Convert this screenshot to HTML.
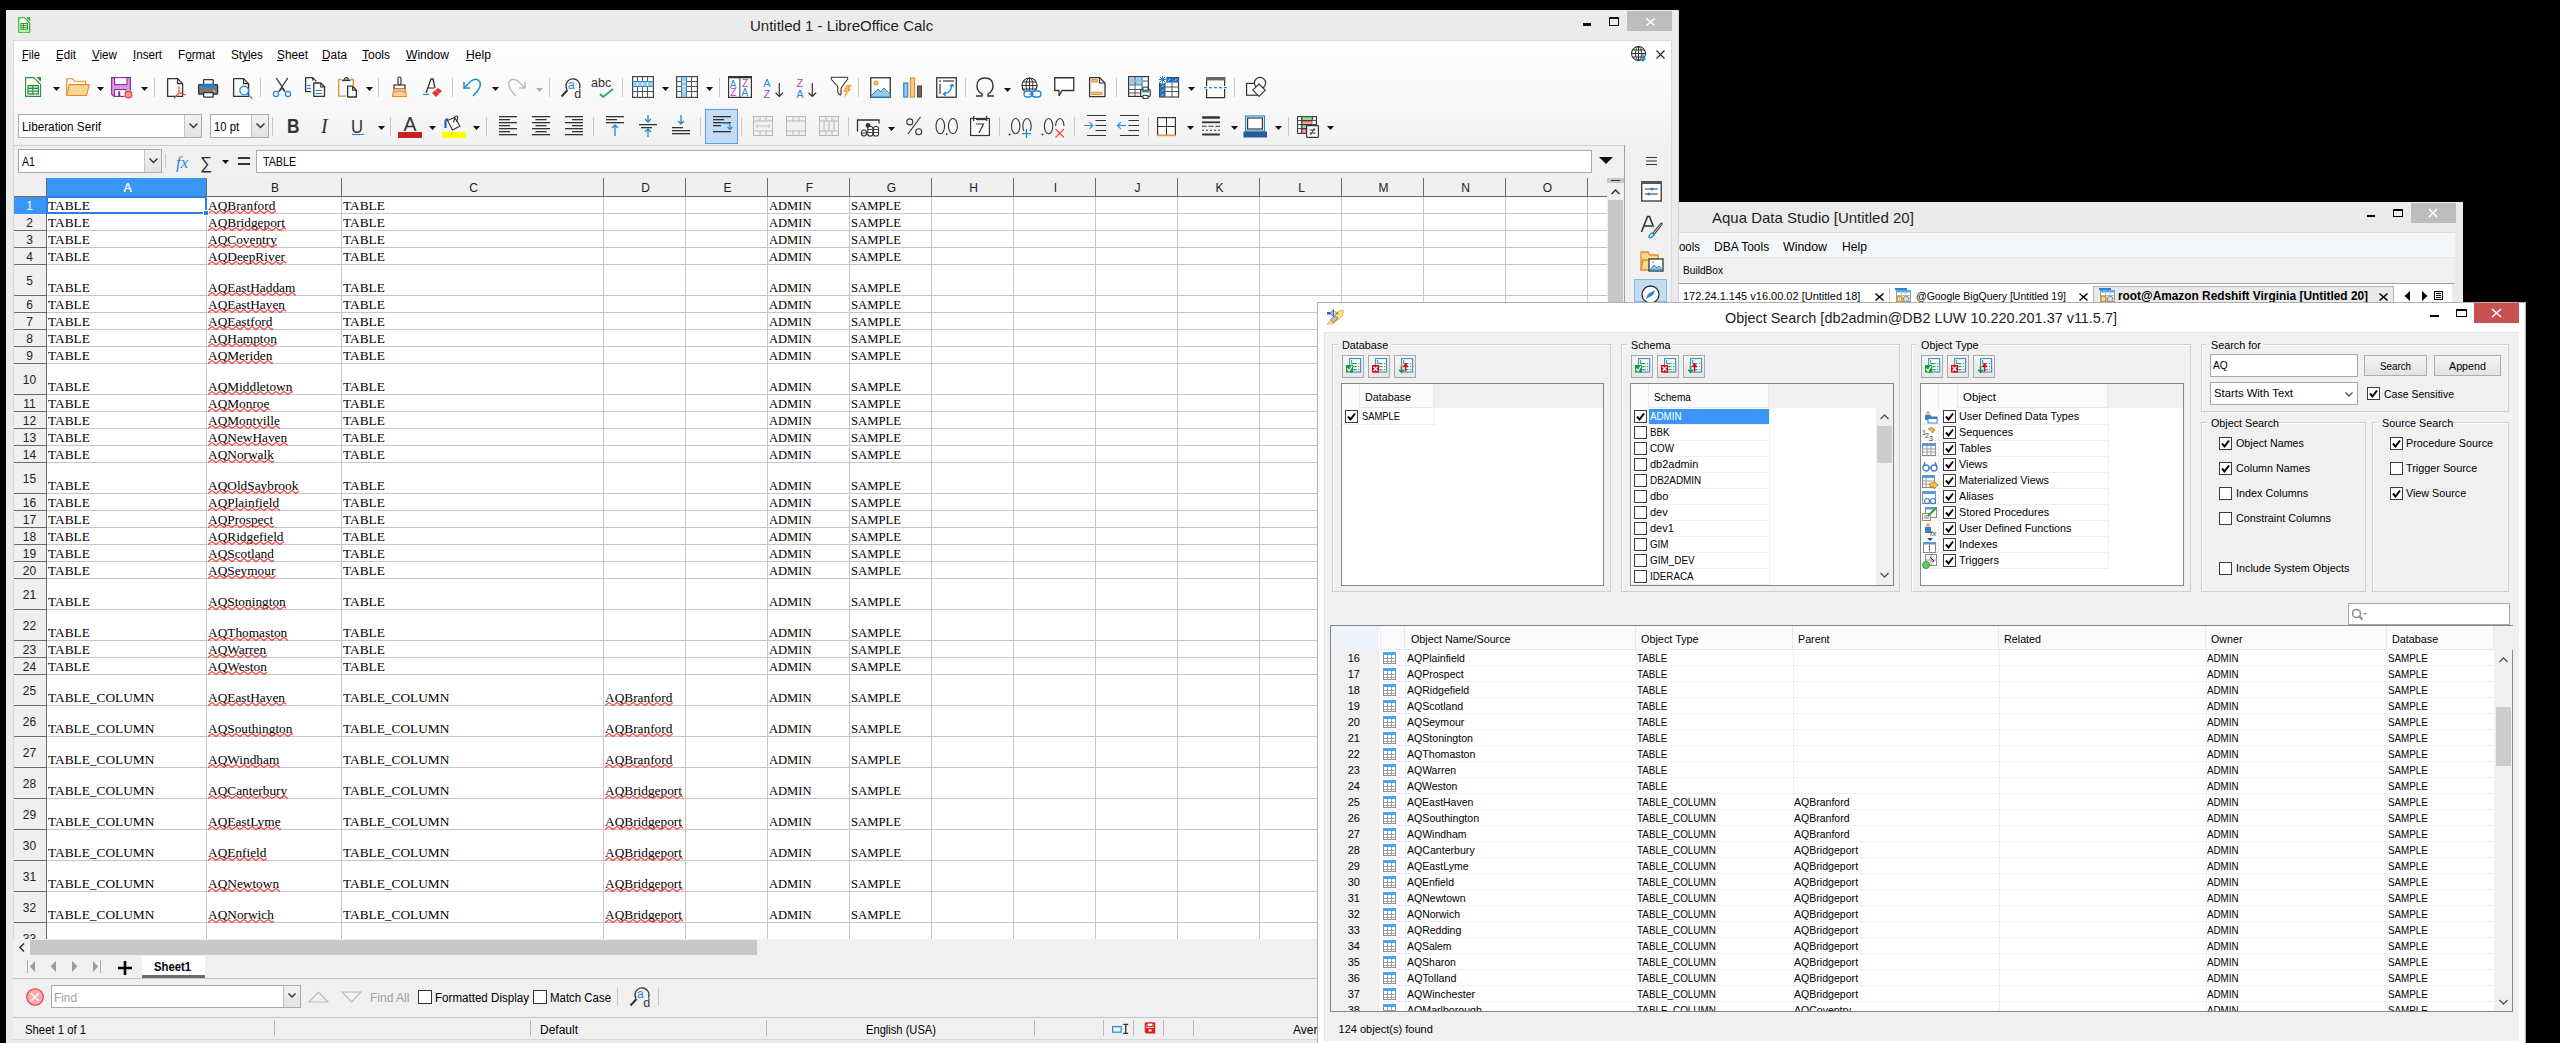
<!DOCTYPE html><html><head><meta charset="utf-8"><style>
html,body{margin:0;padding:0;}
body{width:2560px;height:1043px;background:#000;position:relative;overflow:hidden;font-family:"Liberation Sans",sans-serif;}
div{position:absolute;box-sizing:border-box;}
.t{white-space:pre;}
svg{overflow:visible}
</style></head><body>
<div style="left:1600px;top:202px;width:863px;height:841px;background:#ebebeb;"></div>
<div class="t" style="left:1712px;top:210.00px;font-size:15px;line-height:15px;color:#1e1e1e;font-family:'Liberation Sans',sans-serif;font-weight:normal;">Aqua Data Studio [Untitled 20]</div>
<div style="left:2367px;top:215px;width:8px;height:2px;background:#000;"></div>
<div style="left:2393px;top:209px;width:10px;height:8px;border:1px solid #000;border-top-width:2px;"></div>
<div style="left:2411px;top:203px;width:45px;height:20px;background:#bdbdbd;"></div>
<svg style="position:absolute;left:2428px;top:208px;" width="10" height="10" viewBox="0 0 10 10"><path d="M1 1L9 9M9 1L1 9" stroke="#fff" stroke-width="1.6"/></svg>
<div style="left:1600px;top:232px;width:855px;height:1px;background:#dcdcdc;"></div>
<div style="left:1600px;top:233px;width:855px;height:24px;background:#f5f6f7;"></div>
<div style="left:1600px;top:257px;width:855px;height:1px;background:#e6e6e6;"></div>
<div class="t" style="left:1679px;top:241.00px;font-size:12px;line-height:12px;color:#000;font-family:'Liberation Sans',sans-serif;font-weight:normal;transform:scaleX(0.9539);transform-origin:0 0;">ools</div>
<div class="t" style="left:1714px;top:241.00px;font-size:12px;line-height:12px;color:#000;font-family:'Liberation Sans',sans-serif;font-weight:normal;">DBA Tools</div>
<div class="t" style="left:1783px;top:241.00px;font-size:12px;line-height:12px;color:#000;font-family:'Liberation Sans',sans-serif;font-weight:normal;transform:scaleX(1.0307);transform-origin:0 0;">Window</div>
<div class="t" style="left:1842px;top:241.00px;font-size:12px;line-height:12px;color:#000;font-family:'Liberation Sans',sans-serif;font-weight:normal;transform:scaleX(1.0127);transform-origin:0 0;">Help</div>
<div style="left:1600px;top:258px;width:855px;height:25px;background:#f0f0f0;"></div>
<div class="t" style="left:1683px;top:265.00px;font-size:11px;line-height:11px;color:#000;font-family:'Liberation Sans',sans-serif;font-weight:normal;transform:scaleX(0.9209);transform-origin:0 0;">BuildBox</div>
<div style="left:1600px;top:283px;width:855px;height:1px;background:#a0a0a0;"></div>
<div style="left:1600px;top:284px;width:852px;height:30px;background:#fff;"></div>
<div class="t" style="left:1683px;top:291.00px;font-size:11px;line-height:11px;color:#000;font-family:'Liberation Sans',sans-serif;font-weight:normal;">172.24.1.145 v16.00.02 [Untitled 18]</div>
<svg style="position:absolute;left:1875px;top:293px;" width="9" height="8" viewBox="0 0 9 8"><path d="M0.5 0.5L8.5 7.5M8.5 0.5L0.5 7.5" stroke="#000" stroke-width="1.5"/></svg>
<div style="left:1889px;top:288px;width:1px;height:15px;background:#c8c8c8;"></div>
<svg style="position:absolute;left:1895px;top:288px;" width="17" height="15" viewBox="0 0 17 15"><rect x="0" y="0" width="12" height="2" fill="#3c7fc8"/><rect x="1.5" y="2.5" width="14" height="11" fill="#fff" stroke="#9a9a9a"/><rect x="2" y="2" width="14" height="2.5" fill="#5aaee8"/><path d="M2 7.5H15M2 10.5H15M6.5 4.5V13.5M11 4.5V13.5" stroke="#b8b8b8"/><circle cx="4.5" cy="11" r="2.6" fill="#fff" stroke="#d89a30" stroke-width="1.6"/><circle cx="4.5" cy="11" r="0.8" fill="#d89a30"/><circle cx="11" cy="11" r="2.8" fill="#cfe3f3" stroke="#8a8a8a"/></svg>
<div class="t" style="left:1916px;top:291.00px;font-size:11px;line-height:11px;color:#000;font-family:'Liberation Sans',sans-serif;font-weight:normal;transform:scaleX(0.9529);transform-origin:0 0;">@Google BigQuery [Untitled 19]</div>
<svg style="position:absolute;left:2079px;top:293px;" width="9" height="8" viewBox="0 0 9 8"><path d="M0.5 0.5L8.5 7.5M8.5 0.5L0.5 7.5" stroke="#000" stroke-width="1.5"/></svg>
<div style="left:2093px;top:286px;width:301px;height:20px;background:#e9e9e9;border:1px solid #b4b4b4;border-bottom:none;"></div>
<svg style="position:absolute;left:2099px;top:288px;" width="17" height="15" viewBox="0 0 17 15"><rect x="0" y="0" width="12" height="2" fill="#3c7fc8"/><rect x="1.5" y="2.5" width="14" height="11" fill="#fff" stroke="#9a9a9a"/><rect x="2" y="2" width="14" height="2.5" fill="#5aaee8"/><path d="M2 7.5H15M2 10.5H15M6.5 4.5V13.5M11 4.5V13.5" stroke="#b8b8b8"/><circle cx="4.5" cy="11" r="2.6" fill="#fff" stroke="#d89a30" stroke-width="1.6"/><circle cx="4.5" cy="11" r="0.8" fill="#d89a30"/><circle cx="11" cy="11" r="2.8" fill="#cfe3f3" stroke="#8a8a8a"/></svg>
<div class="t" style="left:2118px;top:290.00px;font-size:12px;line-height:12px;color:#000;font-family:'Liberation Sans',sans-serif;font-weight:bold;transform:scaleX(0.9890);transform-origin:0 0;">root@Amazon Redshift Virginia [Untitled 20]</div>
<svg style="position:absolute;left:2379px;top:293px;" width="9" height="8" viewBox="0 0 9 8"><path d="M0.5 0.5L8.5 7.5M8.5 0.5L0.5 7.5" stroke="#000" stroke-width="1.5"/></svg>
<svg style="position:absolute;left:2404px;top:291px;" width="7" height="10" viewBox="0 0 7 10"><path d="M6 0L0.5 5L6 10Z" fill="#000"/></svg>
<svg style="position:absolute;left:2421px;top:291px;" width="7" height="10" viewBox="0 0 7 10"><path d="M1 0L6.5 5L1 10Z" fill="#000"/></svg>
<svg style="position:absolute;left:2434px;top:291px;" width="9" height="9" viewBox="0 0 9 9"><rect x="0.5" y="0.5" width="8" height="8" fill="#fff" stroke="#000"/><path d="M2 2.5h5M2 4.5h5M2 6.5h5" stroke="#000"/></svg>
<div style="left:6px;top:10px;width:1673px;height:1033px;background:#ebebeb;"></div>
<svg style="position:absolute;left:17px;top:16px;" width="14" height="18" viewBox="0 0 14 18"><path d="M1.8 1.7H7.6L12.7 7.2V16.2H1.8Z" fill="#fff" stroke="#22aa22" stroke-width="1.1" stroke-linejoin="round"/><path d="M9.2 1.2H13.2V5.4Z" fill="#22aa22"/><rect x="3.9" y="7.5" width="6.6" height="6.2" fill="none" stroke="#22aa22" stroke-width="1.1"/><path d="M3.9 9.6H10.5M3.9 11.6H10.5M6.4 7.5V13.7" stroke="#22aa22" stroke-width="1"/></svg>
<div class="t" style="left:750px;top:18.00px;font-size:15px;line-height:15px;color:#1e1e1e;font-family:'Liberation Sans',sans-serif;font-weight:normal;">Untitled 1 - LibreOffice Calc</div>
<div style="left:1583px;top:23px;width:8px;height:3px;background:#111;"></div>
<div style="left:1609px;top:17px;width:10px;height:9px;border:1px solid #111;border-top-width:2px;"></div>
<div style="left:1627px;top:11px;width:45px;height:20px;background:#bdbdbd;"></div>
<svg style="position:absolute;left:1646px;top:18px;" width="9" height="8" viewBox="0 0 9 8"><path d="M0.5 0.5L8.5 7.5M8.5 0.5L0.5 7.5" stroke="#fff" stroke-width="1.5"/></svg>
<div style="left:13px;top:40px;width:1658px;height:1px;background:#d9d9d9;"></div>
<div style="left:13px;top:41px;width:1658px;height:104px;background:linear-gradient(#fefefe,#fbfbfb 40%,#f2f2f2);"></div>
<div class="t" style="left:22px;top:49.00px;font-size:12.5px;line-height:12.5px;color:#000;font-family:'Liberation Sans',sans-serif;font-weight:normal;transform:scaleX(0.8930);transform-origin:0 0;">File</div>
<div class="t" style="left:56px;top:49.00px;font-size:12.5px;line-height:12.5px;color:#000;font-family:'Liberation Sans',sans-serif;font-weight:normal;transform:scaleX(0.9282);transform-origin:0 0;">Edit</div>
<div class="t" style="left:92px;top:49.00px;font-size:12.5px;line-height:12.5px;color:#000;font-family:'Liberation Sans',sans-serif;font-weight:normal;transform:scaleX(0.9297);transform-origin:0 0;">View</div>
<div class="t" style="left:133px;top:49.00px;font-size:12.5px;line-height:12.5px;color:#000;font-family:'Liberation Sans',sans-serif;font-weight:normal;transform:scaleX(0.9280);transform-origin:0 0;">Insert</div>
<div class="t" style="left:178px;top:49.00px;font-size:12.5px;line-height:12.5px;color:#000;font-family:'Liberation Sans',sans-serif;font-weight:normal;transform:scaleX(0.9349);transform-origin:0 0;">Format</div>
<div class="t" style="left:231px;top:49.00px;font-size:12.5px;line-height:12.5px;color:#000;font-family:'Liberation Sans',sans-serif;font-weight:normal;transform:scaleX(0.9399);transform-origin:0 0;">Styles</div>
<div class="t" style="left:277px;top:49.00px;font-size:12.5px;line-height:12.5px;color:#000;font-family:'Liberation Sans',sans-serif;font-weight:normal;transform:scaleX(0.9488);transform-origin:0 0;">Sheet</div>
<div class="t" style="left:322px;top:49.00px;font-size:12.5px;line-height:12.5px;color:#000;font-family:'Liberation Sans',sans-serif;font-weight:normal;transform:scaleX(0.9467);transform-origin:0 0;">Data</div>
<div class="t" style="left:362px;top:49.00px;font-size:12.5px;line-height:12.5px;color:#000;font-family:'Liberation Sans',sans-serif;font-weight:normal;transform:scaleX(0.9593);transform-origin:0 0;">Tools</div>
<div class="t" style="left:406px;top:49.00px;font-size:12.5px;line-height:12.5px;color:#000;font-family:'Liberation Sans',sans-serif;font-weight:normal;transform:scaleX(0.9670);transform-origin:0 0;">Window</div>
<div class="t" style="left:466px;top:49.00px;font-size:12.5px;line-height:12.5px;color:#000;font-family:'Liberation Sans',sans-serif;font-weight:normal;transform:scaleX(0.9721);transform-origin:0 0;">Help</div>
<div style="left:22px;top:60px;width:6px;height:1px;background:#000;"></div>
<div style="left:56px;top:60px;width:6px;height:1px;background:#000;"></div>
<div style="left:92px;top:60px;width:7px;height:1px;background:#000;"></div>
<div style="left:133px;top:60px;width:2px;height:1px;background:#000;"></div>
<div style="left:187px;top:60px;width:6px;height:1px;background:#000;"></div>
<div style="left:245px;top:60px;width:5px;height:1px;background:#000;"></div>
<div style="left:277px;top:60px;width:6px;height:1px;background:#000;"></div>
<div style="left:322px;top:60px;width:7px;height:1px;background:#000;"></div>
<div style="left:362px;top:60px;width:6px;height:1px;background:#000;"></div>
<div style="left:406px;top:60px;width:10px;height:1px;background:#000;"></div>
<div style="left:466px;top:60px;width:7px;height:1px;background:#000;"></div>
<svg style="position:absolute;left:1631px;top:46px;" width="17" height="17" viewBox="0 0 17 17"><circle cx="7.5" cy="7.5" r="7" fill="none" stroke="#333" stroke-width="1.1"/><path d="M0.5 7.5H14.5M1.5 4H13.5M1.5 11H13.5M7.5 0.5V14.5" stroke="#333" stroke-width="1"/><ellipse cx="7.5" cy="7.5" rx="3" ry="7" fill="none" stroke="#333"/><path d="M12 8V15M9.5 12.5L12 15L14.5 12.5" stroke="#1e8bd8" stroke-width="1.3" fill="none"/></svg>
<svg style="position:absolute;left:1656px;top:50px;" width="9" height="9" viewBox="0 0 9 9"><path d="M0.5 0.5L8.5 8.5M8.5 0.5L0.5 8.5" stroke="#222" stroke-width="1.1"/></svg>
<svg style="position:absolute;left:25px;top:77px;" width="17" height="21" viewBox="0 0 17 21"><path d="M0.6 0.6H8.6L15.6 7.6V19.4H0.6Z" fill="#fff" stroke="#2a8f3a" stroke-width="1.1"/><path d="M11.3 0H16V4.7Z" fill="#2a8f3a"/><rect x="3" y="8.6" width="10.4" height="8.4" fill="#fff" stroke="#2a8f3a" stroke-width="1.3"/><rect x="3.6" y="9.2" width="9.2" height="1.6" fill="#a8dca8"/><path d="M3 11.4H13.4M3 14.2H13.4M7.8 8.6V17" stroke="#2a8f3a" stroke-width="1.2"/></svg>
<svg style="position:absolute;left:53px;top:87px;" width="7" height="4" viewBox="0 0 7 4"><path d="M0 0H7L3.5 4Z" fill="#111"/></svg>
<svg style="position:absolute;left:66px;top:78px;" width="24" height="19" viewBox="0 0 24 19"><path d="M0.8 17.5V0.8H6.5L8.8 3.3H19.5V6.5" fill="#fafafa" stroke="#e8892c" stroke-width="1.1"/><path d="M0.8 17.5L3.2 6.6H23.2L20.6 17.5Z" fill="#f6d98e" stroke="#e8892c" stroke-width="1.1"/></svg>
<svg style="position:absolute;left:97px;top:87px;" width="7" height="4" viewBox="0 0 7 4"><path d="M0 0H7L3.5 4Z" fill="#111"/></svg>
<svg style="position:absolute;left:111px;top:77px;" width="21" height="21" viewBox="0 0 21 21"><path d="M0.6 0.6H19.4V19.4H3L0.6 17Z" fill="#d898e0" stroke="#8a2aa0" stroke-width="1.1"/><rect x="3.6" y="0.6" width="12.4" height="7" fill="#fff" stroke="#8a2aa0" stroke-width="1.1"/><rect x="3.6" y="12.6" width="11.4" height="6.8" fill="#fff" stroke="#8a2aa0" stroke-width="1.1"/><rect x="7.2" y="14.3" width="2" height="5" fill="#8a2aa0"/><circle cx="17.5" cy="17.5" r="4.6" fill="#fff"/><circle cx="17.5" cy="17.5" r="3.4" fill="#ff9a9a" stroke="#e03030" stroke-width="1.1"/></svg>
<svg style="position:absolute;left:141px;top:87px;" width="7" height="4" viewBox="0 0 7 4"><path d="M0 0H7L3.5 4Z" fill="#111"/></svg>
<div style="left:154px;top:78px;width:1px;height:19px;background:#c8c8c8;"></div>
<svg style="position:absolute;left:166px;top:77px;" width="21" height="22" viewBox="0 0 21 22"><path d="M1.6 1.6H11.6L16.6 6.6V19.4H1.6Z" fill="#fafafa" stroke="#333" stroke-width="1.3" stroke-linejoin="round"/><path d="M11.6 1.6V6.6H16.6" fill="none" stroke="#333" stroke-width="1.3"/><path d="M13.2 9.5C13 12 12.6 14 13.4 15.8M13.4 15.8C11.6 17.5 10 19.6 8 21.5M13.4 15.8C15.6 16.2 18 16.8 19.6 18" fill="none" stroke="#e84848" stroke-width="1.2"/><path d="M12.5 14.5L14 16.5M12 16.5L14.5 15.5" stroke="#f08080" stroke-width="0.8"/></svg>
<svg style="position:absolute;left:197px;top:78px;" width="22" height="21" viewBox="0 0 22 21"><rect x="6.6" y="1.6" width="9.6" height="6" rx="0.6" fill="#fafafa" stroke="#333" stroke-width="1.3"/><rect x="1.6" y="6.6" width="19" height="9.6" rx="0.8" fill="#7a7876" stroke="#333" stroke-width="1.3"/><rect x="5" y="5.6" width="12.6" height="3.4" fill="#1a80cc"/><rect x="16.3" y="12.6" width="2" height="1" fill="#fff"/><rect x="6.6" y="14.6" width="9.6" height="4.6" rx="0.6" fill="#fafafa" stroke="#333" stroke-width="1.3"/></svg>
<svg style="position:absolute;left:232px;top:77px;" width="22" height="22" viewBox="0 0 22 22"><path d="M1.6 1.6H11.6L16.6 6.6V19.4H1.6Z" fill="#fafafa" stroke="#333" stroke-width="1.3" stroke-linejoin="round"/><path d="M11.6 1.6V6.6H16.6" fill="none" stroke="#333" stroke-width="1.3"/><circle cx="12.2" cy="13.6" r="4.3" fill="#fafafa" stroke="#1e8bd8" stroke-width="1.3"/><path d="M15.3 16.7L20.4 21.6" stroke="#1e8bd8" stroke-width="1.3"/></svg>
<div style="left:260px;top:78px;width:1px;height:19px;background:#c8c8c8;"></div>
<svg style="position:absolute;left:265px;top:72px;" width="30" height="26" viewBox="0 0 30 26"><path d="M11.3 6L17 14.8L22.8 6" fill="none" stroke="#333" stroke-width="1.3"/><path d="M17 15.5L14 19.6M17 15.5L19.9 19.6" stroke="#333" stroke-width="1.7"/><circle cx="11" cy="22" r="2.6" fill="none" stroke="#1e8bd8" stroke-width="1.3"/><circle cx="23" cy="22" r="2.6" fill="none" stroke="#1e8bd8" stroke-width="1.3"/></svg>
<svg style="position:absolute;left:304px;top:76px;" width="22" height="22" viewBox="0 0 22 22"><path d="M7.2 15.6H1.6V1.6H8.7L12.3 5.4" fill="#fafafa" stroke="#333" stroke-width="1.3" stroke-linejoin="round"/><path d="M8.7 1.6V4.4" stroke="#333" stroke-width="1.3"/><path d="M2.8 9.5H7M2.8 12.4H7" stroke="#1e8bd8" stroke-width="1.1"/><path d="M9.8 7H16.8L20.5 10.8V20.4H9.8Z" fill="#fafafa" stroke="#333" stroke-width="1.3" stroke-linejoin="round"/><path d="M16.8 7V10.8H20.5" fill="none" stroke="#333" stroke-width="1.2"/><path d="M11.6 14.5H18M11.6 17.5H18" stroke="#1e8bd8" stroke-width="1.1"/></svg>
<svg style="position:absolute;left:337px;top:75px;" width="22" height="24" viewBox="0 0 22 24"><path d="M4.2 4.5H1.7V21.2H8.6M13.8 4.5H16.3V10.5" fill="none" stroke="#e8892c" stroke-width="1.3"/><path d="M5 5.3H13.4" stroke="#333" stroke-width="1.6"/><path d="M7.5 4.6A1.9 1.9 0 0 1 11.3 4.6" fill="none" stroke="#333" stroke-width="1.2"/><path d="M10.6 11.2H15.6L19.4 15.2V22H10.6Z" fill="#fafafa" stroke="#333" stroke-width="1.3" stroke-linejoin="round"/><path d="M15.6 11.2V15.2H19.4" fill="none" stroke="#333" stroke-width="1.2"/></svg>
<svg style="position:absolute;left:366px;top:87px;" width="7" height="4" viewBox="0 0 7 4"><path d="M0 0H7L3.5 4Z" fill="#111"/></svg>
<div style="left:378px;top:78px;width:1px;height:19px;background:#c8c8c8;"></div>
<svg style="position:absolute;left:392px;top:76px;" width="16" height="22" viewBox="0 0 16 22"><rect x="6" y="1" width="3" height="8" rx="1.5" fill="#fff" stroke="#333" stroke-width="1.2"/><rect x="2" y="9" width="11" height="4" fill="#fff" stroke="#333" stroke-width="1.2"/><path d="M2 13L0.5 20.5H14.5L13 13Z" fill="#fad0a0" stroke="#e8892c" stroke-width="1.2"/><path d="M2 16Q8 14 13 16" stroke="#e8892c" fill="none"/></svg>
<svg style="position:absolute;left:423px;top:78px;" width="20" height="20" viewBox="0 0 20 20"><path d="M3 15L8 1H10L12 10" fill="none" stroke="#333" stroke-width="1.3"/><path d="M5 10H11" stroke="#333" stroke-width="1.1"/><path d="M0 16.5H6" stroke="#1e8bd8" stroke-width="1.2"/><path d="M9 15L15 10L19 13L13 19Z" fill="#e03030"/><path d="M12 12L16 15" stroke="#f08080"/></svg>
<div style="left:452px;top:78px;width:1px;height:19px;background:#c8c8c8;"></div>
<svg style="position:absolute;left:463px;top:77px;" width="19" height="20" viewBox="0 0 19 20"><path d="M1 11L8 4Q14 0 17 5Q19 10 10 19" fill="none" stroke="#1e8bd8" stroke-width="1.5"/><path d="M1 5V11H7" fill="none" stroke="#1e8bd8" stroke-width="1.5"/></svg>
<svg style="position:absolute;left:492px;top:87px;" width="7" height="4" viewBox="0 0 7 4"><path d="M0 0H7L3.5 4Z" fill="#111"/></svg>
<svg style="position:absolute;left:507px;top:77px;" width="19" height="20" viewBox="0 0 19 20"><path d="M18 11L11 4Q5 0 2 5Q0 10 9 19" fill="none" stroke="#bdbdbd" stroke-width="1.5"/><path d="M18 5V11H12" fill="none" stroke="#bdbdbd" stroke-width="1.5"/></svg>
<svg style="position:absolute;left:536px;top:88px;" width="7" height="4" viewBox="0 0 7 4"><path d="M0 0H7L3.5 4Z" fill="#aaa"/></svg>
<div style="left:549px;top:78px;width:1px;height:19px;background:#c8c8c8;"></div>
<svg style="position:absolute;left:560px;top:76px;" width="24" height="23" viewBox="0 0 24 23"><path d="M7 13.5A7 7 0 1 1 19.5 12.5" fill="none" stroke="#333" stroke-width="1.2"/><path d="M7.5 14L1.5 20.5" stroke="#333" stroke-width="2"/><text x="8" y="12.5" font-size="12" fill="#1e8bd8" font-family="Liberation Sans">a</text><text x="14.2" y="22" font-size="12.5" fill="#333" font-family="Liberation Sans">d</text></svg>
<svg style="position:absolute;left:591px;top:76px;" width="24" height="22" viewBox="0 0 24 22"><text x="0" y="11" font-size="12.5" fill="#333" font-family="Liberation Sans">abc</text><path d="M9 18L12 21L22 13" fill="none" stroke="#2ab050" stroke-width="1.8"/></svg>
<div style="left:622px;top:78px;width:1px;height:19px;background:#c8c8c8;"></div>
<svg style="position:absolute;left:632px;top:76px;" width="22" height="22" viewBox="0 0 22 22"><rect x="0.6" y="0.6" width="20.8" height="20.8" fill="#fff" stroke="#444" stroke-width="1.2"/><rect x="1" y="5.5" width="20" height="5" fill="#a6cbe8"/><path d="M0.6 5.5H21.4M0.6 10.5H21.4" stroke="#1e8bd8" stroke-width="1"/><path d="M0.6 15.5H21.4M5.5 0.6V5M10.5 0.6V5M15.5 0.6V5M5.5 11V21.4M10.5 11V21.4M15.5 11V21.4" stroke="#555" stroke-width="1"/><path d="M5.5 6V10M10.5 6V10M15.5 6V10" stroke="#fff" stroke-width="1"/></svg>
<svg style="position:absolute;left:662px;top:87px;" width="7" height="4" viewBox="0 0 7 4"><path d="M0 0H7L3.5 4Z" fill="#111"/></svg>
<svg style="position:absolute;left:676px;top:76px;" width="22" height="22" viewBox="0 0 22 22"><rect x="0.6" y="0.6" width="20.8" height="20.8" fill="#fff" stroke="#444" stroke-width="1.2"/><rect x="5.5" y="1" width="5" height="20" fill="#a6cbe8"/><path d="M5.5 0.6V21.4M10.5 0.6V21.4" stroke="#1e8bd8" stroke-width="1"/><path d="M15.5 0.6V21.4M0.6 5.5H5M0.6 10.5H5M0.6 15.5H5M11 5.5H21.4M11 10.5H21.4M11 15.5H21.4" stroke="#555" stroke-width="1"/><path d="M6 5.5H10M6 10.5H10M6 15.5H10" stroke="#fff" stroke-width="1"/></svg>
<svg style="position:absolute;left:706px;top:87px;" width="7" height="4" viewBox="0 0 7 4"><path d="M0 0H7L3.5 4Z" fill="#111"/></svg>
<div style="left:719px;top:78px;width:1px;height:19px;background:#c8c8c8;"></div>
<svg style="position:absolute;left:728px;top:76px;" width="24" height="22" viewBox="0 0 24 22"><rect x="0.6" y="0.6" width="22.8" height="20.8" fill="#fff" stroke="#333" stroke-width="1.2"/><rect x="0" y="0" width="24" height="2.3" fill="#333"/><path d="M11.9 2V21" stroke="#333" stroke-width="1"/><text x="1.8" y="11.6" font-size="10" fill="#1e8bd8" font-family="Liberation Sans">A</text><text x="2.2" y="20.2" font-size="10" fill="#b040c0" font-family="Liberation Sans">Z</text><text x="14" y="10.6" font-size="10" fill="#b040c0" font-family="Liberation Sans">Z</text><text x="13.6" y="20.2" font-size="10" fill="#1e8bd8" font-family="Liberation Sans">A</text></svg>
<svg style="position:absolute;left:763px;top:76px;" width="22" height="22" viewBox="0 0 22 22"><text x="0.2" y="10.5" font-size="11" fill="#1e8bd8" font-family="Liberation Sans">A</text><text x="0.6" y="21.5" font-size="11" fill="#b040c0" font-family="Liberation Sans">Z</text><path d="M16.3 7V20.5M12.5 16.8L16.3 20.5L20.1 16.8" fill="none" stroke="#333" stroke-width="1.2"/></svg>
<svg style="position:absolute;left:796px;top:76px;" width="22" height="22" viewBox="0 0 22 22"><text x="0.6" y="10.5" font-size="11" fill="#b040c0" font-family="Liberation Sans">Z</text><text x="0.2" y="21.5" font-size="11" fill="#1e8bd8" font-family="Liberation Sans">A</text><path d="M16.3 7V20.5M12.5 16.8L16.3 20.5L20.1 16.8" fill="none" stroke="#333" stroke-width="1.2"/></svg>
<svg style="position:absolute;left:830px;top:76px;" width="22" height="23" viewBox="0 0 22 23"><path d="M2.3 1.2H16.5Q18.5 1.5 17.3 3.5L11.8 11Q11 12 11 13.5V18Q11 19.5 9.5 18.5L8.8 18Q7.8 17 7.8 15.5V11Q7.8 10.5 7 9.5L1.5 3.5Q0.5 1.5 2.3 1.2Z" fill="#fff" stroke="#333" stroke-width="1.1"/><path d="M16.5 9H22L18.8 12.8H21.3L13.5 22.5L16.3 15.8H13.3Z" fill="#f39c32"/><path d="M18 10.5L16 14.3H18.3L16.5 18" stroke="#fde08a" stroke-width="0.9" fill="none"/></svg>
<div style="left:858px;top:78px;width:1px;height:19px;background:#c8c8c8;"></div>
<svg style="position:absolute;left:870px;top:77px;" width="21" height="21" viewBox="0 0 21 21"><rect x="0.75" y="0.75" width="19.5" height="19.5" fill="#fff" stroke="#333" stroke-width="1.3"/><circle cx="6" cy="6" r="2" fill="#f6c078" stroke="#e8892c"/><path d="M1 19L8 12L11 15L14 11L20 17V20H1Z" fill="#9cc6ea" stroke="#1e8bd8"/></svg>
<svg style="position:absolute;left:903px;top:77px;" width="20" height="21" viewBox="0 0 20 21"><rect x="0.75" y="6" width="4" height="14" fill="#9cc6ea" stroke="#1e8bd8" stroke-width="1.2"/><rect x="7.5" y="1" width="4" height="19" fill="#fad28a" stroke="#e8892c" stroke-width="1.2"/><rect x="14.5" y="9" width="4" height="11" fill="#666" stroke="#444" stroke-width="1"/></svg>
<svg style="position:absolute;left:936px;top:77px;" width="21" height="21" viewBox="0 0 21 21"><rect x="0.75" y="0.75" width="19.5" height="19.5" fill="#fff" stroke="#333" stroke-width="1.3"/><rect x="3" y="3" width="2" height="2" fill="#888"/><rect x="7" y="3" width="11" height="2" fill="#888"/><rect x="3" y="7" width="2" height="10" fill="#888"/><path d="M8 17Q15 16 16 8M14 9.5L16 7.5L18 9.5M9.5 15L7.5 17L9.5 19" fill="none" stroke="#1e8bd8" stroke-width="1.3"/></svg>
<div style="left:965px;top:78px;width:1px;height:19px;background:#c8c8c8;"></div>
<svg style="position:absolute;left:975px;top:77px;" width="21" height="20" viewBox="0 0 21 20"><path d="M1 19H7V17Q2 14 2 9Q2 1 10 1Q18 1 18 9Q18 14 13 17V19H19" fill="none" stroke="#333" stroke-width="1.4"/></svg>
<svg style="position:absolute;left:1004px;top:88px;" width="7" height="4" viewBox="0 0 7 4"><path d="M0 0H7L3.5 4Z" fill="#111"/></svg>
<svg style="position:absolute;left:1021px;top:77px;" width="22" height="21" viewBox="0 0 22 21"><circle cx="8.5" cy="8.5" r="7.5" fill="#fff" stroke="#333" stroke-width="1.2"/><path d="M1 8.5H16M2 5H15M2 12H15M8.5 1V16" stroke="#333"/><ellipse cx="8.5" cy="8.5" rx="3.5" ry="7.5" fill="none" stroke="#333"/><rect x="3" y="14" width="8" height="6" rx="3" fill="#fff" stroke="#1e8bd8" stroke-width="1.3"/><rect x="11" y="14" width="9" height="6" rx="3" fill="#fff" stroke="#1e8bd8" stroke-width="1.3"/><path d="M8 17H13" stroke="#1e8bd8" stroke-width="1.3"/></svg>
<svg style="position:absolute;left:1054px;top:77px;" width="21" height="20" viewBox="0 0 21 20"><path d="M0.75 0.75H19.75V13.5H8L5 19V13.5H0.75Z" fill="#fff" stroke="#333" stroke-width="1.3"/></svg>
<svg style="position:absolute;left:1088px;top:76px;" width="19" height="23" viewBox="0 0 19 23"><path d="M1.6 1.6H11.6L17 7V20.6H1.6Z" fill="#fafafa" stroke="#333" stroke-width="1.3" stroke-linejoin="round"/><path d="M11.6 1.6V7H17" fill="none" stroke="#333" stroke-width="1.1"/><rect x="3.8" y="3.6" width="5.6" height="2.4" fill="#f6c078" stroke="#e8892c" stroke-width="0.9"/><rect x="3.8" y="16.2" width="10" height="2.4" fill="#f6c078" stroke="#e8892c" stroke-width="0.9"/></svg>
<div style="left:1116px;top:78px;width:1px;height:19px;background:#c8c8c8;"></div>
<svg style="position:absolute;left:1127px;top:75px;" width="24" height="25" viewBox="0 0 24 25"><rect x="1.6" y="1.6" width="19.8" height="19.8" fill="#fff" stroke="#333" stroke-width="1.2"/><rect x="2" y="2" width="13" height="8" fill="#a6cbe8"/><path d="M1.6 6H21.4M1.6 14.5H21.4M1.6 18H21.4M8 1.6V21.4M15 10V21.4" stroke="#555" stroke-width="1"/><path d="M1.6 10H15V1.6" fill="none" stroke="#1e8bd8" stroke-width="1.1"/><path d="M2 6H15" stroke="#fff" stroke-width="0.8"/><rect x="13.6" y="14.6" width="9.6" height="7" rx="1" fill="#fff" stroke="#333" stroke-width="1.2"/><rect x="16" y="12.2" width="5" height="3" fill="#fff" stroke="#333" stroke-width="1"/><rect x="15" y="15.8" width="7" height="1.6" fill="#1e8bd8"/><rect x="16" y="20.4" width="5" height="3" fill="#fff" stroke="#333" stroke-width="1"/></svg>
<svg style="position:absolute;left:1158px;top:75px;" width="23" height="24" viewBox="0 0 23 24"><rect x="1.6" y="2.6" width="19" height="19.4" fill="#fff" stroke="#333" stroke-width="1.1"/><rect x="7" y="2.6" width="13.6" height="5" fill="#1e6fc0"/><rect x="1.6" y="8" width="5.4" height="14" fill="#1e6fc0"/><path d="M7 7.6V22M14 7.6V22M7 12H20.6M7 16.5H20.6" stroke="#555" stroke-width="1"/><path d="M10 6L12 4M16.5 6L18.5 4M3.5 12L5.5 10M3.5 16.5L5.5 14.5M3.5 21L5.5 19" stroke="#cfe3f7" stroke-width="0.9"/><circle cx="4.5" cy="4.5" r="4" fill="#fff"/><path d="M4.5 0.8V8.2M0.8 4.5H8.2M1.9 1.9L7.1 7.1M7.1 1.9L1.9 7.1" stroke="#1e8bd8" stroke-width="1"/></svg>
<svg style="position:absolute;left:1188px;top:87px;" width="7" height="4" viewBox="0 0 7 4"><path d="M0 0H7L3.5 4Z" fill="#111"/></svg>
<svg style="position:absolute;left:1204px;top:76px;" width="23" height="23" viewBox="0 0 23 23"><path d="M2.6 13V21.6H20.6V13M2.6 10V1.6H20.6V10" fill="none" stroke="#333" stroke-width="1.2"/><rect x="2" y="1" width="19.2" height="3.4" fill="#666"/><path d="M0 11.6H23" stroke="#1e8bd8" stroke-width="1.3" stroke-dasharray="3 2"/></svg>
<div style="left:1234px;top:78px;width:1px;height:19px;background:#c8c8c8;"></div>
<svg style="position:absolute;left:1245px;top:76px;" width="22" height="22" viewBox="0 0 22 22"><rect x="1.6" y="7.4" width="11" height="11.8" fill="#fff" stroke="#333" stroke-width="1.2"/><circle cx="15" cy="7" r="5.6" fill="#fff" stroke="#333" stroke-width="1.2"/><path d="M14 8L20.2 14.2L14 20.4L7.8 14.2Z" fill="#fff" stroke="#333" stroke-width="1.2" stroke-linejoin="round"/></svg>
<div style="left:272px;top:117px;width:1px;height:19px;background:#c8c8c8;"></div>
<div class="t" style="left:286.5px;top:116.00px;font-size:20px;line-height:20px;color:#333;font-family:'Liberation Sans',sans-serif;font-weight:bold;transform:scaleX(0.8658);transform-origin:0 0;">B</div>
<div class="t" style="left:321px;top:116.00px;font-size:20px;line-height:20px;color:#333;font-family:'Liberation Serif',serif;font-weight:normal;font-style:italic;">I</div>
<div class="t" style="left:351px;top:118.00px;font-size:18.5px;line-height:18.5px;color:#333;font-family:'Liberation Sans',sans-serif;font-weight:normal;transform:scaleX(0.8982);transform-origin:0 0;">U</div>
<div style="left:352px;top:134px;width:12px;height:1px;background:#1e8bd8;"></div>
<svg style="position:absolute;left:378px;top:126px;" width="7" height="4" viewBox="0 0 7 4"><path d="M0 0H7L3.5 4Z" fill="#111"/></svg>
<div style="left:390px;top:117px;width:1px;height:19px;background:#c8c8c8;"></div>
<div class="t" style="left:403.5px;top:115.00px;font-size:19.5px;line-height:19.5px;color:#333;font-family:'Liberation Sans',sans-serif;font-weight:normal;">A</div>
<div style="left:398px;top:132px;width:24px;height:6px;background:#c8201e;"></div>
<svg style="position:absolute;left:429px;top:126px;" width="7" height="4" viewBox="0 0 7 4"><path d="M0 0H7L3.5 4Z" fill="#111"/></svg>
<svg style="position:absolute;left:443px;top:115px;" width="20" height="18" viewBox="0 0 20 18"><path d="M2.5 13V6.5Q2.5 4 5 4.5" stroke="#1e5fc0" stroke-width="2.2" fill="none"/><path d="M4.5 5.5L11.5 2.5L17 11L9.5 15Z" fill="#fff" stroke="#333" stroke-width="1.1" stroke-linejoin="round"/><path d="M10.5 7.5L12 1.8Q13.8 0 14.8 2L13.5 7" fill="none" stroke="#333" stroke-width="1.1"/></svg>
<div style="left:442px;top:132px;width:24px;height:6px;background:#ffff00;"></div>
<svg style="position:absolute;left:473px;top:126px;" width="7" height="4" viewBox="0 0 7 4"><path d="M0 0H7L3.5 4Z" fill="#111"/></svg>
<div style="left:486px;top:117px;width:1px;height:19px;background:#c8c8c8;"></div>
<svg style="position:absolute;left:499px;top:115px;" width="19" height="22" viewBox="0 0 19 22"><rect x="0" y="1" width="18" height="1.3" fill="#333"/><rect x="0" y="4" width="11" height="1.3" fill="#333"/><rect x="0" y="7" width="18" height="1.3" fill="#333"/><rect x="0" y="10" width="11" height="1.3" fill="#333"/><rect x="0" y="13" width="18" height="1.3" fill="#333"/><rect x="0" y="16" width="11" height="1.3" fill="#333"/><rect x="0" y="19" width="18" height="1.3" fill="#333"/></svg>
<svg style="position:absolute;left:532px;top:115px;" width="19" height="22" viewBox="0 0 19 22"><rect x="0.0" y="1" width="18" height="1.3" fill="#333"/><rect x="3.5" y="4" width="11" height="1.3" fill="#333"/><rect x="0.0" y="7" width="18" height="1.3" fill="#333"/><rect x="3.5" y="10" width="11" height="1.3" fill="#333"/><rect x="0.0" y="13" width="18" height="1.3" fill="#333"/><rect x="3.5" y="16" width="11" height="1.3" fill="#333"/><rect x="0.0" y="19" width="18" height="1.3" fill="#333"/></svg>
<svg style="position:absolute;left:565px;top:115px;" width="19" height="22" viewBox="0 0 19 22"><rect x="0" y="1" width="18" height="1.3" fill="#333"/><rect x="7" y="4" width="11" height="1.3" fill="#333"/><rect x="0" y="7" width="18" height="1.3" fill="#333"/><rect x="7" y="10" width="11" height="1.3" fill="#333"/><rect x="0" y="13" width="18" height="1.3" fill="#333"/><rect x="7" y="16" width="11" height="1.3" fill="#333"/><rect x="0" y="19" width="18" height="1.3" fill="#333"/></svg>
<div style="left:593px;top:117px;width:1px;height:19px;background:#c8c8c8;"></div>
<svg style="position:absolute;left:606px;top:115px;" width="19" height="22" viewBox="0 0 19 22"><rect x="0" y="1" width="18" height="1.3" fill="#333"/><rect x="0" y="4" width="11" height="1.3" fill="#333"/><rect x="0" y="7" width="18" height="1.3" fill="#333"/><path d="M9 21V10M6 13L9 10L12 13" stroke="#1e8bd8" stroke-width="1.3" fill="none"/></svg>
<svg style="position:absolute;left:639px;top:115px;" width="19" height="22" viewBox="0 0 19 22"><path d="M9 0V7M6 4L9 7L12 4" stroke="#1e8bd8" stroke-width="1.3" fill="none"/><rect x="0" y="9" width="18" height="1.3" fill="#333"/><rect x="2" y="12" width="11" height="1.3" fill="#333"/><path d="M9 22V14M6 17L9 14L12 17" stroke="#1e8bd8" stroke-width="1.3" fill="none"/></svg>
<svg style="position:absolute;left:672px;top:115px;" width="19" height="22" viewBox="0 0 19 22"><path d="M9 0V9M6 6L9 9L12 6" stroke="#1e8bd8" stroke-width="1.3" fill="none"/><rect x="0" y="12" width="11" height="1.3" fill="#333"/><rect x="0" y="15" width="18" height="1.3" fill="#333"/><rect x="0" y="18" width="18" height="1.3" fill="#333"/></svg>
<div style="left:700px;top:117px;width:1px;height:19px;background:#c8c8c8;"></div>
<div style="left:705px;top:109px;width:33px;height:35px;background:#c5dcf5;border:1px solid #5a9de6;"></div>
<svg style="position:absolute;left:713px;top:115px;" width="19" height="22" viewBox="0 0 19 22"><rect x="0" y="1" width="18" height="1.3" fill="#333"/><rect x="0" y="4" width="11" height="1.3" fill="#333"/><rect x="0" y="7" width="18" height="1.3" fill="#333"/><rect x="0" y="10" width="8" height="1.3" fill="#333"/><rect x="0" y="16" width="18" height="1.3" fill="#333"/><path d="M8 8H14Q17 8 17 11V14M14.5 12L17 14.5L19.5 12" stroke="#1e8bd8" stroke-width="1.2" fill="none"/></svg>
<div style="left:741px;top:117px;width:1px;height:19px;background:#c8c8c8;"></div>
<svg style="position:absolute;left:753px;top:116px;" width="20" height="20" viewBox="0 0 20 20"><rect x="0.5" y="0.5" width="19" height="19" fill="#f0f0f0" stroke="#b8b8b8"/><path d="M0.5 5H19.5M0.5 15H19.5M7 0.5V5M13 0.5V5M7 15V19.5M13 15V19.5" stroke="#b8b8b8"/><path d="M3 10H17M3 10L5 8M3 10L5 12M17 10L15 8M17 10L15 12" stroke="#c8c8c8" fill="none"/></svg>
<svg style="position:absolute;left:786px;top:116px;" width="20" height="20" viewBox="0 0 20 20"><rect x="0.5" y="0.5" width="19" height="19" fill="#f0f0f0" stroke="#b8b8b8"/><path d="M0.5 5H19.5M0.5 15H19.5M7 0.5V5M13 0.5V5M7 15V19.5M13 15V19.5" stroke="#b8b8b8"/></svg>
<svg style="position:absolute;left:819px;top:116px;" width="20" height="20" viewBox="0 0 20 20"><rect x="0.5" y="0.5" width="19" height="19" fill="#f0f0f0" stroke="#b8b8b8"/><path d="M0.5 5H19.5M0.5 15H19.5M7 0.5V5M13 0.5V5M7 15V19.5M13 15V19.5" stroke="#b8b8b8"/><path d="M5 5V15M10 5V15M15 5V15" stroke="#b8b8b8"/></svg>
<div style="left:848px;top:117px;width:1px;height:19px;background:#c8c8c8;"></div>
<svg style="position:absolute;left:855px;top:115px;" width="27" height="24" viewBox="0 0 27 24"><path d="M2.5 16.5V5H24V8.5" fill="none" stroke="#333" stroke-width="1.3"/><circle cx="13" cy="10.5" r="2.4" fill="#333"/><ellipse cx="9" cy="18" rx="2.6" ry="3" fill="#fff" stroke="#333" stroke-width="1.1"/><path d="M6.5 18H11.5" stroke="#333"/><rect x="12.8" y="11.5" width="5" height="9.5" rx="2" fill="#fff" stroke="#333" stroke-width="1.1"/><path d="M13 14.5H17.5M13 17.5H17.5" stroke="#333" stroke-width="0.9"/><rect x="18.5" y="11.5" width="5" height="9.5" rx="2" fill="#fff" stroke="#333" stroke-width="1.1"/><path d="M18.7 14.5H23.3M18.7 17.5H23.3" stroke="#333" stroke-width="0.9"/></svg>
<svg style="position:absolute;left:888px;top:127px;" width="7" height="4" viewBox="0 0 7 4"><path d="M0 0H7L3.5 4Z" fill="#111"/></svg>
<svg style="position:absolute;left:903px;top:115px;" width="22" height="22" viewBox="0 0 22 22"><circle cx="6.8" cy="6.9" r="3" fill="none" stroke="#333" stroke-width="1.1"/><circle cx="15.7" cy="16.7" r="3" fill="none" stroke="#333" stroke-width="1.1"/><path d="M17.5 2L5 19" stroke="#333" stroke-width="1.2"/></svg>
<svg style="position:absolute;left:933px;top:115px;" width="26" height="22" viewBox="0 0 26 22"><ellipse cx="7.3" cy="11.1" rx="4.3" ry="7.6" fill="none" stroke="#333" stroke-width="1.1"/><ellipse cx="19.9" cy="11.1" rx="4.5" ry="7.6" fill="none" stroke="#333" stroke-width="1.1"/><circle cx="13.7" cy="19.3" r="1" fill="#333"/></svg>
<svg style="position:absolute;left:968px;top:114px;" width="24" height="24" viewBox="0 0 24 24"><rect x="2.6" y="4.5" width="18.8" height="17" fill="#fff" stroke="#333" stroke-width="1.2"/><rect x="8" y="4" width="10" height="2.2" fill="#333"/><rect x="5" y="2" width="1.3" height="5" fill="#333"/><rect x="18" y="2" width="1.3" height="5" fill="#333"/><path d="M8 10H15.5L11 19" fill="none" stroke="#333" stroke-width="1.2"/></svg>
<div style="left:999px;top:117px;width:1px;height:19px;background:#c8c8c8;"></div>
<svg style="position:absolute;left:1006px;top:115px;" width="26" height="26" viewBox="0 0 26 26"><circle cx="3.6" cy="19.4" r="1" fill="#333"/><ellipse cx="9.7" cy="11.1" rx="4.2" ry="7.6" fill="none" stroke="#333" stroke-width="1.1"/><ellipse cx="21" cy="11.1" rx="4.2" ry="7.6" fill="none" stroke="#333" stroke-width="1.1"/><rect x="16" y="16" width="9" height="8" fill="#f8f8f8"/><path d="M20.5 14V23M16 18.6H25" stroke="#1e8bd8" stroke-width="1.3"/></svg>
<svg style="position:absolute;left:1039px;top:115px;" width="26" height="26" viewBox="0 0 26 26"><circle cx="3.5" cy="19.4" r="1" fill="#333"/><ellipse cx="9.6" cy="11.1" rx="4.2" ry="7.6" fill="none" stroke="#333" stroke-width="1.1"/><ellipse cx="20.8" cy="11.1" rx="4.2" ry="7.6" fill="none" stroke="#333" stroke-width="1.1"/><rect x="15" y="11" width="11" height="14" fill="#f8f8f8"/><path d="M16.5 14L25 22.5M25 14L16.5 22.5" stroke="#f04040" stroke-width="1.1"/></svg>
<div style="left:1074px;top:117px;width:1px;height:19px;background:#c8c8c8;"></div>
<svg style="position:absolute;left:1084px;top:114px;" width="23" height="23" viewBox="0 0 23 23"><path d="M3 1.5H22M11.5 6.5H22M11.5 11.5H22M11.5 16.5H22M3 21.5H22" stroke="#333" stroke-width="1.1"/><path d="M0 11.5H8.5M5.5 8.2L8.8 11.5L5.5 14.8" stroke="#1e8bd8" stroke-width="1.1" fill="none"/></svg>
<svg style="position:absolute;left:1117px;top:114px;" width="23" height="23" viewBox="0 0 23 23"><path d="M3 1.5H22M11.5 6.5H22M11.5 11.5H22M11.5 16.5H22M3 21.5H22" stroke="#333" stroke-width="1.1"/><path d="M0.5 11.5H9M3.8 8.2L0.5 11.5L3.8 14.8" stroke="#1e8bd8" stroke-width="1.1" fill="none"/></svg>
<div style="left:1148px;top:117px;width:1px;height:19px;background:#c8c8c8;"></div>
<svg style="position:absolute;left:1156px;top:116px;" width="21" height="21" viewBox="0 0 21 21"><rect x="1.6" y="1.6" width="17.8" height="17.8" fill="#fff" stroke="#333" stroke-width="1.2"/><path d="M10.5 1.6V19.4M1.6 10.5H19.4" stroke="#333" stroke-width="1"/><rect x="1" y="18.8" width="19" height="1.4" fill="#f39c32"/></svg>
<svg style="position:absolute;left:1187px;top:126px;" width="7" height="4" viewBox="0 0 7 4"><path d="M0 0H7L3.5 4Z" fill="#111"/></svg>
<svg style="position:absolute;left:1202px;top:115px;" width="19" height="23" viewBox="0 0 19 23"><rect x="0" y="1.2" width="18" height="2.6" rx="1" fill="#333"/><rect x="0" y="6.4" width="18" height="1.8" fill="#333"/><path d="M0 11.2H4.5M6.5 11.2H11.5M13.5 11.2H18" stroke="#333" stroke-width="1.1"/><path d="M0 15.2H2M4 15.2H6M8 15.2H10M12 15.2H14M16 15.2H18" stroke="#333" stroke-width="1.1"/><rect x="0" y="18.6" width="18" height="2" rx="0.8" fill="#333"/></svg>
<svg style="position:absolute;left:1231px;top:126px;" width="7" height="4" viewBox="0 0 7 4"><path d="M0 0H7L3.5 4Z" fill="#111"/></svg>
<svg style="position:absolute;left:1243px;top:115px;" width="25" height="24" viewBox="0 0 25 24"><rect x="2.6" y="1" width="18.8" height="15" fill="#fff" stroke="#1e8bd8" stroke-width="1.2"/><rect x="4.6" y="3" width="14.8" height="11" fill="#fff" stroke="#333" stroke-width="1.2"/><rect x="0.5" y="16.5" width="23.5" height="6" fill="#2a5c9a"/></svg>
<svg style="position:absolute;left:1275px;top:126px;" width="7" height="4" viewBox="0 0 7 4"><path d="M0 0H7L3.5 4Z" fill="#111"/></svg>
<div style="left:1288px;top:117px;width:1px;height:19px;background:#c8c8c8;"></div>
<svg style="position:absolute;left:1297px;top:115px;" width="23" height="23" viewBox="0 0 23 23"><rect x="0.6" y="1.6" width="18.8" height="16.8" fill="#fff" stroke="#333" stroke-width="1.1"/><rect x="5" y="2" width="10" height="3.5" fill="#9fd89a" stroke="#2a9a3a" stroke-width="0.8"/><rect x="5" y="6" width="10" height="3.5" fill="#f6a0a8" stroke="#e02030" stroke-width="0.8"/><rect x="5" y="10" width="5" height="3.5" fill="#9fd89a" stroke="#2a9a3a" stroke-width="0.8"/><rect x="5" y="14" width="5" height="4" fill="#f6a0a8" stroke="#e02030" stroke-width="0.8"/><path d="M0.6 5.6H19.4M0.6 9.6H19.4M0.6 13.6H9M4.6 1.6V18.4M15.6 1.6V5" stroke="#333" stroke-width="0.9"/><rect x="9.6" y="10.6" width="11.8" height="11.8" rx="0.8" fill="#fff" stroke="#333" stroke-width="1.2"/><path d="M12.5 15H18.5M12.5 18H18.5M17.5 13L13.5 20" stroke="#333" stroke-width="1"/></svg>
<svg style="position:absolute;left:1327px;top:126px;" width="7" height="4" viewBox="0 0 7 4"><path d="M0 0H7L3.5 4Z" fill="#111"/></svg>
<div style="left:18px;top:114px;width:184px;height:24px;background:#fff;border:1px solid #a9a9a9;"></div>
<div style="left:184px;top:115px;width:17px;height:22px;background:linear-gradient(#f2f2f2,#e2e2e2);border-left:1px solid #c4c4c4;"></div>
<svg style="position:absolute;left:189px;top:123px;" width="9" height="6" viewBox="0 0 9 6"><path d="M0.5 0.5L4.5 4.5L8.5 0.5" stroke="#333" stroke-width="1.4" fill="none"/></svg>
<div class="t" style="left:22px;top:121.00px;font-size:12px;line-height:12px;color:#000;font-family:'Liberation Sans',sans-serif;font-weight:normal;transform:scaleX(0.9789);transform-origin:0 0;">Liberation Serif</div>
<div style="left:210px;top:114px;width:59px;height:24px;background:#fff;border:1px solid #a9a9a9;"></div>
<div style="left:251px;top:115px;width:17px;height:22px;background:linear-gradient(#f2f2f2,#e2e2e2);border-left:1px solid #c4c4c4;"></div>
<svg style="position:absolute;left:256px;top:123px;" width="9" height="6" viewBox="0 0 9 6"><path d="M0.5 0.5L4.5 4.5L8.5 0.5" stroke="#333" stroke-width="1.4" fill="none"/></svg>
<div class="t" style="left:214px;top:121.00px;font-size:12px;line-height:12px;color:#000;font-family:'Liberation Sans',sans-serif;font-weight:normal;transform:scaleX(0.9373);transform-origin:0 0;">10 pt</div>
<div style="left:13px;top:145px;width:1658px;height:1px;background:#cfcfcf;"></div>
<div style="left:13px;top:146px;width:1612px;height:32px;background:#f0f0f0;"></div>
<div style="left:18px;top:149px;width:144px;height:24px;background:#fff;border:1px solid #a9a9a9;"></div>
<div style="left:144px;top:150px;width:17px;height:22px;background:linear-gradient(#f2f2f2,#e2e2e2);border-left:1px solid #c4c4c4;"></div>
<svg style="position:absolute;left:149px;top:158px;" width="9" height="6" viewBox="0 0 9 6"><path d="M0.5 0.5L4.5 4.5L8.5 0.5" stroke="#333" stroke-width="1.4" fill="none"/></svg>
<div class="t" style="left:22px;top:156.00px;font-size:12px;line-height:12px;color:#000;font-family:'Liberation Sans',sans-serif;font-weight:normal;transform:scaleX(0.8860);transform-origin:0 0;">A1</div>
<div style="left:165px;top:154px;width:1px;height:14px;background:#c6c6c6;"></div>
<div class="t" style="left:176px;top:154.00px;font-size:17px;line-height:17px;color:#1e8bd8;font-family:'Liberation Serif',serif;font-weight:normal;font-style:italic;">fx</div>
<div class="t" style="left:200px;top:155.00px;font-size:17px;line-height:17px;color:#333;font-family:'Liberation Sans',sans-serif;font-weight:normal;">∑</div>
<svg style="position:absolute;left:222px;top:160px;" width="7" height="4" viewBox="0 0 7 4"><path d="M0 0H7L3.5 4Z" fill="#111"/></svg>
<div style="left:238px;top:157px;width:12px;height:2px;background:#333;"></div>
<div style="left:238px;top:163px;width:12px;height:2px;background:#333;"></div>
<div style="left:256px;top:150px;width:1336px;height:23px;background:#fff;border:1px solid #a9a9a9;"></div>
<div class="t" style="left:263px;top:156.00px;font-size:12px;line-height:12px;color:#000;font-family:'Liberation Sans',sans-serif;font-weight:normal;transform:scaleX(0.8893);transform-origin:0 0;">TABLE</div>
<svg style="position:absolute;left:1599px;top:157px;" width="14" height="7" viewBox="0 0 14 7"><path d="M0 0H14L7 7Z" fill="#111"/></svg>
<div style="left:13px;top:178px;width:1594px;height:761px;background:#fff;"></div>
<div style="left:13px;top:178px;width:1594px;height:18px;background:#efefef;"></div>
<div style="left:13px;top:196px;width:33px;height:743px;background:#efefef;"></div>
<div style="left:46px;top:178px;width:160px;height:18px;background:#3a96f6;"></div>
<div class="t" style="left:123.5px;top:182.00px;font-size:12px;line-height:12px;color:#fff;font-family:'Liberation Sans',sans-serif;font-weight:normal;text-shadow:0.3px 0 0 #fff;">A</div>
<div style="left:206px;top:178px;width:1px;height:18px;background:#6a6a6a;"></div>
<div class="t" style="left:271.0px;top:182.00px;font-size:12px;line-height:12px;color:#222;font-family:'Liberation Sans',sans-serif;font-weight:normal;">B</div>
<div style="left:341px;top:178px;width:1px;height:18px;background:#6a6a6a;"></div>
<div class="t" style="left:469.1640625px;top:182.00px;font-size:12px;line-height:12px;color:#222;font-family:'Liberation Sans',sans-serif;font-weight:normal;">C</div>
<div style="left:603px;top:178px;width:1px;height:18px;background:#6a6a6a;"></div>
<div class="t" style="left:641.1640625px;top:182.00px;font-size:12px;line-height:12px;color:#222;font-family:'Liberation Sans',sans-serif;font-weight:normal;">D</div>
<div style="left:685px;top:178px;width:1px;height:18px;background:#6a6a6a;"></div>
<div class="t" style="left:723.5px;top:182.00px;font-size:12px;line-height:12px;color:#222;font-family:'Liberation Sans',sans-serif;font-weight:normal;">E</div>
<div style="left:767px;top:178px;width:1px;height:18px;background:#6a6a6a;"></div>
<div class="t" style="left:805.8359375px;top:182.00px;font-size:12px;line-height:12px;color:#222;font-family:'Liberation Sans',sans-serif;font-weight:normal;">F</div>
<div style="left:849px;top:178px;width:1px;height:18px;background:#6a6a6a;"></div>
<div class="t" style="left:886.8359375px;top:182.00px;font-size:12px;line-height:12px;color:#222;font-family:'Liberation Sans',sans-serif;font-weight:normal;">G</div>
<div style="left:931px;top:178px;width:1px;height:18px;background:#6a6a6a;"></div>
<div class="t" style="left:969.1640625px;top:182.00px;font-size:12px;line-height:12px;color:#222;font-family:'Liberation Sans',sans-serif;font-weight:normal;">H</div>
<div style="left:1013px;top:178px;width:1px;height:18px;background:#6a6a6a;"></div>
<div class="t" style="left:1053.8359375px;top:182.00px;font-size:12px;line-height:12px;color:#222;font-family:'Liberation Sans',sans-serif;font-weight:normal;">I</div>
<div style="left:1095px;top:178px;width:1px;height:18px;background:#6a6a6a;"></div>
<div class="t" style="left:1134.5px;top:182.00px;font-size:12px;line-height:12px;color:#222;font-family:'Liberation Sans',sans-serif;font-weight:normal;">J</div>
<div style="left:1177px;top:178px;width:1px;height:18px;background:#6a6a6a;"></div>
<div class="t" style="left:1215.5px;top:182.00px;font-size:12px;line-height:12px;color:#222;font-family:'Liberation Sans',sans-serif;font-weight:normal;">K</div>
<div style="left:1259px;top:178px;width:1px;height:18px;background:#6a6a6a;"></div>
<div class="t" style="left:1298.1640625px;top:182.00px;font-size:12px;line-height:12px;color:#222;font-family:'Liberation Sans',sans-serif;font-weight:normal;">L</div>
<div style="left:1341px;top:178px;width:1px;height:18px;background:#6a6a6a;"></div>
<div class="t" style="left:1378.5px;top:182.00px;font-size:12px;line-height:12px;color:#222;font-family:'Liberation Sans',sans-serif;font-weight:normal;">M</div>
<div style="left:1423px;top:178px;width:1px;height:18px;background:#6a6a6a;"></div>
<div class="t" style="left:1461.1640625px;top:182.00px;font-size:12px;line-height:12px;color:#222;font-family:'Liberation Sans',sans-serif;font-weight:normal;">N</div>
<div style="left:1505px;top:178px;width:1px;height:18px;background:#6a6a6a;"></div>
<div class="t" style="left:1542.8359375px;top:182.00px;font-size:12px;line-height:12px;color:#222;font-family:'Liberation Sans',sans-serif;font-weight:normal;">O</div>
<div style="left:1587px;top:178px;width:1px;height:18px;background:#6a6a6a;"></div>
<div style="left:13px;top:196px;width:1594px;height:1px;background:#6a6a6a;"></div>
<div style="left:46px;top:178px;width:1px;height:761px;background:#6a6a6a;"></div>
<div style="left:206px;top:197px;width:1px;height:742px;background:#c6c6c6;"></div>
<div style="left:341px;top:197px;width:1px;height:742px;background:#c6c6c6;"></div>
<div style="left:603px;top:197px;width:1px;height:742px;background:#c6c6c6;"></div>
<div style="left:685px;top:197px;width:1px;height:742px;background:#c6c6c6;"></div>
<div style="left:767px;top:197px;width:1px;height:742px;background:#c6c6c6;"></div>
<div style="left:849px;top:197px;width:1px;height:742px;background:#c6c6c6;"></div>
<div style="left:931px;top:197px;width:1px;height:742px;background:#c6c6c6;"></div>
<div style="left:1013px;top:197px;width:1px;height:742px;background:#c6c6c6;"></div>
<div style="left:1095px;top:197px;width:1px;height:742px;background:#c6c6c6;"></div>
<div style="left:1177px;top:197px;width:1px;height:742px;background:#c6c6c6;"></div>
<div style="left:1259px;top:197px;width:1px;height:742px;background:#c6c6c6;"></div>
<div style="left:1341px;top:197px;width:1px;height:742px;background:#c6c6c6;"></div>
<div style="left:1423px;top:197px;width:1px;height:742px;background:#c6c6c6;"></div>
<div style="left:1505px;top:197px;width:1px;height:742px;background:#c6c6c6;"></div>
<div style="left:1587px;top:197px;width:1px;height:742px;background:#c6c6c6;"></div>
<div style="left:47px;top:213px;width:1560px;height:1px;background:#c6c6c6;"></div>
<div style="left:13px;top:197px;width:33px;height:17px;background:#3a96f6;"></div>
<div class="t" style="left:26.1640625px;top:200.00px;font-size:12px;line-height:12px;color:#fff;font-family:'Liberation Sans',sans-serif;font-weight:normal;">1</div>
<div class="t" style="left:48px;top:199.00px;font-size:13.33px;line-height:13.33px;color:#000;font-family:'Liberation Serif',serif;font-weight:normal;">TABLE</div>
<div class="t" style="left:208px;top:199.00px;font-size:13.33px;line-height:13.33px;color:#000;font-family:'Liberation Serif',serif;font-weight:normal;">AQBranford</div>
<svg style="position:absolute;left:208px;top:210px;overflow:hidden;" width="68" height="5" viewBox="0 0 68 5"><path d="M0 3.5 L4 0.5 L8 3.5 L12 0.5 L16 3.5 L20 0.5 L24 3.5 L28 0.5 L32 3.5 L36 0.5 L40 3.5 L44 0.5 L48 3.5 L52 0.5 L56 3.5 L60 0.5 L64 3.5 L68 0.5 L72 3.5" stroke="#f04040" stroke-width="1.1" fill="none"/></svg>
<div class="t" style="left:343px;top:199.00px;font-size:13.33px;line-height:13.33px;color:#000;font-family:'Liberation Serif',serif;font-weight:normal;">TABLE</div>
<div class="t" style="left:769px;top:199.00px;font-size:13.33px;line-height:13.33px;color:#000;font-family:'Liberation Serif',serif;font-weight:normal;transform:scaleX(0.9412);transform-origin:0 0;">ADMIN</div>
<div class="t" style="left:851px;top:199.00px;font-size:13.33px;line-height:13.33px;color:#000;font-family:'Liberation Serif',serif;font-weight:normal;transform:scaleX(0.9512);transform-origin:0 0;">SAMPLE</div>
<div style="left:47px;top:230px;width:1560px;height:1px;background:#c6c6c6;"></div>
<div style="left:13px;top:230px;width:33px;height:1px;background:#6a6a6a;"></div>
<div class="t" style="left:26.1640625px;top:217.00px;font-size:12px;line-height:12px;color:#222;font-family:'Liberation Sans',sans-serif;font-weight:normal;">2</div>
<div class="t" style="left:48px;top:216.00px;font-size:13.33px;line-height:13.33px;color:#000;font-family:'Liberation Serif',serif;font-weight:normal;">TABLE</div>
<div class="t" style="left:208px;top:216.00px;font-size:13.33px;line-height:13.33px;color:#000;font-family:'Liberation Serif',serif;font-weight:normal;">AQBridgeport</div>
<svg style="position:absolute;left:208px;top:227px;overflow:hidden;" width="78" height="5" viewBox="0 0 78 5"><path d="M0 3.5 L4 0.5 L8 3.5 L12 0.5 L16 3.5 L20 0.5 L24 3.5 L28 0.5 L32 3.5 L36 0.5 L40 3.5 L44 0.5 L48 3.5 L52 0.5 L56 3.5 L60 0.5 L64 3.5 L68 0.5 L72 3.5 L76 0.5 L80 3.5" stroke="#f04040" stroke-width="1.1" fill="none"/></svg>
<div class="t" style="left:343px;top:216.00px;font-size:13.33px;line-height:13.33px;color:#000;font-family:'Liberation Serif',serif;font-weight:normal;">TABLE</div>
<div class="t" style="left:769px;top:216.00px;font-size:13.33px;line-height:13.33px;color:#000;font-family:'Liberation Serif',serif;font-weight:normal;transform:scaleX(0.9412);transform-origin:0 0;">ADMIN</div>
<div class="t" style="left:851px;top:216.00px;font-size:13.33px;line-height:13.33px;color:#000;font-family:'Liberation Serif',serif;font-weight:normal;transform:scaleX(0.9512);transform-origin:0 0;">SAMPLE</div>
<div style="left:47px;top:247px;width:1560px;height:1px;background:#c6c6c6;"></div>
<div style="left:13px;top:247px;width:33px;height:1px;background:#6a6a6a;"></div>
<div class="t" style="left:26.1640625px;top:234.00px;font-size:12px;line-height:12px;color:#222;font-family:'Liberation Sans',sans-serif;font-weight:normal;">3</div>
<div class="t" style="left:48px;top:233.00px;font-size:13.33px;line-height:13.33px;color:#000;font-family:'Liberation Serif',serif;font-weight:normal;">TABLE</div>
<div class="t" style="left:208px;top:233.00px;font-size:13.33px;line-height:13.33px;color:#000;font-family:'Liberation Serif',serif;font-weight:normal;">AQCoventry</div>
<svg style="position:absolute;left:208px;top:244px;overflow:hidden;" width="69" height="5" viewBox="0 0 69 5"><path d="M0 3.5 L4 0.5 L8 3.5 L12 0.5 L16 3.5 L20 0.5 L24 3.5 L28 0.5 L32 3.5 L36 0.5 L40 3.5 L44 0.5 L48 3.5 L52 0.5 L56 3.5 L60 0.5 L64 3.5 L68 0.5 L72 3.5" stroke="#f04040" stroke-width="1.1" fill="none"/></svg>
<div class="t" style="left:343px;top:233.00px;font-size:13.33px;line-height:13.33px;color:#000;font-family:'Liberation Serif',serif;font-weight:normal;">TABLE</div>
<div class="t" style="left:769px;top:233.00px;font-size:13.33px;line-height:13.33px;color:#000;font-family:'Liberation Serif',serif;font-weight:normal;transform:scaleX(0.9412);transform-origin:0 0;">ADMIN</div>
<div class="t" style="left:851px;top:233.00px;font-size:13.33px;line-height:13.33px;color:#000;font-family:'Liberation Serif',serif;font-weight:normal;transform:scaleX(0.9512);transform-origin:0 0;">SAMPLE</div>
<div style="left:47px;top:264px;width:1560px;height:1px;background:#c6c6c6;"></div>
<div style="left:13px;top:264px;width:33px;height:1px;background:#6a6a6a;"></div>
<div class="t" style="left:26.1640625px;top:251.00px;font-size:12px;line-height:12px;color:#222;font-family:'Liberation Sans',sans-serif;font-weight:normal;">4</div>
<div class="t" style="left:48px;top:250.00px;font-size:13.33px;line-height:13.33px;color:#000;font-family:'Liberation Serif',serif;font-weight:normal;">TABLE</div>
<div class="t" style="left:208px;top:250.00px;font-size:13.33px;line-height:13.33px;color:#000;font-family:'Liberation Serif',serif;font-weight:normal;">AQDeepRiver</div>
<svg style="position:absolute;left:208px;top:261px;overflow:hidden;" width="78" height="5" viewBox="0 0 78 5"><path d="M0 3.5 L4 0.5 L8 3.5 L12 0.5 L16 3.5 L20 0.5 L24 3.5 L28 0.5 L32 3.5 L36 0.5 L40 3.5 L44 0.5 L48 3.5 L52 0.5 L56 3.5 L60 0.5 L64 3.5 L68 0.5 L72 3.5 L76 0.5 L80 3.5" stroke="#f04040" stroke-width="1.1" fill="none"/></svg>
<div class="t" style="left:343px;top:250.00px;font-size:13.33px;line-height:13.33px;color:#000;font-family:'Liberation Serif',serif;font-weight:normal;">TABLE</div>
<div class="t" style="left:769px;top:250.00px;font-size:13.33px;line-height:13.33px;color:#000;font-family:'Liberation Serif',serif;font-weight:normal;transform:scaleX(0.9412);transform-origin:0 0;">ADMIN</div>
<div class="t" style="left:851px;top:250.00px;font-size:13.33px;line-height:13.33px;color:#000;font-family:'Liberation Serif',serif;font-weight:normal;transform:scaleX(0.9512);transform-origin:0 0;">SAMPLE</div>
<div style="left:47px;top:295px;width:1560px;height:1px;background:#c6c6c6;"></div>
<div style="left:13px;top:295px;width:33px;height:1px;background:#6a6a6a;"></div>
<div class="t" style="left:26.1640625px;top:275.00px;font-size:12px;line-height:12px;color:#222;font-family:'Liberation Sans',sans-serif;font-weight:normal;">5</div>
<div class="t" style="left:48px;top:281.00px;font-size:13.33px;line-height:13.33px;color:#000;font-family:'Liberation Serif',serif;font-weight:normal;">TABLE</div>
<div class="t" style="left:208px;top:281.00px;font-size:13.33px;line-height:13.33px;color:#000;font-family:'Liberation Serif',serif;font-weight:normal;">AQEastHaddam</div>
<svg style="position:absolute;left:208px;top:292px;overflow:hidden;" width="88" height="5" viewBox="0 0 88 5"><path d="M0 3.5 L4 0.5 L8 3.5 L12 0.5 L16 3.5 L20 0.5 L24 3.5 L28 0.5 L32 3.5 L36 0.5 L40 3.5 L44 0.5 L48 3.5 L52 0.5 L56 3.5 L60 0.5 L64 3.5 L68 0.5 L72 3.5 L76 0.5 L80 3.5 L84 0.5 L88 3.5" stroke="#f04040" stroke-width="1.1" fill="none"/></svg>
<div class="t" style="left:343px;top:281.00px;font-size:13.33px;line-height:13.33px;color:#000;font-family:'Liberation Serif',serif;font-weight:normal;">TABLE</div>
<div class="t" style="left:769px;top:281.00px;font-size:13.33px;line-height:13.33px;color:#000;font-family:'Liberation Serif',serif;font-weight:normal;transform:scaleX(0.9412);transform-origin:0 0;">ADMIN</div>
<div class="t" style="left:851px;top:281.00px;font-size:13.33px;line-height:13.33px;color:#000;font-family:'Liberation Serif',serif;font-weight:normal;transform:scaleX(0.9512);transform-origin:0 0;">SAMPLE</div>
<div style="left:47px;top:312px;width:1560px;height:1px;background:#c6c6c6;"></div>
<div style="left:13px;top:312px;width:33px;height:1px;background:#6a6a6a;"></div>
<div class="t" style="left:26.1640625px;top:299.00px;font-size:12px;line-height:12px;color:#222;font-family:'Liberation Sans',sans-serif;font-weight:normal;">6</div>
<div class="t" style="left:48px;top:298.00px;font-size:13.33px;line-height:13.33px;color:#000;font-family:'Liberation Serif',serif;font-weight:normal;">TABLE</div>
<div class="t" style="left:208px;top:298.00px;font-size:13.33px;line-height:13.33px;color:#000;font-family:'Liberation Serif',serif;font-weight:normal;">AQEastHaven</div>
<svg style="position:absolute;left:208px;top:309px;overflow:hidden;" width="78" height="5" viewBox="0 0 78 5"><path d="M0 3.5 L4 0.5 L8 3.5 L12 0.5 L16 3.5 L20 0.5 L24 3.5 L28 0.5 L32 3.5 L36 0.5 L40 3.5 L44 0.5 L48 3.5 L52 0.5 L56 3.5 L60 0.5 L64 3.5 L68 0.5 L72 3.5 L76 0.5 L80 3.5" stroke="#f04040" stroke-width="1.1" fill="none"/></svg>
<div class="t" style="left:343px;top:298.00px;font-size:13.33px;line-height:13.33px;color:#000;font-family:'Liberation Serif',serif;font-weight:normal;">TABLE</div>
<div class="t" style="left:769px;top:298.00px;font-size:13.33px;line-height:13.33px;color:#000;font-family:'Liberation Serif',serif;font-weight:normal;transform:scaleX(0.9412);transform-origin:0 0;">ADMIN</div>
<div class="t" style="left:851px;top:298.00px;font-size:13.33px;line-height:13.33px;color:#000;font-family:'Liberation Serif',serif;font-weight:normal;transform:scaleX(0.9512);transform-origin:0 0;">SAMPLE</div>
<div style="left:47px;top:329px;width:1560px;height:1px;background:#c6c6c6;"></div>
<div style="left:13px;top:329px;width:33px;height:1px;background:#6a6a6a;"></div>
<div class="t" style="left:26.1640625px;top:316.00px;font-size:12px;line-height:12px;color:#222;font-family:'Liberation Sans',sans-serif;font-weight:normal;">7</div>
<div class="t" style="left:48px;top:315.00px;font-size:13.33px;line-height:13.33px;color:#000;font-family:'Liberation Serif',serif;font-weight:normal;">TABLE</div>
<div class="t" style="left:208px;top:315.00px;font-size:13.33px;line-height:13.33px;color:#000;font-family:'Liberation Serif',serif;font-weight:normal;">AQEastford</div>
<svg style="position:absolute;left:208px;top:326px;overflow:hidden;" width="65" height="5" viewBox="0 0 65 5"><path d="M0 3.5 L4 0.5 L8 3.5 L12 0.5 L16 3.5 L20 0.5 L24 3.5 L28 0.5 L32 3.5 L36 0.5 L40 3.5 L44 0.5 L48 3.5 L52 0.5 L56 3.5 L60 0.5 L64 3.5 L68 0.5 L72 3.5" stroke="#f04040" stroke-width="1.1" fill="none"/></svg>
<div class="t" style="left:343px;top:315.00px;font-size:13.33px;line-height:13.33px;color:#000;font-family:'Liberation Serif',serif;font-weight:normal;">TABLE</div>
<div class="t" style="left:769px;top:315.00px;font-size:13.33px;line-height:13.33px;color:#000;font-family:'Liberation Serif',serif;font-weight:normal;transform:scaleX(0.9412);transform-origin:0 0;">ADMIN</div>
<div class="t" style="left:851px;top:315.00px;font-size:13.33px;line-height:13.33px;color:#000;font-family:'Liberation Serif',serif;font-weight:normal;transform:scaleX(0.9512);transform-origin:0 0;">SAMPLE</div>
<div style="left:47px;top:346px;width:1560px;height:1px;background:#c6c6c6;"></div>
<div style="left:13px;top:346px;width:33px;height:1px;background:#6a6a6a;"></div>
<div class="t" style="left:26.1640625px;top:333.00px;font-size:12px;line-height:12px;color:#222;font-family:'Liberation Sans',sans-serif;font-weight:normal;">8</div>
<div class="t" style="left:48px;top:332.00px;font-size:13.33px;line-height:13.33px;color:#000;font-family:'Liberation Serif',serif;font-weight:normal;">TABLE</div>
<div class="t" style="left:208px;top:332.00px;font-size:13.33px;line-height:13.33px;color:#000;font-family:'Liberation Serif',serif;font-weight:normal;">AQHampton</div>
<svg style="position:absolute;left:208px;top:343px;overflow:hidden;" width="69" height="5" viewBox="0 0 69 5"><path d="M0 3.5 L4 0.5 L8 3.5 L12 0.5 L16 3.5 L20 0.5 L24 3.5 L28 0.5 L32 3.5 L36 0.5 L40 3.5 L44 0.5 L48 3.5 L52 0.5 L56 3.5 L60 0.5 L64 3.5 L68 0.5 L72 3.5" stroke="#f04040" stroke-width="1.1" fill="none"/></svg>
<div class="t" style="left:343px;top:332.00px;font-size:13.33px;line-height:13.33px;color:#000;font-family:'Liberation Serif',serif;font-weight:normal;">TABLE</div>
<div class="t" style="left:769px;top:332.00px;font-size:13.33px;line-height:13.33px;color:#000;font-family:'Liberation Serif',serif;font-weight:normal;transform:scaleX(0.9412);transform-origin:0 0;">ADMIN</div>
<div class="t" style="left:851px;top:332.00px;font-size:13.33px;line-height:13.33px;color:#000;font-family:'Liberation Serif',serif;font-weight:normal;transform:scaleX(0.9512);transform-origin:0 0;">SAMPLE</div>
<div style="left:47px;top:363px;width:1560px;height:1px;background:#c6c6c6;"></div>
<div style="left:13px;top:363px;width:33px;height:1px;background:#6a6a6a;"></div>
<div class="t" style="left:26.1640625px;top:350.00px;font-size:12px;line-height:12px;color:#222;font-family:'Liberation Sans',sans-serif;font-weight:normal;">9</div>
<div class="t" style="left:48px;top:349.00px;font-size:13.33px;line-height:13.33px;color:#000;font-family:'Liberation Serif',serif;font-weight:normal;">TABLE</div>
<div class="t" style="left:208px;top:349.00px;font-size:13.33px;line-height:13.33px;color:#000;font-family:'Liberation Serif',serif;font-weight:normal;">AQMeriden</div>
<svg style="position:absolute;left:208px;top:360px;overflow:hidden;" width="65" height="5" viewBox="0 0 65 5"><path d="M0 3.5 L4 0.5 L8 3.5 L12 0.5 L16 3.5 L20 0.5 L24 3.5 L28 0.5 L32 3.5 L36 0.5 L40 3.5 L44 0.5 L48 3.5 L52 0.5 L56 3.5 L60 0.5 L64 3.5 L68 0.5 L72 3.5" stroke="#f04040" stroke-width="1.1" fill="none"/></svg>
<div class="t" style="left:343px;top:349.00px;font-size:13.33px;line-height:13.33px;color:#000;font-family:'Liberation Serif',serif;font-weight:normal;">TABLE</div>
<div class="t" style="left:769px;top:349.00px;font-size:13.33px;line-height:13.33px;color:#000;font-family:'Liberation Serif',serif;font-weight:normal;transform:scaleX(0.9412);transform-origin:0 0;">ADMIN</div>
<div class="t" style="left:851px;top:349.00px;font-size:13.33px;line-height:13.33px;color:#000;font-family:'Liberation Serif',serif;font-weight:normal;transform:scaleX(0.9512);transform-origin:0 0;">SAMPLE</div>
<div style="left:47px;top:394px;width:1560px;height:1px;background:#c6c6c6;"></div>
<div style="left:13px;top:394px;width:33px;height:1px;background:#6a6a6a;"></div>
<div class="t" style="left:22.828125px;top:374.00px;font-size:12px;line-height:12px;color:#222;font-family:'Liberation Sans',sans-serif;font-weight:normal;">10</div>
<div class="t" style="left:48px;top:380.00px;font-size:13.33px;line-height:13.33px;color:#000;font-family:'Liberation Serif',serif;font-weight:normal;">TABLE</div>
<div class="t" style="left:208px;top:380.00px;font-size:13.33px;line-height:13.33px;color:#000;font-family:'Liberation Serif',serif;font-weight:normal;">AQMiddletown</div>
<svg style="position:absolute;left:208px;top:391px;overflow:hidden;" width="85" height="5" viewBox="0 0 85 5"><path d="M0 3.5 L4 0.5 L8 3.5 L12 0.5 L16 3.5 L20 0.5 L24 3.5 L28 0.5 L32 3.5 L36 0.5 L40 3.5 L44 0.5 L48 3.5 L52 0.5 L56 3.5 L60 0.5 L64 3.5 L68 0.5 L72 3.5 L76 0.5 L80 3.5 L84 0.5 L88 3.5" stroke="#f04040" stroke-width="1.1" fill="none"/></svg>
<div class="t" style="left:343px;top:380.00px;font-size:13.33px;line-height:13.33px;color:#000;font-family:'Liberation Serif',serif;font-weight:normal;">TABLE</div>
<div class="t" style="left:769px;top:380.00px;font-size:13.33px;line-height:13.33px;color:#000;font-family:'Liberation Serif',serif;font-weight:normal;transform:scaleX(0.9412);transform-origin:0 0;">ADMIN</div>
<div class="t" style="left:851px;top:380.00px;font-size:13.33px;line-height:13.33px;color:#000;font-family:'Liberation Serif',serif;font-weight:normal;transform:scaleX(0.9512);transform-origin:0 0;">SAMPLE</div>
<div style="left:47px;top:411px;width:1560px;height:1px;background:#c6c6c6;"></div>
<div style="left:13px;top:411px;width:33px;height:1px;background:#6a6a6a;"></div>
<div class="t" style="left:23.2734375px;top:398.00px;font-size:12px;line-height:12px;color:#222;font-family:'Liberation Sans',sans-serif;font-weight:normal;">11</div>
<div class="t" style="left:48px;top:397.00px;font-size:13.33px;line-height:13.33px;color:#000;font-family:'Liberation Serif',serif;font-weight:normal;">TABLE</div>
<div class="t" style="left:208px;top:397.00px;font-size:13.33px;line-height:13.33px;color:#000;font-family:'Liberation Serif',serif;font-weight:normal;">AQMonroe</div>
<svg style="position:absolute;left:208px;top:408px;overflow:hidden;" width="62" height="5" viewBox="0 0 62 5"><path d="M0 3.5 L4 0.5 L8 3.5 L12 0.5 L16 3.5 L20 0.5 L24 3.5 L28 0.5 L32 3.5 L36 0.5 L40 3.5 L44 0.5 L48 3.5 L52 0.5 L56 3.5 L60 0.5 L64 3.5" stroke="#f04040" stroke-width="1.1" fill="none"/></svg>
<div class="t" style="left:343px;top:397.00px;font-size:13.33px;line-height:13.33px;color:#000;font-family:'Liberation Serif',serif;font-weight:normal;">TABLE</div>
<div class="t" style="left:769px;top:397.00px;font-size:13.33px;line-height:13.33px;color:#000;font-family:'Liberation Serif',serif;font-weight:normal;transform:scaleX(0.9412);transform-origin:0 0;">ADMIN</div>
<div class="t" style="left:851px;top:397.00px;font-size:13.33px;line-height:13.33px;color:#000;font-family:'Liberation Serif',serif;font-weight:normal;transform:scaleX(0.9512);transform-origin:0 0;">SAMPLE</div>
<div style="left:47px;top:428px;width:1560px;height:1px;background:#c6c6c6;"></div>
<div style="left:13px;top:428px;width:33px;height:1px;background:#6a6a6a;"></div>
<div class="t" style="left:22.828125px;top:415.00px;font-size:12px;line-height:12px;color:#222;font-family:'Liberation Sans',sans-serif;font-weight:normal;">12</div>
<div class="t" style="left:48px;top:414.00px;font-size:13.33px;line-height:13.33px;color:#000;font-family:'Liberation Serif',serif;font-weight:normal;">TABLE</div>
<div class="t" style="left:208px;top:414.00px;font-size:13.33px;line-height:13.33px;color:#000;font-family:'Liberation Serif',serif;font-weight:normal;">AQMontville</div>
<svg style="position:absolute;left:208px;top:425px;overflow:hidden;" width="72" height="5" viewBox="0 0 72 5"><path d="M0 3.5 L4 0.5 L8 3.5 L12 0.5 L16 3.5 L20 0.5 L24 3.5 L28 0.5 L32 3.5 L36 0.5 L40 3.5 L44 0.5 L48 3.5 L52 0.5 L56 3.5 L60 0.5 L64 3.5 L68 0.5 L72 3.5" stroke="#f04040" stroke-width="1.1" fill="none"/></svg>
<div class="t" style="left:343px;top:414.00px;font-size:13.33px;line-height:13.33px;color:#000;font-family:'Liberation Serif',serif;font-weight:normal;">TABLE</div>
<div class="t" style="left:769px;top:414.00px;font-size:13.33px;line-height:13.33px;color:#000;font-family:'Liberation Serif',serif;font-weight:normal;transform:scaleX(0.9412);transform-origin:0 0;">ADMIN</div>
<div class="t" style="left:851px;top:414.00px;font-size:13.33px;line-height:13.33px;color:#000;font-family:'Liberation Serif',serif;font-weight:normal;transform:scaleX(0.9512);transform-origin:0 0;">SAMPLE</div>
<div style="left:47px;top:445px;width:1560px;height:1px;background:#c6c6c6;"></div>
<div style="left:13px;top:445px;width:33px;height:1px;background:#6a6a6a;"></div>
<div class="t" style="left:22.828125px;top:432.00px;font-size:12px;line-height:12px;color:#222;font-family:'Liberation Sans',sans-serif;font-weight:normal;">13</div>
<div class="t" style="left:48px;top:431.00px;font-size:13.33px;line-height:13.33px;color:#000;font-family:'Liberation Serif',serif;font-weight:normal;">TABLE</div>
<div class="t" style="left:208px;top:431.00px;font-size:13.33px;line-height:13.33px;color:#000;font-family:'Liberation Serif',serif;font-weight:normal;">AQNewHaven</div>
<svg style="position:absolute;left:208px;top:442px;overflow:hidden;" width="80" height="5" viewBox="0 0 80 5"><path d="M0 3.5 L4 0.5 L8 3.5 L12 0.5 L16 3.5 L20 0.5 L24 3.5 L28 0.5 L32 3.5 L36 0.5 L40 3.5 L44 0.5 L48 3.5 L52 0.5 L56 3.5 L60 0.5 L64 3.5 L68 0.5 L72 3.5 L76 0.5 L80 3.5" stroke="#f04040" stroke-width="1.1" fill="none"/></svg>
<div class="t" style="left:343px;top:431.00px;font-size:13.33px;line-height:13.33px;color:#000;font-family:'Liberation Serif',serif;font-weight:normal;">TABLE</div>
<div class="t" style="left:769px;top:431.00px;font-size:13.33px;line-height:13.33px;color:#000;font-family:'Liberation Serif',serif;font-weight:normal;transform:scaleX(0.9412);transform-origin:0 0;">ADMIN</div>
<div class="t" style="left:851px;top:431.00px;font-size:13.33px;line-height:13.33px;color:#000;font-family:'Liberation Serif',serif;font-weight:normal;transform:scaleX(0.9512);transform-origin:0 0;">SAMPLE</div>
<div style="left:47px;top:462px;width:1560px;height:1px;background:#c6c6c6;"></div>
<div style="left:13px;top:462px;width:33px;height:1px;background:#6a6a6a;"></div>
<div class="t" style="left:22.828125px;top:449.00px;font-size:12px;line-height:12px;color:#222;font-family:'Liberation Sans',sans-serif;font-weight:normal;">14</div>
<div class="t" style="left:48px;top:448.00px;font-size:13.33px;line-height:13.33px;color:#000;font-family:'Liberation Serif',serif;font-weight:normal;">TABLE</div>
<div class="t" style="left:208px;top:448.00px;font-size:13.33px;line-height:13.33px;color:#000;font-family:'Liberation Serif',serif;font-weight:normal;">AQNorwalk</div>
<svg style="position:absolute;left:208px;top:459px;overflow:hidden;" width="66" height="5" viewBox="0 0 66 5"><path d="M0 3.5 L4 0.5 L8 3.5 L12 0.5 L16 3.5 L20 0.5 L24 3.5 L28 0.5 L32 3.5 L36 0.5 L40 3.5 L44 0.5 L48 3.5 L52 0.5 L56 3.5 L60 0.5 L64 3.5 L68 0.5 L72 3.5" stroke="#f04040" stroke-width="1.1" fill="none"/></svg>
<div class="t" style="left:343px;top:448.00px;font-size:13.33px;line-height:13.33px;color:#000;font-family:'Liberation Serif',serif;font-weight:normal;">TABLE</div>
<div class="t" style="left:769px;top:448.00px;font-size:13.33px;line-height:13.33px;color:#000;font-family:'Liberation Serif',serif;font-weight:normal;transform:scaleX(0.9412);transform-origin:0 0;">ADMIN</div>
<div class="t" style="left:851px;top:448.00px;font-size:13.33px;line-height:13.33px;color:#000;font-family:'Liberation Serif',serif;font-weight:normal;transform:scaleX(0.9512);transform-origin:0 0;">SAMPLE</div>
<div style="left:47px;top:493px;width:1560px;height:1px;background:#c6c6c6;"></div>
<div style="left:13px;top:493px;width:33px;height:1px;background:#6a6a6a;"></div>
<div class="t" style="left:22.828125px;top:473.00px;font-size:12px;line-height:12px;color:#222;font-family:'Liberation Sans',sans-serif;font-weight:normal;">15</div>
<div class="t" style="left:48px;top:479.00px;font-size:13.33px;line-height:13.33px;color:#000;font-family:'Liberation Serif',serif;font-weight:normal;">TABLE</div>
<div class="t" style="left:208px;top:479.00px;font-size:13.33px;line-height:13.33px;color:#000;font-family:'Liberation Serif',serif;font-weight:normal;">AQOldSaybrook</div>
<svg style="position:absolute;left:208px;top:490px;overflow:hidden;" width="91" height="5" viewBox="0 0 91 5"><path d="M0 3.5 L4 0.5 L8 3.5 L12 0.5 L16 3.5 L20 0.5 L24 3.5 L28 0.5 L32 3.5 L36 0.5 L40 3.5 L44 0.5 L48 3.5 L52 0.5 L56 3.5 L60 0.5 L64 3.5 L68 0.5 L72 3.5 L76 0.5 L80 3.5 L84 0.5 L88 3.5 L92 0.5 L96 3.5" stroke="#f04040" stroke-width="1.1" fill="none"/></svg>
<div class="t" style="left:343px;top:479.00px;font-size:13.33px;line-height:13.33px;color:#000;font-family:'Liberation Serif',serif;font-weight:normal;">TABLE</div>
<div class="t" style="left:769px;top:479.00px;font-size:13.33px;line-height:13.33px;color:#000;font-family:'Liberation Serif',serif;font-weight:normal;transform:scaleX(0.9412);transform-origin:0 0;">ADMIN</div>
<div class="t" style="left:851px;top:479.00px;font-size:13.33px;line-height:13.33px;color:#000;font-family:'Liberation Serif',serif;font-weight:normal;transform:scaleX(0.9512);transform-origin:0 0;">SAMPLE</div>
<div style="left:47px;top:510px;width:1560px;height:1px;background:#c6c6c6;"></div>
<div style="left:13px;top:510px;width:33px;height:1px;background:#6a6a6a;"></div>
<div class="t" style="left:22.828125px;top:497.00px;font-size:12px;line-height:12px;color:#222;font-family:'Liberation Sans',sans-serif;font-weight:normal;">16</div>
<div class="t" style="left:48px;top:496.00px;font-size:13.33px;line-height:13.33px;color:#000;font-family:'Liberation Serif',serif;font-weight:normal;">TABLE</div>
<div class="t" style="left:208px;top:496.00px;font-size:13.33px;line-height:13.33px;color:#000;font-family:'Liberation Serif',serif;font-weight:normal;">AQPlainfield</div>
<svg style="position:absolute;left:208px;top:507px;overflow:hidden;" width="72" height="5" viewBox="0 0 72 5"><path d="M0 3.5 L4 0.5 L8 3.5 L12 0.5 L16 3.5 L20 0.5 L24 3.5 L28 0.5 L32 3.5 L36 0.5 L40 3.5 L44 0.5 L48 3.5 L52 0.5 L56 3.5 L60 0.5 L64 3.5 L68 0.5 L72 3.5" stroke="#f04040" stroke-width="1.1" fill="none"/></svg>
<div class="t" style="left:343px;top:496.00px;font-size:13.33px;line-height:13.33px;color:#000;font-family:'Liberation Serif',serif;font-weight:normal;">TABLE</div>
<div class="t" style="left:769px;top:496.00px;font-size:13.33px;line-height:13.33px;color:#000;font-family:'Liberation Serif',serif;font-weight:normal;transform:scaleX(0.9412);transform-origin:0 0;">ADMIN</div>
<div class="t" style="left:851px;top:496.00px;font-size:13.33px;line-height:13.33px;color:#000;font-family:'Liberation Serif',serif;font-weight:normal;transform:scaleX(0.9512);transform-origin:0 0;">SAMPLE</div>
<div style="left:47px;top:527px;width:1560px;height:1px;background:#c6c6c6;"></div>
<div style="left:13px;top:527px;width:33px;height:1px;background:#6a6a6a;"></div>
<div class="t" style="left:22.828125px;top:514.00px;font-size:12px;line-height:12px;color:#222;font-family:'Liberation Sans',sans-serif;font-weight:normal;">17</div>
<div class="t" style="left:48px;top:513.00px;font-size:13.33px;line-height:13.33px;color:#000;font-family:'Liberation Serif',serif;font-weight:normal;">TABLE</div>
<div class="t" style="left:208px;top:513.00px;font-size:13.33px;line-height:13.33px;color:#000;font-family:'Liberation Serif',serif;font-weight:normal;">AQProspect</div>
<svg style="position:absolute;left:208px;top:524px;overflow:hidden;" width="66" height="5" viewBox="0 0 66 5"><path d="M0 3.5 L4 0.5 L8 3.5 L12 0.5 L16 3.5 L20 0.5 L24 3.5 L28 0.5 L32 3.5 L36 0.5 L40 3.5 L44 0.5 L48 3.5 L52 0.5 L56 3.5 L60 0.5 L64 3.5 L68 0.5 L72 3.5" stroke="#f04040" stroke-width="1.1" fill="none"/></svg>
<div class="t" style="left:343px;top:513.00px;font-size:13.33px;line-height:13.33px;color:#000;font-family:'Liberation Serif',serif;font-weight:normal;">TABLE</div>
<div class="t" style="left:769px;top:513.00px;font-size:13.33px;line-height:13.33px;color:#000;font-family:'Liberation Serif',serif;font-weight:normal;transform:scaleX(0.9412);transform-origin:0 0;">ADMIN</div>
<div class="t" style="left:851px;top:513.00px;font-size:13.33px;line-height:13.33px;color:#000;font-family:'Liberation Serif',serif;font-weight:normal;transform:scaleX(0.9512);transform-origin:0 0;">SAMPLE</div>
<div style="left:47px;top:544px;width:1560px;height:1px;background:#c6c6c6;"></div>
<div style="left:13px;top:544px;width:33px;height:1px;background:#6a6a6a;"></div>
<div class="t" style="left:22.828125px;top:531.00px;font-size:12px;line-height:12px;color:#222;font-family:'Liberation Sans',sans-serif;font-weight:normal;">18</div>
<div class="t" style="left:48px;top:530.00px;font-size:13.33px;line-height:13.33px;color:#000;font-family:'Liberation Serif',serif;font-weight:normal;">TABLE</div>
<div class="t" style="left:208px;top:530.00px;font-size:13.33px;line-height:13.33px;color:#000;font-family:'Liberation Serif',serif;font-weight:normal;">AQRidgefield</div>
<svg style="position:absolute;left:208px;top:541px;overflow:hidden;" width="76" height="5" viewBox="0 0 76 5"><path d="M0 3.5 L4 0.5 L8 3.5 L12 0.5 L16 3.5 L20 0.5 L24 3.5 L28 0.5 L32 3.5 L36 0.5 L40 3.5 L44 0.5 L48 3.5 L52 0.5 L56 3.5 L60 0.5 L64 3.5 L68 0.5 L72 3.5 L76 0.5 L80 3.5" stroke="#f04040" stroke-width="1.1" fill="none"/></svg>
<div class="t" style="left:343px;top:530.00px;font-size:13.33px;line-height:13.33px;color:#000;font-family:'Liberation Serif',serif;font-weight:normal;">TABLE</div>
<div class="t" style="left:769px;top:530.00px;font-size:13.33px;line-height:13.33px;color:#000;font-family:'Liberation Serif',serif;font-weight:normal;transform:scaleX(0.9412);transform-origin:0 0;">ADMIN</div>
<div class="t" style="left:851px;top:530.00px;font-size:13.33px;line-height:13.33px;color:#000;font-family:'Liberation Serif',serif;font-weight:normal;transform:scaleX(0.9512);transform-origin:0 0;">SAMPLE</div>
<div style="left:47px;top:561px;width:1560px;height:1px;background:#c6c6c6;"></div>
<div style="left:13px;top:561px;width:33px;height:1px;background:#6a6a6a;"></div>
<div class="t" style="left:22.828125px;top:548.00px;font-size:12px;line-height:12px;color:#222;font-family:'Liberation Sans',sans-serif;font-weight:normal;">19</div>
<div class="t" style="left:48px;top:547.00px;font-size:13.33px;line-height:13.33px;color:#000;font-family:'Liberation Serif',serif;font-weight:normal;">TABLE</div>
<div class="t" style="left:208px;top:547.00px;font-size:13.33px;line-height:13.33px;color:#000;font-family:'Liberation Serif',serif;font-weight:normal;">AQScotland</div>
<svg style="position:absolute;left:208px;top:558px;overflow:hidden;" width="66" height="5" viewBox="0 0 66 5"><path d="M0 3.5 L4 0.5 L8 3.5 L12 0.5 L16 3.5 L20 0.5 L24 3.5 L28 0.5 L32 3.5 L36 0.5 L40 3.5 L44 0.5 L48 3.5 L52 0.5 L56 3.5 L60 0.5 L64 3.5 L68 0.5 L72 3.5" stroke="#f04040" stroke-width="1.1" fill="none"/></svg>
<div class="t" style="left:343px;top:547.00px;font-size:13.33px;line-height:13.33px;color:#000;font-family:'Liberation Serif',serif;font-weight:normal;">TABLE</div>
<div class="t" style="left:769px;top:547.00px;font-size:13.33px;line-height:13.33px;color:#000;font-family:'Liberation Serif',serif;font-weight:normal;transform:scaleX(0.9412);transform-origin:0 0;">ADMIN</div>
<div class="t" style="left:851px;top:547.00px;font-size:13.33px;line-height:13.33px;color:#000;font-family:'Liberation Serif',serif;font-weight:normal;transform:scaleX(0.9512);transform-origin:0 0;">SAMPLE</div>
<div style="left:47px;top:578px;width:1560px;height:1px;background:#c6c6c6;"></div>
<div style="left:13px;top:578px;width:33px;height:1px;background:#6a6a6a;"></div>
<div class="t" style="left:22.828125px;top:565.00px;font-size:12px;line-height:12px;color:#222;font-family:'Liberation Sans',sans-serif;font-weight:normal;">20</div>
<div class="t" style="left:48px;top:564.00px;font-size:13.33px;line-height:13.33px;color:#000;font-family:'Liberation Serif',serif;font-weight:normal;">TABLE</div>
<div class="t" style="left:208px;top:564.00px;font-size:13.33px;line-height:13.33px;color:#000;font-family:'Liberation Serif',serif;font-weight:normal;">AQSeymour</div>
<svg style="position:absolute;left:208px;top:575px;overflow:hidden;" width="68" height="5" viewBox="0 0 68 5"><path d="M0 3.5 L4 0.5 L8 3.5 L12 0.5 L16 3.5 L20 0.5 L24 3.5 L28 0.5 L32 3.5 L36 0.5 L40 3.5 L44 0.5 L48 3.5 L52 0.5 L56 3.5 L60 0.5 L64 3.5 L68 0.5 L72 3.5" stroke="#f04040" stroke-width="1.1" fill="none"/></svg>
<div class="t" style="left:343px;top:564.00px;font-size:13.33px;line-height:13.33px;color:#000;font-family:'Liberation Serif',serif;font-weight:normal;">TABLE</div>
<div class="t" style="left:769px;top:564.00px;font-size:13.33px;line-height:13.33px;color:#000;font-family:'Liberation Serif',serif;font-weight:normal;transform:scaleX(0.9412);transform-origin:0 0;">ADMIN</div>
<div class="t" style="left:851px;top:564.00px;font-size:13.33px;line-height:13.33px;color:#000;font-family:'Liberation Serif',serif;font-weight:normal;transform:scaleX(0.9512);transform-origin:0 0;">SAMPLE</div>
<div style="left:47px;top:609px;width:1560px;height:1px;background:#c6c6c6;"></div>
<div style="left:13px;top:609px;width:33px;height:1px;background:#6a6a6a;"></div>
<div class="t" style="left:22.828125px;top:589.00px;font-size:12px;line-height:12px;color:#222;font-family:'Liberation Sans',sans-serif;font-weight:normal;">21</div>
<div class="t" style="left:48px;top:595.00px;font-size:13.33px;line-height:13.33px;color:#000;font-family:'Liberation Serif',serif;font-weight:normal;">TABLE</div>
<div class="t" style="left:208px;top:595.00px;font-size:13.33px;line-height:13.33px;color:#000;font-family:'Liberation Serif',serif;font-weight:normal;">AQStonington</div>
<svg style="position:absolute;left:208px;top:606px;overflow:hidden;" width="78" height="5" viewBox="0 0 78 5"><path d="M0 3.5 L4 0.5 L8 3.5 L12 0.5 L16 3.5 L20 0.5 L24 3.5 L28 0.5 L32 3.5 L36 0.5 L40 3.5 L44 0.5 L48 3.5 L52 0.5 L56 3.5 L60 0.5 L64 3.5 L68 0.5 L72 3.5 L76 0.5 L80 3.5" stroke="#f04040" stroke-width="1.1" fill="none"/></svg>
<div class="t" style="left:343px;top:595.00px;font-size:13.33px;line-height:13.33px;color:#000;font-family:'Liberation Serif',serif;font-weight:normal;">TABLE</div>
<div class="t" style="left:769px;top:595.00px;font-size:13.33px;line-height:13.33px;color:#000;font-family:'Liberation Serif',serif;font-weight:normal;transform:scaleX(0.9412);transform-origin:0 0;">ADMIN</div>
<div class="t" style="left:851px;top:595.00px;font-size:13.33px;line-height:13.33px;color:#000;font-family:'Liberation Serif',serif;font-weight:normal;transform:scaleX(0.9512);transform-origin:0 0;">SAMPLE</div>
<div style="left:47px;top:640px;width:1560px;height:1px;background:#c6c6c6;"></div>
<div style="left:13px;top:640px;width:33px;height:1px;background:#6a6a6a;"></div>
<div class="t" style="left:22.828125px;top:620.00px;font-size:12px;line-height:12px;color:#222;font-family:'Liberation Sans',sans-serif;font-weight:normal;">22</div>
<div class="t" style="left:48px;top:626.00px;font-size:13.33px;line-height:13.33px;color:#000;font-family:'Liberation Serif',serif;font-weight:normal;">TABLE</div>
<div class="t" style="left:208px;top:626.00px;font-size:13.33px;line-height:13.33px;color:#000;font-family:'Liberation Serif',serif;font-weight:normal;">AQThomaston</div>
<svg style="position:absolute;left:208px;top:637px;overflow:hidden;" width="80" height="5" viewBox="0 0 80 5"><path d="M0 3.5 L4 0.5 L8 3.5 L12 0.5 L16 3.5 L20 0.5 L24 3.5 L28 0.5 L32 3.5 L36 0.5 L40 3.5 L44 0.5 L48 3.5 L52 0.5 L56 3.5 L60 0.5 L64 3.5 L68 0.5 L72 3.5 L76 0.5 L80 3.5" stroke="#f04040" stroke-width="1.1" fill="none"/></svg>
<div class="t" style="left:343px;top:626.00px;font-size:13.33px;line-height:13.33px;color:#000;font-family:'Liberation Serif',serif;font-weight:normal;">TABLE</div>
<div class="t" style="left:769px;top:626.00px;font-size:13.33px;line-height:13.33px;color:#000;font-family:'Liberation Serif',serif;font-weight:normal;transform:scaleX(0.9412);transform-origin:0 0;">ADMIN</div>
<div class="t" style="left:851px;top:626.00px;font-size:13.33px;line-height:13.33px;color:#000;font-family:'Liberation Serif',serif;font-weight:normal;transform:scaleX(0.9512);transform-origin:0 0;">SAMPLE</div>
<div style="left:47px;top:657px;width:1560px;height:1px;background:#c6c6c6;"></div>
<div style="left:13px;top:657px;width:33px;height:1px;background:#6a6a6a;"></div>
<div class="t" style="left:22.828125px;top:644.00px;font-size:12px;line-height:12px;color:#222;font-family:'Liberation Sans',sans-serif;font-weight:normal;">23</div>
<div class="t" style="left:48px;top:643.00px;font-size:13.33px;line-height:13.33px;color:#000;font-family:'Liberation Serif',serif;font-weight:normal;">TABLE</div>
<div class="t" style="left:208px;top:643.00px;font-size:13.33px;line-height:13.33px;color:#000;font-family:'Liberation Serif',serif;font-weight:normal;">AQWarren</div>
<svg style="position:absolute;left:208px;top:654px;overflow:hidden;" width="59" height="5" viewBox="0 0 59 5"><path d="M0 3.5 L4 0.5 L8 3.5 L12 0.5 L16 3.5 L20 0.5 L24 3.5 L28 0.5 L32 3.5 L36 0.5 L40 3.5 L44 0.5 L48 3.5 L52 0.5 L56 3.5 L60 0.5 L64 3.5" stroke="#f04040" stroke-width="1.1" fill="none"/></svg>
<div class="t" style="left:343px;top:643.00px;font-size:13.33px;line-height:13.33px;color:#000;font-family:'Liberation Serif',serif;font-weight:normal;">TABLE</div>
<div class="t" style="left:769px;top:643.00px;font-size:13.33px;line-height:13.33px;color:#000;font-family:'Liberation Serif',serif;font-weight:normal;transform:scaleX(0.9412);transform-origin:0 0;">ADMIN</div>
<div class="t" style="left:851px;top:643.00px;font-size:13.33px;line-height:13.33px;color:#000;font-family:'Liberation Serif',serif;font-weight:normal;transform:scaleX(0.9512);transform-origin:0 0;">SAMPLE</div>
<div style="left:47px;top:674px;width:1560px;height:1px;background:#c6c6c6;"></div>
<div style="left:13px;top:674px;width:33px;height:1px;background:#6a6a6a;"></div>
<div class="t" style="left:22.828125px;top:661.00px;font-size:12px;line-height:12px;color:#222;font-family:'Liberation Sans',sans-serif;font-weight:normal;">24</div>
<div class="t" style="left:48px;top:660.00px;font-size:13.33px;line-height:13.33px;color:#000;font-family:'Liberation Serif',serif;font-weight:normal;">TABLE</div>
<div class="t" style="left:208px;top:660.00px;font-size:13.33px;line-height:13.33px;color:#000;font-family:'Liberation Serif',serif;font-weight:normal;">AQWeston</div>
<svg style="position:absolute;left:208px;top:671px;overflow:hidden;" width="59" height="5" viewBox="0 0 59 5"><path d="M0 3.5 L4 0.5 L8 3.5 L12 0.5 L16 3.5 L20 0.5 L24 3.5 L28 0.5 L32 3.5 L36 0.5 L40 3.5 L44 0.5 L48 3.5 L52 0.5 L56 3.5 L60 0.5 L64 3.5" stroke="#f04040" stroke-width="1.1" fill="none"/></svg>
<div class="t" style="left:343px;top:660.00px;font-size:13.33px;line-height:13.33px;color:#000;font-family:'Liberation Serif',serif;font-weight:normal;">TABLE</div>
<div class="t" style="left:769px;top:660.00px;font-size:13.33px;line-height:13.33px;color:#000;font-family:'Liberation Serif',serif;font-weight:normal;transform:scaleX(0.9412);transform-origin:0 0;">ADMIN</div>
<div class="t" style="left:851px;top:660.00px;font-size:13.33px;line-height:13.33px;color:#000;font-family:'Liberation Serif',serif;font-weight:normal;transform:scaleX(0.9512);transform-origin:0 0;">SAMPLE</div>
<div style="left:47px;top:705px;width:1560px;height:1px;background:#c6c6c6;"></div>
<div style="left:13px;top:705px;width:33px;height:1px;background:#6a6a6a;"></div>
<div class="t" style="left:22.828125px;top:685.00px;font-size:12px;line-height:12px;color:#222;font-family:'Liberation Sans',sans-serif;font-weight:normal;">25</div>
<div class="t" style="left:48px;top:691.00px;font-size:13.33px;line-height:13.33px;color:#000;font-family:'Liberation Serif',serif;font-weight:normal;">TABLE_COLUMN</div>
<div class="t" style="left:208px;top:691.00px;font-size:13.33px;line-height:13.33px;color:#000;font-family:'Liberation Serif',serif;font-weight:normal;">AQEastHaven</div>
<svg style="position:absolute;left:208px;top:702px;overflow:hidden;" width="78" height="5" viewBox="0 0 78 5"><path d="M0 3.5 L4 0.5 L8 3.5 L12 0.5 L16 3.5 L20 0.5 L24 3.5 L28 0.5 L32 3.5 L36 0.5 L40 3.5 L44 0.5 L48 3.5 L52 0.5 L56 3.5 L60 0.5 L64 3.5 L68 0.5 L72 3.5 L76 0.5 L80 3.5" stroke="#f04040" stroke-width="1.1" fill="none"/></svg>
<div class="t" style="left:343px;top:691.00px;font-size:13.33px;line-height:13.33px;color:#000;font-family:'Liberation Serif',serif;font-weight:normal;">TABLE_COLUMN</div>
<div class="t" style="left:605px;top:691.00px;font-size:13.33px;line-height:13.33px;color:#000;font-family:'Liberation Serif',serif;font-weight:normal;">AQBranford</div>
<svg style="position:absolute;left:605px;top:702px;overflow:hidden;" width="68" height="5" viewBox="0 0 68 5"><path d="M0 3.5 L4 0.5 L8 3.5 L12 0.5 L16 3.5 L20 0.5 L24 3.5 L28 0.5 L32 3.5 L36 0.5 L40 3.5 L44 0.5 L48 3.5 L52 0.5 L56 3.5 L60 0.5 L64 3.5 L68 0.5 L72 3.5" stroke="#f04040" stroke-width="1.1" fill="none"/></svg>
<div class="t" style="left:769px;top:691.00px;font-size:13.33px;line-height:13.33px;color:#000;font-family:'Liberation Serif',serif;font-weight:normal;transform:scaleX(0.9412);transform-origin:0 0;">ADMIN</div>
<div class="t" style="left:851px;top:691.00px;font-size:13.33px;line-height:13.33px;color:#000;font-family:'Liberation Serif',serif;font-weight:normal;transform:scaleX(0.9512);transform-origin:0 0;">SAMPLE</div>
<div style="left:47px;top:736px;width:1560px;height:1px;background:#c6c6c6;"></div>
<div style="left:13px;top:736px;width:33px;height:1px;background:#6a6a6a;"></div>
<div class="t" style="left:22.828125px;top:716.00px;font-size:12px;line-height:12px;color:#222;font-family:'Liberation Sans',sans-serif;font-weight:normal;">26</div>
<div class="t" style="left:48px;top:722.00px;font-size:13.33px;line-height:13.33px;color:#000;font-family:'Liberation Serif',serif;font-weight:normal;">TABLE_COLUMN</div>
<div class="t" style="left:208px;top:722.00px;font-size:13.33px;line-height:13.33px;color:#000;font-family:'Liberation Serif',serif;font-weight:normal;">AQSouthington</div>
<svg style="position:absolute;left:208px;top:733px;overflow:hidden;" width="85" height="5" viewBox="0 0 85 5"><path d="M0 3.5 L4 0.5 L8 3.5 L12 0.5 L16 3.5 L20 0.5 L24 3.5 L28 0.5 L32 3.5 L36 0.5 L40 3.5 L44 0.5 L48 3.5 L52 0.5 L56 3.5 L60 0.5 L64 3.5 L68 0.5 L72 3.5 L76 0.5 L80 3.5 L84 0.5 L88 3.5" stroke="#f04040" stroke-width="1.1" fill="none"/></svg>
<div class="t" style="left:343px;top:722.00px;font-size:13.33px;line-height:13.33px;color:#000;font-family:'Liberation Serif',serif;font-weight:normal;">TABLE_COLUMN</div>
<div class="t" style="left:605px;top:722.00px;font-size:13.33px;line-height:13.33px;color:#000;font-family:'Liberation Serif',serif;font-weight:normal;">AQBranford</div>
<svg style="position:absolute;left:605px;top:733px;overflow:hidden;" width="68" height="5" viewBox="0 0 68 5"><path d="M0 3.5 L4 0.5 L8 3.5 L12 0.5 L16 3.5 L20 0.5 L24 3.5 L28 0.5 L32 3.5 L36 0.5 L40 3.5 L44 0.5 L48 3.5 L52 0.5 L56 3.5 L60 0.5 L64 3.5 L68 0.5 L72 3.5" stroke="#f04040" stroke-width="1.1" fill="none"/></svg>
<div class="t" style="left:769px;top:722.00px;font-size:13.33px;line-height:13.33px;color:#000;font-family:'Liberation Serif',serif;font-weight:normal;transform:scaleX(0.9412);transform-origin:0 0;">ADMIN</div>
<div class="t" style="left:851px;top:722.00px;font-size:13.33px;line-height:13.33px;color:#000;font-family:'Liberation Serif',serif;font-weight:normal;transform:scaleX(0.9512);transform-origin:0 0;">SAMPLE</div>
<div style="left:47px;top:767px;width:1560px;height:1px;background:#c6c6c6;"></div>
<div style="left:13px;top:767px;width:33px;height:1px;background:#6a6a6a;"></div>
<div class="t" style="left:22.828125px;top:747.00px;font-size:12px;line-height:12px;color:#222;font-family:'Liberation Sans',sans-serif;font-weight:normal;">27</div>
<div class="t" style="left:48px;top:753.00px;font-size:13.33px;line-height:13.33px;color:#000;font-family:'Liberation Serif',serif;font-weight:normal;">TABLE_COLUMN</div>
<div class="t" style="left:208px;top:753.00px;font-size:13.33px;line-height:13.33px;color:#000;font-family:'Liberation Serif',serif;font-weight:normal;">AQWindham</div>
<svg style="position:absolute;left:208px;top:764px;overflow:hidden;" width="72" height="5" viewBox="0 0 72 5"><path d="M0 3.5 L4 0.5 L8 3.5 L12 0.5 L16 3.5 L20 0.5 L24 3.5 L28 0.5 L32 3.5 L36 0.5 L40 3.5 L44 0.5 L48 3.5 L52 0.5 L56 3.5 L60 0.5 L64 3.5 L68 0.5 L72 3.5" stroke="#f04040" stroke-width="1.1" fill="none"/></svg>
<div class="t" style="left:343px;top:753.00px;font-size:13.33px;line-height:13.33px;color:#000;font-family:'Liberation Serif',serif;font-weight:normal;">TABLE_COLUMN</div>
<div class="t" style="left:605px;top:753.00px;font-size:13.33px;line-height:13.33px;color:#000;font-family:'Liberation Serif',serif;font-weight:normal;">AQBranford</div>
<svg style="position:absolute;left:605px;top:764px;overflow:hidden;" width="68" height="5" viewBox="0 0 68 5"><path d="M0 3.5 L4 0.5 L8 3.5 L12 0.5 L16 3.5 L20 0.5 L24 3.5 L28 0.5 L32 3.5 L36 0.5 L40 3.5 L44 0.5 L48 3.5 L52 0.5 L56 3.5 L60 0.5 L64 3.5 L68 0.5 L72 3.5" stroke="#f04040" stroke-width="1.1" fill="none"/></svg>
<div class="t" style="left:769px;top:753.00px;font-size:13.33px;line-height:13.33px;color:#000;font-family:'Liberation Serif',serif;font-weight:normal;transform:scaleX(0.9412);transform-origin:0 0;">ADMIN</div>
<div class="t" style="left:851px;top:753.00px;font-size:13.33px;line-height:13.33px;color:#000;font-family:'Liberation Serif',serif;font-weight:normal;transform:scaleX(0.9512);transform-origin:0 0;">SAMPLE</div>
<div style="left:47px;top:798px;width:1560px;height:1px;background:#c6c6c6;"></div>
<div style="left:13px;top:798px;width:33px;height:1px;background:#6a6a6a;"></div>
<div class="t" style="left:22.828125px;top:778.00px;font-size:12px;line-height:12px;color:#222;font-family:'Liberation Sans',sans-serif;font-weight:normal;">28</div>
<div class="t" style="left:48px;top:784.00px;font-size:13.33px;line-height:13.33px;color:#000;font-family:'Liberation Serif',serif;font-weight:normal;">TABLE_COLUMN</div>
<div class="t" style="left:208px;top:784.00px;font-size:13.33px;line-height:13.33px;color:#000;font-family:'Liberation Serif',serif;font-weight:normal;">AQCanterbury</div>
<svg style="position:absolute;left:208px;top:795px;overflow:hidden;" width="80" height="5" viewBox="0 0 80 5"><path d="M0 3.5 L4 0.5 L8 3.5 L12 0.5 L16 3.5 L20 0.5 L24 3.5 L28 0.5 L32 3.5 L36 0.5 L40 3.5 L44 0.5 L48 3.5 L52 0.5 L56 3.5 L60 0.5 L64 3.5 L68 0.5 L72 3.5 L76 0.5 L80 3.5" stroke="#f04040" stroke-width="1.1" fill="none"/></svg>
<div class="t" style="left:343px;top:784.00px;font-size:13.33px;line-height:13.33px;color:#000;font-family:'Liberation Serif',serif;font-weight:normal;">TABLE_COLUMN</div>
<div class="t" style="left:605px;top:784.00px;font-size:13.33px;line-height:13.33px;color:#000;font-family:'Liberation Serif',serif;font-weight:normal;">AQBridgeport</div>
<svg style="position:absolute;left:605px;top:795px;overflow:hidden;" width="78" height="5" viewBox="0 0 78 5"><path d="M0 3.5 L4 0.5 L8 3.5 L12 0.5 L16 3.5 L20 0.5 L24 3.5 L28 0.5 L32 3.5 L36 0.5 L40 3.5 L44 0.5 L48 3.5 L52 0.5 L56 3.5 L60 0.5 L64 3.5 L68 0.5 L72 3.5 L76 0.5 L80 3.5" stroke="#f04040" stroke-width="1.1" fill="none"/></svg>
<div class="t" style="left:769px;top:784.00px;font-size:13.33px;line-height:13.33px;color:#000;font-family:'Liberation Serif',serif;font-weight:normal;transform:scaleX(0.9412);transform-origin:0 0;">ADMIN</div>
<div class="t" style="left:851px;top:784.00px;font-size:13.33px;line-height:13.33px;color:#000;font-family:'Liberation Serif',serif;font-weight:normal;transform:scaleX(0.9512);transform-origin:0 0;">SAMPLE</div>
<div style="left:47px;top:829px;width:1560px;height:1px;background:#c6c6c6;"></div>
<div style="left:13px;top:829px;width:33px;height:1px;background:#6a6a6a;"></div>
<div class="t" style="left:22.828125px;top:809.00px;font-size:12px;line-height:12px;color:#222;font-family:'Liberation Sans',sans-serif;font-weight:normal;">29</div>
<div class="t" style="left:48px;top:815.00px;font-size:13.33px;line-height:13.33px;color:#000;font-family:'Liberation Serif',serif;font-weight:normal;">TABLE_COLUMN</div>
<div class="t" style="left:208px;top:815.00px;font-size:13.33px;line-height:13.33px;color:#000;font-family:'Liberation Serif',serif;font-weight:normal;">AQEastLyme</div>
<svg style="position:absolute;left:208px;top:826px;overflow:hidden;" width="73" height="5" viewBox="0 0 73 5"><path d="M0 3.5 L4 0.5 L8 3.5 L12 0.5 L16 3.5 L20 0.5 L24 3.5 L28 0.5 L32 3.5 L36 0.5 L40 3.5 L44 0.5 L48 3.5 L52 0.5 L56 3.5 L60 0.5 L64 3.5 L68 0.5 L72 3.5 L76 0.5 L80 3.5" stroke="#f04040" stroke-width="1.1" fill="none"/></svg>
<div class="t" style="left:343px;top:815.00px;font-size:13.33px;line-height:13.33px;color:#000;font-family:'Liberation Serif',serif;font-weight:normal;">TABLE_COLUMN</div>
<div class="t" style="left:605px;top:815.00px;font-size:13.33px;line-height:13.33px;color:#000;font-family:'Liberation Serif',serif;font-weight:normal;">AQBridgeport</div>
<svg style="position:absolute;left:605px;top:826px;overflow:hidden;" width="78" height="5" viewBox="0 0 78 5"><path d="M0 3.5 L4 0.5 L8 3.5 L12 0.5 L16 3.5 L20 0.5 L24 3.5 L28 0.5 L32 3.5 L36 0.5 L40 3.5 L44 0.5 L48 3.5 L52 0.5 L56 3.5 L60 0.5 L64 3.5 L68 0.5 L72 3.5 L76 0.5 L80 3.5" stroke="#f04040" stroke-width="1.1" fill="none"/></svg>
<div class="t" style="left:769px;top:815.00px;font-size:13.33px;line-height:13.33px;color:#000;font-family:'Liberation Serif',serif;font-weight:normal;transform:scaleX(0.9412);transform-origin:0 0;">ADMIN</div>
<div class="t" style="left:851px;top:815.00px;font-size:13.33px;line-height:13.33px;color:#000;font-family:'Liberation Serif',serif;font-weight:normal;transform:scaleX(0.9512);transform-origin:0 0;">SAMPLE</div>
<div style="left:47px;top:860px;width:1560px;height:1px;background:#c6c6c6;"></div>
<div style="left:13px;top:860px;width:33px;height:1px;background:#6a6a6a;"></div>
<div class="t" style="left:22.828125px;top:840.00px;font-size:12px;line-height:12px;color:#222;font-family:'Liberation Sans',sans-serif;font-weight:normal;">30</div>
<div class="t" style="left:48px;top:846.00px;font-size:13.33px;line-height:13.33px;color:#000;font-family:'Liberation Serif',serif;font-weight:normal;">TABLE_COLUMN</div>
<div class="t" style="left:208px;top:846.00px;font-size:13.33px;line-height:13.33px;color:#000;font-family:'Liberation Serif',serif;font-weight:normal;">AQEnfield</div>
<svg style="position:absolute;left:208px;top:857px;overflow:hidden;" width="59" height="5" viewBox="0 0 59 5"><path d="M0 3.5 L4 0.5 L8 3.5 L12 0.5 L16 3.5 L20 0.5 L24 3.5 L28 0.5 L32 3.5 L36 0.5 L40 3.5 L44 0.5 L48 3.5 L52 0.5 L56 3.5 L60 0.5 L64 3.5" stroke="#f04040" stroke-width="1.1" fill="none"/></svg>
<div class="t" style="left:343px;top:846.00px;font-size:13.33px;line-height:13.33px;color:#000;font-family:'Liberation Serif',serif;font-weight:normal;">TABLE_COLUMN</div>
<div class="t" style="left:605px;top:846.00px;font-size:13.33px;line-height:13.33px;color:#000;font-family:'Liberation Serif',serif;font-weight:normal;">AQBridgeport</div>
<svg style="position:absolute;left:605px;top:857px;overflow:hidden;" width="78" height="5" viewBox="0 0 78 5"><path d="M0 3.5 L4 0.5 L8 3.5 L12 0.5 L16 3.5 L20 0.5 L24 3.5 L28 0.5 L32 3.5 L36 0.5 L40 3.5 L44 0.5 L48 3.5 L52 0.5 L56 3.5 L60 0.5 L64 3.5 L68 0.5 L72 3.5 L76 0.5 L80 3.5" stroke="#f04040" stroke-width="1.1" fill="none"/></svg>
<div class="t" style="left:769px;top:846.00px;font-size:13.33px;line-height:13.33px;color:#000;font-family:'Liberation Serif',serif;font-weight:normal;transform:scaleX(0.9412);transform-origin:0 0;">ADMIN</div>
<div class="t" style="left:851px;top:846.00px;font-size:13.33px;line-height:13.33px;color:#000;font-family:'Liberation Serif',serif;font-weight:normal;transform:scaleX(0.9512);transform-origin:0 0;">SAMPLE</div>
<div style="left:47px;top:891px;width:1560px;height:1px;background:#c6c6c6;"></div>
<div style="left:13px;top:891px;width:33px;height:1px;background:#6a6a6a;"></div>
<div class="t" style="left:22.828125px;top:871.00px;font-size:12px;line-height:12px;color:#222;font-family:'Liberation Sans',sans-serif;font-weight:normal;">31</div>
<div class="t" style="left:48px;top:877.00px;font-size:13.33px;line-height:13.33px;color:#000;font-family:'Liberation Serif',serif;font-weight:normal;">TABLE_COLUMN</div>
<div class="t" style="left:208px;top:877.00px;font-size:13.33px;line-height:13.33px;color:#000;font-family:'Liberation Serif',serif;font-weight:normal;">AQNewtown</div>
<svg style="position:absolute;left:208px;top:888px;overflow:hidden;" width="72" height="5" viewBox="0 0 72 5"><path d="M0 3.5 L4 0.5 L8 3.5 L12 0.5 L16 3.5 L20 0.5 L24 3.5 L28 0.5 L32 3.5 L36 0.5 L40 3.5 L44 0.5 L48 3.5 L52 0.5 L56 3.5 L60 0.5 L64 3.5 L68 0.5 L72 3.5" stroke="#f04040" stroke-width="1.1" fill="none"/></svg>
<div class="t" style="left:343px;top:877.00px;font-size:13.33px;line-height:13.33px;color:#000;font-family:'Liberation Serif',serif;font-weight:normal;">TABLE_COLUMN</div>
<div class="t" style="left:605px;top:877.00px;font-size:13.33px;line-height:13.33px;color:#000;font-family:'Liberation Serif',serif;font-weight:normal;">AQBridgeport</div>
<svg style="position:absolute;left:605px;top:888px;overflow:hidden;" width="78" height="5" viewBox="0 0 78 5"><path d="M0 3.5 L4 0.5 L8 3.5 L12 0.5 L16 3.5 L20 0.5 L24 3.5 L28 0.5 L32 3.5 L36 0.5 L40 3.5 L44 0.5 L48 3.5 L52 0.5 L56 3.5 L60 0.5 L64 3.5 L68 0.5 L72 3.5 L76 0.5 L80 3.5" stroke="#f04040" stroke-width="1.1" fill="none"/></svg>
<div class="t" style="left:769px;top:877.00px;font-size:13.33px;line-height:13.33px;color:#000;font-family:'Liberation Serif',serif;font-weight:normal;transform:scaleX(0.9412);transform-origin:0 0;">ADMIN</div>
<div class="t" style="left:851px;top:877.00px;font-size:13.33px;line-height:13.33px;color:#000;font-family:'Liberation Serif',serif;font-weight:normal;transform:scaleX(0.9512);transform-origin:0 0;">SAMPLE</div>
<div style="left:47px;top:922px;width:1560px;height:1px;background:#c6c6c6;"></div>
<div style="left:13px;top:922px;width:33px;height:1px;background:#6a6a6a;"></div>
<div class="t" style="left:22.828125px;top:902.00px;font-size:12px;line-height:12px;color:#222;font-family:'Liberation Sans',sans-serif;font-weight:normal;">32</div>
<div class="t" style="left:48px;top:908.00px;font-size:13.33px;line-height:13.33px;color:#000;font-family:'Liberation Serif',serif;font-weight:normal;">TABLE_COLUMN</div>
<div class="t" style="left:208px;top:908.00px;font-size:13.33px;line-height:13.33px;color:#000;font-family:'Liberation Serif',serif;font-weight:normal;">AQNorwich</div>
<svg style="position:absolute;left:208px;top:919px;overflow:hidden;" width="66" height="5" viewBox="0 0 66 5"><path d="M0 3.5 L4 0.5 L8 3.5 L12 0.5 L16 3.5 L20 0.5 L24 3.5 L28 0.5 L32 3.5 L36 0.5 L40 3.5 L44 0.5 L48 3.5 L52 0.5 L56 3.5 L60 0.5 L64 3.5 L68 0.5 L72 3.5" stroke="#f04040" stroke-width="1.1" fill="none"/></svg>
<div class="t" style="left:343px;top:908.00px;font-size:13.33px;line-height:13.33px;color:#000;font-family:'Liberation Serif',serif;font-weight:normal;">TABLE_COLUMN</div>
<div class="t" style="left:605px;top:908.00px;font-size:13.33px;line-height:13.33px;color:#000;font-family:'Liberation Serif',serif;font-weight:normal;">AQBridgeport</div>
<svg style="position:absolute;left:605px;top:919px;overflow:hidden;" width="78" height="5" viewBox="0 0 78 5"><path d="M0 3.5 L4 0.5 L8 3.5 L12 0.5 L16 3.5 L20 0.5 L24 3.5 L28 0.5 L32 3.5 L36 0.5 L40 3.5 L44 0.5 L48 3.5 L52 0.5 L56 3.5 L60 0.5 L64 3.5 L68 0.5 L72 3.5 L76 0.5 L80 3.5" stroke="#f04040" stroke-width="1.1" fill="none"/></svg>
<div class="t" style="left:769px;top:908.00px;font-size:13.33px;line-height:13.33px;color:#000;font-family:'Liberation Serif',serif;font-weight:normal;transform:scaleX(0.9412);transform-origin:0 0;">ADMIN</div>
<div class="t" style="left:851px;top:908.00px;font-size:13.33px;line-height:13.33px;color:#000;font-family:'Liberation Serif',serif;font-weight:normal;transform:scaleX(0.9512);transform-origin:0 0;">SAMPLE</div>
<div style="left:13px;top:953px;width:33px;height:1px;background:#6a6a6a;"></div>
<div class="t" style="left:22.828125px;top:933.00px;font-size:12px;line-height:12px;color:#222;font-family:'Liberation Sans',sans-serif;font-weight:normal;">33</div>
<div style="left:46px;top:196px;width:161px;height:18px;border:2px solid #2a7fe0;"></div>
<div style="left:203px;top:210px;width:6px;height:6px;background:#2a7fe0;border:1px solid #fff;"></div>
<div style="left:1607px;top:178px;width:17px;height:761px;background:#f0f0f0;"></div>
<div style="left:1607px;top:178px;width:17px;height:5px;background:#c8c8c8;"></div>
<div style="left:1611px;top:180px;width:9px;height:1px;background:#333;"></div>
<svg style="position:absolute;left:1611px;top:189px;" width="9" height="6" viewBox="0 0 9 6"><path d="M0.5 5L4.5 1L8.5 5" stroke="#333" stroke-width="1.5" fill="none"/></svg>
<div style="left:1608px;top:200px;width:15px;height:739px;background:#c8c8c8;"></div>
<div style="left:1624px;top:145px;width:1px;height:794px;background:#a0a0a0;"></div>
<div style="left:1625px;top:145px;width:46px;height:894px;background:#f0f0f0;"></div>
<svg style="position:absolute;left:1646px;top:155px;" width="11" height="11" viewBox="0 0 11 11"><path d="M0 2.5H11M0 6H11M0 9.5H11" stroke="#333" stroke-width="1.1"/></svg>
<svg style="position:absolute;left:1641px;top:181px;" width="21" height="21" viewBox="0 0 21 21"><rect x="0.75" y="1" width="19.5" height="19" fill="#fff" stroke="#333" stroke-width="1.3"/><rect x="0" y="0" width="21" height="3" fill="#555"/><path d="M4 8H17M4 13H17" stroke="#333" stroke-width="1"/><circle cx="11" cy="8" r="1.5" fill="#1e8bd8"/><circle cx="8" cy="13" r="1.5" fill="#1e8bd8"/></svg>
<svg style="position:absolute;left:1640px;top:215px;" width="24" height="24" viewBox="0 0 24 24"><path d="M1.5 17L7.5 1.5H9.5L13.5 12M4 11H12" fill="none" stroke="#333" stroke-width="1.6"/><path d="M12.5 18.5L20.8 8.5Q22.5 7.5 22 9.5L14 19.5Z" fill="#fff" stroke="#333" stroke-width="1.1"/><path d="M9 22.5Q12.5 23 14.2 19.8L12.3 18.2Q9.5 18.5 9 22.5Z" fill="#e8f2fb" stroke="#1e8bd8" stroke-width="1.3"/></svg>
<svg style="position:absolute;left:1640px;top:251px;" width="24" height="21" viewBox="0 0 24 21"><path d="M1 19V1H8L10 4H18V8" fill="#f6d98e" stroke="#e8892c" stroke-width="1.3"/><path d="M1 19L3 9H22L20 19Z" fill="#f6d98e" stroke="#e8892c" stroke-width="1.3"/><rect x="9" y="8" width="14" height="12" fill="#fff" stroke="#333" stroke-width="1.3"/><path d="M10 19L14 14L17 17L19 15L22 19Z" fill="#9cc6ea" stroke="#1e8bd8"/><circle cx="13" cy="11" r="1" fill="#e8892c"/></svg>
<div style="left:1634px;top:279px;width:33px;height:23px;background:#c5dcf5;border:1px solid #8ab8ec;"></div>
<svg style="position:absolute;left:1641px;top:285px;" width="19" height="17" viewBox="0 0 19 17"><circle cx="9.5" cy="9.5" r="8.5" fill="#fff" stroke="#333" stroke-width="1.3"/><path d="M14 5L7 9L5 14L12 10Z" fill="#1e8bd8"/></svg>
<div style="left:1671px;top:40px;width:1px;height:1000px;background:#d9d9d9;"></div>
<div style="left:13px;top:40px;width:1px;height:1000px;background:#d9d9d9;"></div>
<div style="left:1678px;top:10px;width:1px;height:1033px;background:#d2d2d2;"></div>
<div style="left:13px;top:939px;width:1612px;height:16px;background:#f0f0f0;"></div>
<svg style="position:absolute;left:19px;top:943px;" width="6" height="9" viewBox="0 0 6 9"><path d="M5 0.5L1 4.5L5 8.5" stroke="#333" stroke-width="1.6" fill="none"/></svg>
<div style="left:30px;top:940px;width:727px;height:15px;background:#c8c8c8;"></div>
<div style="left:13px;top:955px;width:1658px;height:23px;background:#f0f0f0;"></div>
<svg style="position:absolute;left:27px;top:960px;" width="9" height="13" viewBox="0 0 9 13"><path d="M0.5 0V13" stroke="#aaa"/><path d="M8 1L3 6.5L8 12Z" fill="#999"/></svg>
<svg style="position:absolute;left:50px;top:961px;" width="7" height="11" viewBox="0 0 7 11"><path d="M6 0L0.5 5.5L6 11Z" fill="#999"/></svg>
<svg style="position:absolute;left:71px;top:961px;" width="7" height="11" viewBox="0 0 7 11"><path d="M1 0L6.5 5.5L1 11Z" fill="#999"/></svg>
<svg style="position:absolute;left:92px;top:960px;" width="9" height="13" viewBox="0 0 9 13"><path d="M8.5 0V13" stroke="#aaa"/><path d="M1 1L6 6.5L1 12Z" fill="#999"/></svg>
<svg style="position:absolute;left:118px;top:961px;" width="14" height="14" viewBox="0 0 14 14"><path d="M7 0V14M0 7H14" stroke="#000" stroke-width="2.6"/></svg>
<div style="left:142px;top:956px;width:63px;height:22px;background:#fff;"></div>
<div style="left:142px;top:975px;width:63px;height:3px;background:#6b6b6b;"></div>
<div class="t" style="left:154px;top:961.00px;font-size:12px;line-height:12px;color:#000;font-family:'Liberation Sans',sans-serif;font-weight:bold;transform:scaleX(0.9404);transform-origin:0 0;">Sheet1</div>
<div style="left:13px;top:978px;width:1658px;height:1px;background:#c4c4c4;"></div>
<div style="left:13px;top:979px;width:1658px;height:38px;background:#f0f0f0;"></div>
<svg style="position:absolute;left:26px;top:988px;" width="19" height="19" viewBox="0 0 19 19"><circle cx="9" cy="9" r="8.3" fill="#f7a8a8" stroke="#e03030" stroke-width="1.1"/><path d="M5 5L13 13M13 5L5 13" stroke="#fff" stroke-width="1.6"/></svg>
<div style="left:51px;top:985px;width:250px;height:23px;background:#fff;border:1px solid #a9a9a9;"></div>
<div style="left:283px;top:986px;width:17px;height:21px;background:linear-gradient(#f2f2f2,#e2e2e2);border-left:1px solid #c4c4c4;"></div>
<svg style="position:absolute;left:288px;top:993px;" width="8" height="6" viewBox="0 0 8 6"><path d="M0.5 0.5L4 4L7.5 0.5" stroke="#333" stroke-width="1.4" fill="none"/></svg>
<div class="t" style="left:54px;top:992.00px;font-size:12px;line-height:12px;color:#a0a0a0;font-family:'Liberation Sans',sans-serif;font-weight:normal;transform:scaleX(0.9853);transform-origin:0 0;">Find</div>
<svg style="position:absolute;left:308px;top:991px;" width="21" height="12" viewBox="0 0 21 12"><path d="M1 11L10.5 1L20 11Z" fill="none" stroke="#bbb" stroke-width="1.1"/></svg>
<svg style="position:absolute;left:341px;top:991px;" width="21" height="12" viewBox="0 0 21 12"><path d="M1 1L10.5 11L20 1Z" fill="none" stroke="#bbb" stroke-width="1.1"/></svg>
<div class="t" style="left:370px;top:992.00px;font-size:12px;line-height:12px;color:#a0a0a0;font-family:'Liberation Sans',sans-serif;font-weight:normal;">Find All</div>
<div style="left:418px;top:990px;width:14px;height:14px;background:#fff;border:1px solid #333;"></div>
<div class="t" style="left:435px;top:992.00px;font-size:12px;line-height:12px;color:#000;font-family:'Liberation Sans',sans-serif;font-weight:normal;transform:scaleX(0.9655);transform-origin:0 0;">Formatted Display</div>
<div style="left:533px;top:990px;width:14px;height:14px;background:#fff;border:1px solid #333;"></div>
<div class="t" style="left:550px;top:992.00px;font-size:12px;line-height:12px;color:#000;font-family:'Liberation Sans',sans-serif;font-weight:normal;transform:scaleX(0.9529);transform-origin:0 0;">Match Case</div>
<div style="left:617px;top:988px;width:1px;height:18px;background:#c8c8c8;"></div>
<svg style="position:absolute;left:629px;top:985px;" width="24" height="23" viewBox="0 0 24 23"><path d="M7 13.5A7 7 0 1 1 19.5 12.5" fill="none" stroke="#333" stroke-width="1.2"/><path d="M7.5 14L1.5 20.5" stroke="#333" stroke-width="2"/><text x="8" y="12.5" font-size="12" fill="#1e8bd8" font-family="Liberation Sans">a</text><text x="14.2" y="22" font-size="12.5" fill="#333" font-family="Liberation Sans">d</text></svg>
<div style="left:658px;top:988px;width:1px;height:18px;background:#c8c8c8;"></div>
<div style="left:13px;top:1017px;width:1658px;height:1px;background:#c4c4c4;"></div>
<div style="left:13px;top:1018px;width:1658px;height:21px;background:#f0f0f0;"></div>
<div style="left:13px;top:1039px;width:1658px;height:1px;background:#d8d8d8;"></div>
<div class="t" style="left:25px;top:1024.00px;font-size:12px;line-height:12px;color:#000;font-family:'Liberation Sans',sans-serif;font-weight:normal;transform:scaleX(0.9432);transform-origin:0 0;">Sheet 1 of 1</div>
<div style="left:274px;top:1020px;width:1px;height:16px;background:#bdbdbd;"></div>
<div style="left:530px;top:1020px;width:1px;height:16px;background:#bdbdbd;"></div>
<div style="left:766px;top:1020px;width:1px;height:16px;background:#bdbdbd;"></div>
<div style="left:1034px;top:1020px;width:1px;height:16px;background:#bdbdbd;"></div>
<div style="left:1103px;top:1020px;width:1px;height:16px;background:#bdbdbd;"></div>
<div style="left:1133px;top:1020px;width:1px;height:16px;background:#bdbdbd;"></div>
<div style="left:1163px;top:1020px;width:1px;height:16px;background:#bdbdbd;"></div>
<div style="left:1193px;top:1020px;width:1px;height:16px;background:#bdbdbd;"></div>
<div class="t" style="left:540px;top:1024.00px;font-size:12px;line-height:12px;color:#000;font-family:'Liberation Sans',sans-serif;font-weight:normal;">Default</div>
<div class="t" style="left:866px;top:1024.00px;font-size:12px;line-height:12px;color:#000;font-family:'Liberation Sans',sans-serif;font-weight:normal;transform:scaleX(0.9289);transform-origin:0 0;">English (USA)</div>
<svg style="position:absolute;left:1111px;top:1022px;" width="20" height="14" viewBox="0 0 20 14"><rect x="1.6" y="4.6" width="8.6" height="5.6" fill="none" stroke="#1e8bd8" stroke-width="1.2"/><path d="M12.3 2.4H17.2M12.3 11.4H17.2M14.75 2.4V11.4" stroke="#333" stroke-width="1.3"/></svg>
<svg style="position:absolute;left:1144px;top:1022px;" width="12" height="12" viewBox="0 0 12 12"><path d="M1.5 1.3H10.5V10.7H2.5L1.5 9.7Z" fill="#fff" stroke="#e02020" stroke-width="1.5"/><rect x="3" y="1" width="6" height="3.6" fill="#fff" stroke="#e02020" stroke-width="1.2"/><rect x="2" y="6" width="8.2" height="4.2" fill="#e02020"/><rect x="4.6" y="7.4" width="3" height="2" fill="#fff"/></svg>
<div class="t" style="left:1293px;top:1024.00px;font-size:12px;line-height:12px;color:#000;font-family:'Liberation Sans',sans-serif;font-weight:normal;">Average:</div>
<div style="left:1317px;top:302px;width:1209px;height:741px;background:#fff;border:1px solid #b0b0b0;border-bottom:none;"></div>
<svg style="position:absolute;left:1326px;top:308px;" width="18" height="17" viewBox="0 0 18 17"><path d="M1 16L9 8L12 3.5L17 2L17 7L13 11L6 16Z" fill="#fbe79a" stroke="#f0a030" stroke-width="0.9"/><path d="M4.5 11.5L8.5 8L12 10L7.5 15Z" fill="#bdbdc8" stroke="#8a6a40" stroke-width="0.8"/><rect x="1" y="4" width="3.5" height="2.5" fill="#2a5cc0"/><path d="M4.5 5.2L7.5 1.5V9Z" fill="#a8c4e8" stroke="#2a60c0" stroke-width="0.9"/><path d="M8 3.5L10.5 4M8 7L10.5 6.5" stroke="#c09a20" stroke-width="0.9"/><rect x="9.5" y="4.3" width="3" height="2" fill="#b08a10"/></svg>
<div class="t" style="left:1725px;top:310.00px;font-size:15px;line-height:15px;color:#1e1e1e;font-family:'Liberation Sans',sans-serif;font-weight:normal;transform:scaleX(0.9613);transform-origin:0 0;">Object Search [db2admin@DB2 LUW 10.220.201.37 v11.5.7]</div>
<div style="left:2430px;top:315px;width:9px;height:2px;background:#000;"></div>
<div style="left:2456px;top:309px;width:11px;height:8px;border:1px solid #000;border-top-width:2px;"></div>
<div style="left:2474px;top:303px;width:45px;height:20px;background:#c75050;"></div>
<svg style="position:absolute;left:2491px;top:308px;" width="11" height="10" viewBox="0 0 11 10"><path d="M1 1L10 9M10 1L1 9" stroke="#fff" stroke-width="1.6"/></svg>
<div style="left:1324px;top:332px;width:1195px;height:709px;background:#f0f0f0;border-top:1px solid #e3e3e3;border-left:1px solid #e3e3e3;"></div>
<div style="left:1332px;top:344px;width:279px;height:248px;border:1px solid #d0d0d0;box-shadow:inset 1px 1px 0 #fff;"></div>
<div style="left:1338px;top:338px;width:54px;height:12px;background:#f0f0f0;"></div>
<div class="t" style="left:1341.5px;top:340.00px;font-size:11px;line-height:11px;color:#000;font-family:'Liberation Sans',sans-serif;font-weight:normal;transform:scaleX(0.9815);transform-origin:0 0;">Database</div>
<div style="left:1342px;top:355px;width:22px;height:23px;background:linear-gradient(#f6f6f6,#e6e6e6);border:1px solid #a8a8a8;"></div>
<svg style="position:absolute;left:1342px;top:355px;" width="22" height="23" viewBox="0 0 22 23"><rect x="7.6" y="3.6" width="11" height="13.4" fill="#fff" stroke="#3a88c8" stroke-width="1.1"/><path d="M9.7 5V8.6H14.6M11 11.6H14.6M11 14.6H14.6" fill="none" stroke="#3aa060" stroke-width="1.1"/><rect x="16" y="8" width="1.2" height="1.2" fill="#3aa060"/><rect x="16" y="11" width="1.2" height="1.2" fill="#3aa060"/><rect x="16" y="14" width="1.2" height="1.2" fill="#3aa060"/><rect x="4" y="10" width="7" height="7.6" fill="#10a040"/><path d="M5.2 13.6L7 16L10 11" stroke="#fff" stroke-width="1.3" fill="none"/></svg>
<div style="left:1368px;top:355px;width:22px;height:23px;background:linear-gradient(#f6f6f6,#e6e6e6);border:1px solid #a8a8a8;"></div>
<svg style="position:absolute;left:1368px;top:355px;" width="22" height="23" viewBox="0 0 22 23"><rect x="7.6" y="3.6" width="11" height="13.4" fill="#fff" stroke="#3a88c8" stroke-width="1.1"/><path d="M9.7 5V8.6H14.6M11 11.6H14.6M11 14.6H14.6" fill="none" stroke="#3aa060" stroke-width="1.1"/><rect x="16" y="8" width="1.2" height="1.2" fill="#3aa060"/><rect x="16" y="11" width="1.2" height="1.2" fill="#3aa060"/><rect x="16" y="14" width="1.2" height="1.2" fill="#3aa060"/><rect x="4" y="10" width="7" height="7.6" fill="#e00020"/><path d="M5.5 11.6L9.5 16M9.5 11.6L5.5 16" stroke="#fff" stroke-width="1.3"/></svg>
<div style="left:1394px;top:355px;width:22px;height:23px;background:linear-gradient(#f6f6f6,#e6e6e6);border:1px solid #a8a8a8;"></div>
<svg style="position:absolute;left:1394px;top:355px;" width="22" height="23" viewBox="0 0 22 23"><rect x="7.6" y="3.6" width="11" height="13.4" fill="#fff" stroke="#3a88c8" stroke-width="1.1"/><path d="M9.7 5V8.6H14.6M11 11.6H14.6M11 14.6H14.6" fill="none" stroke="#3aa060" stroke-width="1.1"/><rect x="16" y="8" width="1.2" height="1.2" fill="#3aa060"/><rect x="16" y="11" width="1.2" height="1.2" fill="#3aa060"/><rect x="16" y="14" width="1.2" height="1.2" fill="#3aa060"/><path d="M7.5 11V17.2M5.2 14.8L7.5 17.4L9.8 14.8" stroke="#10a040" stroke-width="1.6" fill="none"/><path d="M11.5 16.5V9.6M9.3 12L11.5 9.3L13.7 12" stroke="#e00020" stroke-width="1.6" fill="none"/></svg>
<div style="left:1341px;top:383px;width:263px;height:203px;background:#fff;border:1px solid #828790;"></div>
<div style="left:1342px;top:384px;width:261px;height:24px;background:#f0f0f0;"></div>
<div style="left:1342px;top:384px;width:18px;height:24px;background:#fbfbfb;border-right:1px solid #e5eaf0;"></div>
<div style="left:1360px;top:384px;width:74px;height:24px;background:#fbfbfb;border-right:1px solid #e5eaf0;border-bottom:1px solid #e5eaf0;"></div>
<div class="t" style="left:1365px;top:392.00px;font-size:11px;line-height:11px;color:#000;font-family:'Liberation Sans',sans-serif;font-weight:normal;transform:scaleX(0.9761);transform-origin:0 0;">Database</div>
<div style="left:1342px;top:409px;width:92px;height:16px;background:#fff;border-bottom:1px solid #f0f0f0;"></div>
<div style="left:1359px;top:409px;width:1px;height:16px;background:#f0f0f0;"></div>
<div style="left:1434px;top:409px;width:1px;height:16px;background:#f0f0f0;"></div>
<div style="left:1345px;top:410px;width:13px;height:13px;background:#fff;border:1px solid #3c3c3c;"></div>
<svg style="position:absolute;left:1347px;top:412px;" width="9" height="9" viewBox="0 0 9 9"><path d="M1 4.5L3.5 7.5L8 1.5" stroke="#000" stroke-width="2" fill="none"/></svg>
<div class="t" style="left:1362px;top:411.00px;font-size:11px;line-height:11px;color:#000;font-family:'Liberation Sans',sans-serif;font-weight:normal;transform:scaleX(0.8509);transform-origin:0 0;">SAMPLE</div>
<div style="left:1621px;top:344px;width:279px;height:248px;border:1px solid #d0d0d0;box-shadow:inset 1px 1px 0 #fff;"></div>
<div style="left:1627px;top:338px;width:46px;height:12px;background:#f0f0f0;"></div>
<div class="t" style="left:1630.5px;top:340.00px;font-size:11px;line-height:11px;color:#000;font-family:'Liberation Sans',sans-serif;font-weight:normal;transform:scaleX(0.9800);transform-origin:0 0;">Schema</div>
<div style="left:1631px;top:355px;width:22px;height:23px;background:linear-gradient(#f6f6f6,#e6e6e6);border:1px solid #a8a8a8;"></div>
<svg style="position:absolute;left:1631px;top:355px;" width="22" height="23" viewBox="0 0 22 23"><rect x="7.6" y="3.6" width="11" height="13.4" fill="#fff" stroke="#3a88c8" stroke-width="1.1"/><path d="M9.7 5V8.6H14.6M11 11.6H14.6M11 14.6H14.6" fill="none" stroke="#3aa060" stroke-width="1.1"/><rect x="16" y="8" width="1.2" height="1.2" fill="#3aa060"/><rect x="16" y="11" width="1.2" height="1.2" fill="#3aa060"/><rect x="16" y="14" width="1.2" height="1.2" fill="#3aa060"/><rect x="4" y="10" width="7" height="7.6" fill="#10a040"/><path d="M5.2 13.6L7 16L10 11" stroke="#fff" stroke-width="1.3" fill="none"/></svg>
<div style="left:1657px;top:355px;width:22px;height:23px;background:linear-gradient(#f6f6f6,#e6e6e6);border:1px solid #a8a8a8;"></div>
<svg style="position:absolute;left:1657px;top:355px;" width="22" height="23" viewBox="0 0 22 23"><rect x="7.6" y="3.6" width="11" height="13.4" fill="#fff" stroke="#3a88c8" stroke-width="1.1"/><path d="M9.7 5V8.6H14.6M11 11.6H14.6M11 14.6H14.6" fill="none" stroke="#3aa060" stroke-width="1.1"/><rect x="16" y="8" width="1.2" height="1.2" fill="#3aa060"/><rect x="16" y="11" width="1.2" height="1.2" fill="#3aa060"/><rect x="16" y="14" width="1.2" height="1.2" fill="#3aa060"/><rect x="4" y="10" width="7" height="7.6" fill="#e00020"/><path d="M5.5 11.6L9.5 16M9.5 11.6L5.5 16" stroke="#fff" stroke-width="1.3"/></svg>
<div style="left:1683px;top:355px;width:22px;height:23px;background:linear-gradient(#f6f6f6,#e6e6e6);border:1px solid #a8a8a8;"></div>
<svg style="position:absolute;left:1683px;top:355px;" width="22" height="23" viewBox="0 0 22 23"><rect x="7.6" y="3.6" width="11" height="13.4" fill="#fff" stroke="#3a88c8" stroke-width="1.1"/><path d="M9.7 5V8.6H14.6M11 11.6H14.6M11 14.6H14.6" fill="none" stroke="#3aa060" stroke-width="1.1"/><rect x="16" y="8" width="1.2" height="1.2" fill="#3aa060"/><rect x="16" y="11" width="1.2" height="1.2" fill="#3aa060"/><rect x="16" y="14" width="1.2" height="1.2" fill="#3aa060"/><path d="M7.5 11V17.2M5.2 14.8L7.5 17.4L9.8 14.8" stroke="#10a040" stroke-width="1.6" fill="none"/><path d="M11.5 16.5V9.6M9.3 12L11.5 9.3L13.7 12" stroke="#e00020" stroke-width="1.6" fill="none"/></svg>
<div style="left:1630px;top:383px;width:264px;height:203px;background:#fff;border:1px solid #828790;"></div>
<div style="left:1631px;top:384px;width:262px;height:24px;background:#f0f0f0;"></div>
<div style="left:1631px;top:384px;width:18px;height:24px;background:#fbfbfb;border-right:1px solid #e5eaf0;"></div>
<div style="left:1649px;top:384px;width:120px;height:24px;background:#fbfbfb;border-right:1px solid #e5eaf0;border-bottom:1px solid #e5eaf0;"></div>
<div class="t" style="left:1654px;top:392.00px;font-size:11px;line-height:11px;color:#000;font-family:'Liberation Sans',sans-serif;font-weight:normal;transform:scaleX(0.9164);transform-origin:0 0;">Schema</div>
<div style="left:1631px;top:409px;width:138px;height:16px;border-bottom:1px solid #f0f0f0;"></div>
<div style="left:1649px;top:409px;width:1px;height:16px;background:#f0f0f0;"></div>
<div style="left:1769px;top:409px;width:1px;height:16px;background:#f0f0f0;"></div>
<div style="left:1649px;top:409px;width:120px;height:15px;background:#3c96f5;"></div>
<div style="left:1634px;top:410px;width:13px;height:13px;background:#fff;border:1px solid #3c3c3c;"></div>
<svg style="position:absolute;left:1636px;top:412px;" width="9" height="9" viewBox="0 0 9 9"><path d="M1 4.5L3.5 7.5L8 1.5" stroke="#000" stroke-width="2" fill="none"/></svg>
<div class="t" style="left:1650px;top:411.00px;font-size:11px;line-height:11px;color:#fff;font-family:'Liberation Sans',sans-serif;font-weight:normal;transform:scaleX(0.8900);transform-origin:0 0;">ADMIN</div>
<div style="left:1631px;top:425px;width:138px;height:16px;border-bottom:1px solid #f0f0f0;"></div>
<div style="left:1649px;top:425px;width:1px;height:16px;background:#f0f0f0;"></div>
<div style="left:1769px;top:425px;width:1px;height:16px;background:#f0f0f0;"></div>
<div style="left:1634px;top:426px;width:13px;height:13px;background:#fff;border:1px solid #3c3c3c;"></div>
<div class="t" style="left:1650px;top:427.00px;font-size:11px;line-height:11px;color:#000;font-family:'Liberation Sans',sans-serif;font-weight:normal;transform:scaleX(0.8900);transform-origin:0 0;">BBK</div>
<div style="left:1631px;top:441px;width:138px;height:16px;border-bottom:1px solid #f0f0f0;"></div>
<div style="left:1649px;top:441px;width:1px;height:16px;background:#f0f0f0;"></div>
<div style="left:1769px;top:441px;width:1px;height:16px;background:#f0f0f0;"></div>
<div style="left:1634px;top:442px;width:13px;height:13px;background:#fff;border:1px solid #3c3c3c;"></div>
<div class="t" style="left:1650px;top:443.00px;font-size:11px;line-height:11px;color:#000;font-family:'Liberation Sans',sans-serif;font-weight:normal;transform:scaleX(0.8900);transform-origin:0 0;">COW</div>
<div style="left:1631px;top:457px;width:138px;height:16px;border-bottom:1px solid #f0f0f0;"></div>
<div style="left:1649px;top:457px;width:1px;height:16px;background:#f0f0f0;"></div>
<div style="left:1769px;top:457px;width:1px;height:16px;background:#f0f0f0;"></div>
<div style="left:1634px;top:458px;width:13px;height:13px;background:#fff;border:1px solid #3c3c3c;"></div>
<div class="t" style="left:1650px;top:459.00px;font-size:11px;line-height:11px;color:#000;font-family:'Liberation Sans',sans-serif;font-weight:normal;">db2admin</div>
<div style="left:1631px;top:473px;width:138px;height:16px;border-bottom:1px solid #f0f0f0;"></div>
<div style="left:1649px;top:473px;width:1px;height:16px;background:#f0f0f0;"></div>
<div style="left:1769px;top:473px;width:1px;height:16px;background:#f0f0f0;"></div>
<div style="left:1634px;top:474px;width:13px;height:13px;background:#fff;border:1px solid #3c3c3c;"></div>
<div class="t" style="left:1650px;top:475.00px;font-size:11px;line-height:11px;color:#000;font-family:'Liberation Sans',sans-serif;font-weight:normal;transform:scaleX(0.9019);transform-origin:0 0;">DB2ADMIN</div>
<div style="left:1631px;top:489px;width:138px;height:16px;border-bottom:1px solid #f0f0f0;"></div>
<div style="left:1649px;top:489px;width:1px;height:16px;background:#f0f0f0;"></div>
<div style="left:1769px;top:489px;width:1px;height:16px;background:#f0f0f0;"></div>
<div style="left:1634px;top:490px;width:13px;height:13px;background:#fff;border:1px solid #3c3c3c;"></div>
<div class="t" style="left:1650px;top:491.00px;font-size:11px;line-height:11px;color:#000;font-family:'Liberation Sans',sans-serif;font-weight:normal;">dbo</div>
<div style="left:1631px;top:505px;width:138px;height:16px;border-bottom:1px solid #f0f0f0;"></div>
<div style="left:1649px;top:505px;width:1px;height:16px;background:#f0f0f0;"></div>
<div style="left:1769px;top:505px;width:1px;height:16px;background:#f0f0f0;"></div>
<div style="left:1634px;top:506px;width:13px;height:13px;background:#fff;border:1px solid #3c3c3c;"></div>
<div class="t" style="left:1650px;top:507.00px;font-size:11px;line-height:11px;color:#000;font-family:'Liberation Sans',sans-serif;font-weight:normal;">dev</div>
<div style="left:1631px;top:521px;width:138px;height:16px;border-bottom:1px solid #f0f0f0;"></div>
<div style="left:1649px;top:521px;width:1px;height:16px;background:#f0f0f0;"></div>
<div style="left:1769px;top:521px;width:1px;height:16px;background:#f0f0f0;"></div>
<div style="left:1634px;top:522px;width:13px;height:13px;background:#fff;border:1px solid #3c3c3c;"></div>
<div class="t" style="left:1650px;top:523.00px;font-size:11px;line-height:11px;color:#000;font-family:'Liberation Sans',sans-serif;font-weight:normal;">dev1</div>
<div style="left:1631px;top:537px;width:138px;height:16px;border-bottom:1px solid #f0f0f0;"></div>
<div style="left:1649px;top:537px;width:1px;height:16px;background:#f0f0f0;"></div>
<div style="left:1769px;top:537px;width:1px;height:16px;background:#f0f0f0;"></div>
<div style="left:1634px;top:538px;width:13px;height:13px;background:#fff;border:1px solid #3c3c3c;"></div>
<div class="t" style="left:1650px;top:539.00px;font-size:11px;line-height:11px;color:#000;font-family:'Liberation Sans',sans-serif;font-weight:normal;transform:scaleX(0.8900);transform-origin:0 0;">GIM</div>
<div style="left:1631px;top:553px;width:138px;height:16px;border-bottom:1px solid #f0f0f0;"></div>
<div style="left:1649px;top:553px;width:1px;height:16px;background:#f0f0f0;"></div>
<div style="left:1769px;top:553px;width:1px;height:16px;background:#f0f0f0;"></div>
<div style="left:1634px;top:554px;width:13px;height:13px;background:#fff;border:1px solid #3c3c3c;"></div>
<div class="t" style="left:1650px;top:555.00px;font-size:11px;line-height:11px;color:#000;font-family:'Liberation Sans',sans-serif;font-weight:normal;transform:scaleX(0.9036);transform-origin:0 0;">GIM_DEV</div>
<div style="left:1631px;top:569px;width:138px;height:16px;border-bottom:1px solid #f0f0f0;"></div>
<div style="left:1649px;top:569px;width:1px;height:16px;background:#f0f0f0;"></div>
<div style="left:1769px;top:569px;width:1px;height:16px;background:#f0f0f0;"></div>
<div style="left:1634px;top:570px;width:13px;height:13px;background:#fff;border:1px solid #3c3c3c;"></div>
<div class="t" style="left:1650px;top:571.00px;font-size:11px;line-height:11px;color:#000;font-family:'Liberation Sans',sans-serif;font-weight:normal;transform:scaleX(0.8900);transform-origin:0 0;">IDERACA</div>
<div style="left:1876px;top:408px;width:17px;height:177px;background:#f0f0f0;"></div>
<svg style="position:absolute;left:1880px;top:414px;" width="9" height="6" viewBox="0 0 9 6"><path d="M0.5 5L4.5 1L8.5 5" stroke="#555" stroke-width="1.4" fill="none"/></svg>
<div style="left:1877px;top:426px;width:15px;height:37px;background:#cdcdcd;"></div>
<svg style="position:absolute;left:1880px;top:572px;" width="9" height="6" viewBox="0 0 9 6"><path d="M0.5 1L4.5 5L8.5 1" stroke="#555" stroke-width="1.4" fill="none"/></svg>
<div style="left:1911px;top:344px;width:280px;height:248px;border:1px solid #d0d0d0;box-shadow:inset 1px 1px 0 #fff;"></div>
<div style="left:1917px;top:338px;width:65px;height:12px;background:#f0f0f0;"></div>
<div class="t" style="left:1920.5px;top:340.00px;font-size:11px;line-height:11px;color:#000;font-family:'Liberation Sans',sans-serif;font-weight:normal;transform:scaleX(0.9852);transform-origin:0 0;">Object Type</div>
<div style="left:1921px;top:355px;width:22px;height:23px;background:linear-gradient(#f6f6f6,#e6e6e6);border:1px solid #a8a8a8;"></div>
<svg style="position:absolute;left:1921px;top:355px;" width="22" height="23" viewBox="0 0 22 23"><rect x="7.6" y="3.6" width="11" height="13.4" fill="#fff" stroke="#3a88c8" stroke-width="1.1"/><path d="M9.7 5V8.6H14.6M11 11.6H14.6M11 14.6H14.6" fill="none" stroke="#3aa060" stroke-width="1.1"/><rect x="16" y="8" width="1.2" height="1.2" fill="#3aa060"/><rect x="16" y="11" width="1.2" height="1.2" fill="#3aa060"/><rect x="16" y="14" width="1.2" height="1.2" fill="#3aa060"/><rect x="4" y="10" width="7" height="7.6" fill="#10a040"/><path d="M5.2 13.6L7 16L10 11" stroke="#fff" stroke-width="1.3" fill="none"/></svg>
<div style="left:1947px;top:355px;width:22px;height:23px;background:linear-gradient(#f6f6f6,#e6e6e6);border:1px solid #a8a8a8;"></div>
<svg style="position:absolute;left:1947px;top:355px;" width="22" height="23" viewBox="0 0 22 23"><rect x="7.6" y="3.6" width="11" height="13.4" fill="#fff" stroke="#3a88c8" stroke-width="1.1"/><path d="M9.7 5V8.6H14.6M11 11.6H14.6M11 14.6H14.6" fill="none" stroke="#3aa060" stroke-width="1.1"/><rect x="16" y="8" width="1.2" height="1.2" fill="#3aa060"/><rect x="16" y="11" width="1.2" height="1.2" fill="#3aa060"/><rect x="16" y="14" width="1.2" height="1.2" fill="#3aa060"/><rect x="4" y="10" width="7" height="7.6" fill="#e00020"/><path d="M5.5 11.6L9.5 16M9.5 11.6L5.5 16" stroke="#fff" stroke-width="1.3"/></svg>
<div style="left:1973px;top:355px;width:22px;height:23px;background:linear-gradient(#f6f6f6,#e6e6e6);border:1px solid #a8a8a8;"></div>
<svg style="position:absolute;left:1973px;top:355px;" width="22" height="23" viewBox="0 0 22 23"><rect x="7.6" y="3.6" width="11" height="13.4" fill="#fff" stroke="#3a88c8" stroke-width="1.1"/><path d="M9.7 5V8.6H14.6M11 11.6H14.6M11 14.6H14.6" fill="none" stroke="#3aa060" stroke-width="1.1"/><rect x="16" y="8" width="1.2" height="1.2" fill="#3aa060"/><rect x="16" y="11" width="1.2" height="1.2" fill="#3aa060"/><rect x="16" y="14" width="1.2" height="1.2" fill="#3aa060"/><path d="M7.5 11V17.2M5.2 14.8L7.5 17.4L9.8 14.8" stroke="#10a040" stroke-width="1.6" fill="none"/><path d="M11.5 16.5V9.6M9.3 12L11.5 9.3L13.7 12" stroke="#e00020" stroke-width="1.6" fill="none"/></svg>
<div style="left:1920px;top:383px;width:264px;height:203px;background:#fff;border:1px solid #828790;"></div>
<div style="left:1921px;top:384px;width:262px;height:24px;background:#f0f0f0;"></div>
<div style="left:1921px;top:384px;width:18px;height:24px;background:#fbfbfb;border-right:1px solid #e5eaf0;"></div>
<div style="left:1939px;top:384px;width:19px;height:24px;background:#fbfbfb;border-right:1px solid #e5eaf0;"></div>
<div style="left:1958px;top:384px;width:150px;height:24px;background:#fbfbfb;border-right:1px solid #e5eaf0;border-bottom:1px solid #e5eaf0;"></div>
<div class="t" style="left:1963px;top:392.00px;font-size:11px;line-height:11px;color:#000;font-family:'Liberation Sans',sans-serif;font-weight:normal;transform:scaleX(1.0373);transform-origin:0 0;">Object</div>
<div style="left:1921px;top:409px;width:187px;height:16px;border-bottom:1px solid #f0f0f0;"></div>
<div style="left:1938px;top:409px;width:1px;height:16px;background:#f0f0f0;"></div>
<div style="left:1958px;top:409px;width:1px;height:16px;background:#f0f0f0;"></div>
<div style="left:2108px;top:409px;width:1px;height:16px;background:#f0f0f0;"></div>
<svg style="position:absolute;left:1922px;top:410px;" width="16" height="15" viewBox="0 0 16 15"><circle cx="6" cy="3" r="2" fill="#e8b080"/><rect x="3" y="5" width="6" height="5" fill="#3a80c8"/><rect x="6" y="7" width="9" height="6" fill="#fff" stroke="#3a80c8"/><rect x="6" y="7" width="9" height="2" fill="#3a80c8"/></svg>
<div style="left:1943px;top:410px;width:13px;height:13px;background:#fff;border:1px solid #3c3c3c;"></div>
<svg style="position:absolute;left:1945px;top:412px;" width="9" height="9" viewBox="0 0 9 9"><path d="M1 4.5L3.5 7.5L8 1.5" stroke="#000" stroke-width="2" fill="none"/></svg>
<div class="t" style="left:1959px;top:411.00px;font-size:11px;line-height:11px;color:#000;font-family:'Liberation Sans',sans-serif;font-weight:normal;transform:scaleX(0.9793);transform-origin:0 0;">User Defined Data Types</div>
<div style="left:1921px;top:425px;width:187px;height:16px;border-bottom:1px solid #f0f0f0;"></div>
<div style="left:1938px;top:425px;width:1px;height:16px;background:#f0f0f0;"></div>
<div style="left:1958px;top:425px;width:1px;height:16px;background:#f0f0f0;"></div>
<div style="left:2108px;top:425px;width:1px;height:16px;background:#f0f0f0;"></div>
<svg style="position:absolute;left:1922px;top:426px;" width="16" height="15" viewBox="0 0 16 15"><text x="0" y="9" font-size="7" fill="#333" font-family="Liberation Sans">1</text><text x="3" y="12" font-size="7" fill="#333" font-family="Liberation Sans">2</text><text x="7" y="15" font-size="7" fill="#333" font-family="Liberation Sans">3</text><path d="M6 3Q10 0 13 4L10 7" fill="#f0b050" stroke="#c08020"/></svg>
<div style="left:1943px;top:426px;width:13px;height:13px;background:#fff;border:1px solid #3c3c3c;"></div>
<svg style="position:absolute;left:1945px;top:428px;" width="9" height="9" viewBox="0 0 9 9"><path d="M1 4.5L3.5 7.5L8 1.5" stroke="#000" stroke-width="2" fill="none"/></svg>
<div class="t" style="left:1959px;top:427.00px;font-size:11px;line-height:11px;color:#000;font-family:'Liberation Sans',sans-serif;font-weight:normal;transform:scaleX(0.9853);transform-origin:0 0;">Sequences</div>
<div style="left:1921px;top:441px;width:187px;height:16px;border-bottom:1px solid #f0f0f0;"></div>
<div style="left:1938px;top:441px;width:1px;height:16px;background:#f0f0f0;"></div>
<div style="left:1958px;top:441px;width:1px;height:16px;background:#f0f0f0;"></div>
<div style="left:2108px;top:441px;width:1px;height:16px;background:#f0f0f0;"></div>
<svg style="position:absolute;left:1922px;top:442px;" width="16" height="15" viewBox="0 0 16 15"><rect x="0.5" y="1.5" width="13" height="12" fill="#fff" stroke="#8a8a8a"/><rect x="0.5" y="1.5" width="13" height="2.5" fill="#4a9ee8"/><path d="M0.5 7H13.5M0.5 10H13.5M5 4V13.5M9 4V13.5" stroke="#9a9a9a"/></svg>
<div style="left:1943px;top:442px;width:13px;height:13px;background:#fff;border:1px solid #3c3c3c;"></div>
<svg style="position:absolute;left:1945px;top:444px;" width="9" height="9" viewBox="0 0 9 9"><path d="M1 4.5L3.5 7.5L8 1.5" stroke="#000" stroke-width="2" fill="none"/></svg>
<div class="t" style="left:1959px;top:443.00px;font-size:11px;line-height:11px;color:#000;font-family:'Liberation Sans',sans-serif;font-weight:normal;transform:scaleX(1.0151);transform-origin:0 0;">Tables</div>
<div style="left:1921px;top:457px;width:187px;height:16px;border-bottom:1px solid #f0f0f0;"></div>
<div style="left:1938px;top:457px;width:1px;height:16px;background:#f0f0f0;"></div>
<div style="left:1958px;top:457px;width:1px;height:16px;background:#f0f0f0;"></div>
<div style="left:2108px;top:457px;width:1px;height:16px;background:#f0f0f0;"></div>
<svg style="position:absolute;left:1922px;top:458px;" width="16" height="15" viewBox="0 0 16 15"><circle cx="4" cy="10" r="3" fill="none" stroke="#3a80c8" stroke-width="1.3"/><circle cx="12" cy="10" r="3" fill="none" stroke="#3a80c8" stroke-width="1.3"/><path d="M1 9L3 4M15 9L13 4M7 10H9" stroke="#3a80c8" stroke-width="1.2"/></svg>
<div style="left:1943px;top:458px;width:13px;height:13px;background:#fff;border:1px solid #3c3c3c;"></div>
<svg style="position:absolute;left:1945px;top:460px;" width="9" height="9" viewBox="0 0 9 9"><path d="M1 4.5L3.5 7.5L8 1.5" stroke="#000" stroke-width="2" fill="none"/></svg>
<div class="t" style="left:1959px;top:459.00px;font-size:11px;line-height:11px;color:#000;font-family:'Liberation Sans',sans-serif;font-weight:normal;transform:scaleX(0.9792);transform-origin:0 0;">Views</div>
<div style="left:1921px;top:473px;width:187px;height:16px;border-bottom:1px solid #f0f0f0;"></div>
<div style="left:1938px;top:473px;width:1px;height:16px;background:#f0f0f0;"></div>
<div style="left:1958px;top:473px;width:1px;height:16px;background:#f0f0f0;"></div>
<div style="left:2108px;top:473px;width:1px;height:16px;background:#f0f0f0;"></div>
<svg style="position:absolute;left:1922px;top:474px;" width="16" height="15" viewBox="0 0 16 15"><rect x="0.5" y="1.5" width="12" height="12" fill="#fff" stroke="#8a8a8a"/><rect x="0.5" y="1.5" width="12" height="2.5" fill="#4a9ee8"/><path d="M0.5 7H12.5M0.5 10H12.5M4 4V13.5" stroke="#9a9a9a"/><path d="M8 9H12V7L16 11L12 15V13H8Z" fill="#f0c040" stroke="#c09020"/></svg>
<div style="left:1943px;top:474px;width:13px;height:13px;background:#fff;border:1px solid #3c3c3c;"></div>
<svg style="position:absolute;left:1945px;top:476px;" width="9" height="9" viewBox="0 0 9 9"><path d="M1 4.5L3.5 7.5L8 1.5" stroke="#000" stroke-width="2" fill="none"/></svg>
<div class="t" style="left:1959px;top:475.00px;font-size:11px;line-height:11px;color:#000;font-family:'Liberation Sans',sans-serif;font-weight:normal;transform:scaleX(0.9824);transform-origin:0 0;">Materialized Views</div>
<div style="left:1921px;top:489px;width:187px;height:16px;border-bottom:1px solid #f0f0f0;"></div>
<div style="left:1938px;top:489px;width:1px;height:16px;background:#f0f0f0;"></div>
<div style="left:1958px;top:489px;width:1px;height:16px;background:#f0f0f0;"></div>
<div style="left:2108px;top:489px;width:1px;height:16px;background:#f0f0f0;"></div>
<svg style="position:absolute;left:1922px;top:490px;" width="16" height="15" viewBox="0 0 16 15"><rect x="0.5" y="1.5" width="13" height="12" fill="#fff" stroke="#8a8a8a"/><rect x="0.5" y="1.5" width="13" height="2.5" fill="#4a9ee8"/><circle cx="5" cy="11" r="2.5" fill="none" stroke="#3a80c8" stroke-width="1.2"/><circle cx="11" cy="11" r="2.5" fill="none" stroke="#3a80c8" stroke-width="1.2"/></svg>
<div style="left:1943px;top:490px;width:13px;height:13px;background:#fff;border:1px solid #3c3c3c;"></div>
<svg style="position:absolute;left:1945px;top:492px;" width="9" height="9" viewBox="0 0 9 9"><path d="M1 4.5L3.5 7.5L8 1.5" stroke="#000" stroke-width="2" fill="none"/></svg>
<div class="t" style="left:1959px;top:491.00px;font-size:11px;line-height:11px;color:#000;font-family:'Liberation Sans',sans-serif;font-weight:normal;transform:scaleX(0.9772);transform-origin:0 0;">Aliases</div>
<div style="left:1921px;top:505px;width:187px;height:16px;border-bottom:1px solid #f0f0f0;"></div>
<div style="left:1938px;top:505px;width:1px;height:16px;background:#f0f0f0;"></div>
<div style="left:1958px;top:505px;width:1px;height:16px;background:#f0f0f0;"></div>
<div style="left:2108px;top:505px;width:1px;height:16px;background:#f0f0f0;"></div>
<svg style="position:absolute;left:1922px;top:506px;" width="16" height="15" viewBox="0 0 16 15"><rect x="3.5" y="1.5" width="11" height="10" fill="#fff" stroke="#8a8a8a"/><rect x="3.5" y="1.5" width="11" height="2" fill="#4a9ee8"/><rect x="0.5" y="7.5" width="8" height="7" fill="#fff" stroke="#c08040"/><path d="M2 10H7M2 12H7" stroke="#3a80c8"/><path d="M6 10L14 2" stroke="#40a040" stroke-width="2.2"/></svg>
<div style="left:1943px;top:506px;width:13px;height:13px;background:#fff;border:1px solid #3c3c3c;"></div>
<svg style="position:absolute;left:1945px;top:508px;" width="9" height="9" viewBox="0 0 9 9"><path d="M1 4.5L3.5 7.5L8 1.5" stroke="#000" stroke-width="2" fill="none"/></svg>
<div class="t" style="left:1959px;top:507.00px;font-size:11px;line-height:11px;color:#000;font-family:'Liberation Sans',sans-serif;font-weight:normal;transform:scaleX(0.9824);transform-origin:0 0;">Stored Procedures</div>
<div style="left:1921px;top:521px;width:187px;height:16px;border-bottom:1px solid #f0f0f0;"></div>
<div style="left:1938px;top:521px;width:1px;height:16px;background:#f0f0f0;"></div>
<div style="left:1958px;top:521px;width:1px;height:16px;background:#f0f0f0;"></div>
<div style="left:2108px;top:521px;width:1px;height:16px;background:#f0f0f0;"></div>
<svg style="position:absolute;left:1922px;top:522px;" width="16" height="15" viewBox="0 0 16 15"><circle cx="6" cy="3" r="2" fill="#e8b080"/><rect x="3" y="5" width="6" height="6" fill="#3a80c8"/><text x="8" y="14" font-size="8" fill="#333" font-family="Liberation Sans" font-style="italic">fx</text></svg>
<div style="left:1943px;top:522px;width:13px;height:13px;background:#fff;border:1px solid #3c3c3c;"></div>
<svg style="position:absolute;left:1945px;top:524px;" width="9" height="9" viewBox="0 0 9 9"><path d="M1 4.5L3.5 7.5L8 1.5" stroke="#000" stroke-width="2" fill="none"/></svg>
<div class="t" style="left:1959px;top:523.00px;font-size:11px;line-height:11px;color:#000;font-family:'Liberation Sans',sans-serif;font-weight:normal;transform:scaleX(0.9784);transform-origin:0 0;">User Defined Functions</div>
<div style="left:1921px;top:537px;width:187px;height:16px;border-bottom:1px solid #f0f0f0;"></div>
<div style="left:1938px;top:537px;width:1px;height:16px;background:#f0f0f0;"></div>
<div style="left:1958px;top:537px;width:1px;height:16px;background:#f0f0f0;"></div>
<div style="left:2108px;top:537px;width:1px;height:16px;background:#f0f0f0;"></div>
<svg style="position:absolute;left:1922px;top:538px;" width="16" height="15" viewBox="0 0 16 15"><path d="M5 0H11L8 3Z" fill="#1a4a90"/><rect x="1.5" y="4.5" width="12" height="10" fill="#fff" stroke="#8a8a8a"/><rect x="1.5" y="4.5" width="12" height="2" fill="#4a9ee8"/><path d="M7.5 6V14.5" stroke="#9a9a9a"/><rect x="7" y="8" width="1" height="1" fill="#333"/><rect x="7" y="11" width="1" height="1" fill="#333"/></svg>
<div style="left:1943px;top:538px;width:13px;height:13px;background:#fff;border:1px solid #3c3c3c;"></div>
<svg style="position:absolute;left:1945px;top:540px;" width="9" height="9" viewBox="0 0 9 9"><path d="M1 4.5L3.5 7.5L8 1.5" stroke="#000" stroke-width="2" fill="none"/></svg>
<div class="t" style="left:1959px;top:539.00px;font-size:11px;line-height:11px;color:#000;font-family:'Liberation Sans',sans-serif;font-weight:normal;">Indexes</div>
<div style="left:1921px;top:553px;width:187px;height:16px;border-bottom:1px solid #f0f0f0;"></div>
<div style="left:1938px;top:553px;width:1px;height:16px;background:#f0f0f0;"></div>
<div style="left:1958px;top:553px;width:1px;height:16px;background:#f0f0f0;"></div>
<div style="left:2108px;top:553px;width:1px;height:16px;background:#f0f0f0;"></div>
<svg style="position:absolute;left:1922px;top:554px;" width="16" height="15" viewBox="0 0 16 15"><rect x="3.5" y="0.5" width="11" height="11" fill="#fff" stroke="#8a8a8a"/><path d="M3.5 6H14.5M9 0.5V11.5" stroke="#9a9a9a"/><path d="M8 3L12 7L10 8" stroke="#333" fill="none"/><circle cx="4" cy="11" r="3.5" fill="#60d060" stroke="#30a030"/></svg>
<div style="left:1943px;top:554px;width:13px;height:13px;background:#fff;border:1px solid #3c3c3c;"></div>
<svg style="position:absolute;left:1945px;top:556px;" width="9" height="9" viewBox="0 0 9 9"><path d="M1 4.5L3.5 7.5L8 1.5" stroke="#000" stroke-width="2" fill="none"/></svg>
<div class="t" style="left:1959px;top:555.00px;font-size:11px;line-height:11px;color:#000;font-family:'Liberation Sans',sans-serif;font-weight:normal;">Triggers</div>
<div style="left:2201px;top:344px;width:308px;height:68px;border:1px solid #d0d0d0;box-shadow:inset 1px 1px 0 #fff;"></div>
<div style="left:2207px;top:338px;width:56px;height:12px;background:#f0f0f0;"></div>
<div class="t" style="left:2210.5px;top:340.00px;font-size:11px;line-height:11px;color:#000;font-family:'Liberation Sans',sans-serif;font-weight:normal;transform:scaleX(0.9841);transform-origin:0 0;">Search for</div>
<div style="left:2210px;top:354px;width:148px;height:23px;background:#fff;border:1px solid #a9a9a9;"></div>
<div class="t" style="left:2213px;top:360.00px;font-size:11.5px;line-height:11.5px;color:#000;font-family:'Liberation Sans',sans-serif;font-weight:normal;transform:scaleX(0.8900);transform-origin:0 0;">AQ</div>
<div style="left:2364px;top:355px;width:63px;height:21px;background:linear-gradient(#f4f4f4,#e2e2e2);border:1px solid #adadad;"></div>
<div class="t" style="left:2380px;top:361.00px;font-size:11px;line-height:11px;color:#000;font-family:'Liberation Sans',sans-serif;font-weight:normal;transform:scaleX(0.8889);transform-origin:0 0;">Search</div>
<div style="left:2434px;top:355px;width:67px;height:21px;background:linear-gradient(#f4f4f4,#e2e2e2);border:1px solid #adadad;"></div>
<div class="t" style="left:2449px;top:361.00px;font-size:11px;line-height:11px;color:#000;font-family:'Liberation Sans',sans-serif;font-weight:normal;transform:scaleX(0.9745);transform-origin:0 0;">Append</div>
<div style="left:2210px;top:382px;width:148px;height:23px;background:#fff;border:1px solid #a9a9a9;"></div>
<div class="t" style="left:2213.5px;top:388.00px;font-size:11px;line-height:11px;color:#000;font-family:'Liberation Sans',sans-serif;font-weight:normal;transform:scaleX(1.0279);transform-origin:0 0;">Starts With Text</div>
<svg style="position:absolute;left:2345px;top:392px;" width="9" height="6" viewBox="0 0 9 6"><path d="M0.5 0.5L4 4L7.5 0.5" stroke="#555" stroke-width="1.4" fill="none"/></svg>
<div style="left:2367px;top:387px;width:13px;height:13px;background:#fff;border:1px solid #3c3c3c;"></div>
<svg style="position:absolute;left:2369px;top:389px;" width="9" height="9" viewBox="0 0 9 9"><path d="M1 4.5L3.5 7.5L8 1.5" stroke="#000" stroke-width="2" fill="none"/></svg>
<div class="t" style="left:2384px;top:389.00px;font-size:11px;line-height:11px;color:#000;font-family:'Liberation Sans',sans-serif;font-weight:normal;transform:scaleX(0.9536);transform-origin:0 0;">Case Sensitive</div>
<div style="left:2201px;top:422px;width:165px;height:170px;border:1px solid #d0d0d0;box-shadow:inset 1px 1px 0 #fff;"></div>
<div style="left:2207px;top:416px;width:70px;height:12px;background:#f0f0f0;"></div>
<div class="t" style="left:2210.5px;top:418.00px;font-size:11px;line-height:11px;color:#000;font-family:'Liberation Sans',sans-serif;font-weight:normal;transform:scaleX(0.9749);transform-origin:0 0;">Object Search</div>
<div style="left:2219px;top:437px;width:13px;height:13px;background:#fff;border:1px solid #3c3c3c;"></div>
<svg style="position:absolute;left:2221px;top:439px;" width="9" height="9" viewBox="0 0 9 9"><path d="M1 4.5L3.5 7.5L8 1.5" stroke="#000" stroke-width="2" fill="none"/></svg>
<div class="t" style="left:2235.5px;top:438.00px;font-size:11px;line-height:11px;color:#000;font-family:'Liberation Sans',sans-serif;font-weight:normal;transform:scaleX(0.9740);transform-origin:0 0;">Object Names</div>
<div style="left:2219px;top:462px;width:13px;height:13px;background:#fff;border:1px solid #3c3c3c;"></div>
<svg style="position:absolute;left:2221px;top:464px;" width="9" height="9" viewBox="0 0 9 9"><path d="M1 4.5L3.5 7.5L8 1.5" stroke="#000" stroke-width="2" fill="none"/></svg>
<div class="t" style="left:2235.5px;top:463.00px;font-size:11px;line-height:11px;color:#000;font-family:'Liberation Sans',sans-serif;font-weight:normal;transform:scaleX(0.9770);transform-origin:0 0;">Column Names</div>
<div style="left:2219px;top:487px;width:13px;height:13px;background:#fff;border:1px solid #3c3c3c;"></div>
<div class="t" style="left:2235.5px;top:488.00px;font-size:11px;line-height:11px;color:#000;font-family:'Liberation Sans',sans-serif;font-weight:normal;transform:scaleX(0.9835);transform-origin:0 0;">Index Columns</div>
<div style="left:2219px;top:512px;width:13px;height:13px;background:#fff;border:1px solid #3c3c3c;"></div>
<div class="t" style="left:2235.5px;top:513.00px;font-size:11px;line-height:11px;color:#000;font-family:'Liberation Sans',sans-serif;font-weight:normal;transform:scaleX(0.9819);transform-origin:0 0;">Constraint Columns</div>
<div style="left:2219px;top:562px;width:13px;height:13px;background:#fff;border:1px solid #3c3c3c;"></div>
<div class="t" style="left:2235.5px;top:563.00px;font-size:11px;line-height:11px;color:#000;font-family:'Liberation Sans',sans-serif;font-weight:normal;transform:scaleX(0.9820);transform-origin:0 0;">Include System Objects</div>
<div style="left:2372px;top:422px;width:137px;height:170px;border:1px solid #d0d0d0;box-shadow:inset 1px 1px 0 #fff;"></div>
<div style="left:2378px;top:416px;width:70px;height:12px;background:#f0f0f0;"></div>
<div class="t" style="left:2381.5px;top:418.00px;font-size:11px;line-height:11px;color:#000;font-family:'Liberation Sans',sans-serif;font-weight:normal;transform:scaleX(0.9778);transform-origin:0 0;">Source Search</div>
<div style="left:2390px;top:437px;width:13px;height:13px;background:#fff;border:1px solid #3c3c3c;"></div>
<svg style="position:absolute;left:2392px;top:439px;" width="9" height="9" viewBox="0 0 9 9"><path d="M1 4.5L3.5 7.5L8 1.5" stroke="#000" stroke-width="2" fill="none"/></svg>
<div class="t" style="left:2406px;top:438.00px;font-size:11px;line-height:11px;color:#000;font-family:'Liberation Sans',sans-serif;font-weight:normal;transform:scaleX(0.9818);transform-origin:0 0;">Procedure Source</div>
<div style="left:2390px;top:462px;width:13px;height:13px;background:#fff;border:1px solid #3c3c3c;"></div>
<div class="t" style="left:2406px;top:463.00px;font-size:11px;line-height:11px;color:#000;font-family:'Liberation Sans',sans-serif;font-weight:normal;transform:scaleX(0.9842);transform-origin:0 0;">Trigger Source</div>
<div style="left:2390px;top:487px;width:13px;height:13px;background:#fff;border:1px solid #3c3c3c;"></div>
<svg style="position:absolute;left:2392px;top:489px;" width="9" height="9" viewBox="0 0 9 9"><path d="M1 4.5L3.5 7.5L8 1.5" stroke="#000" stroke-width="2" fill="none"/></svg>
<div class="t" style="left:2406px;top:488.00px;font-size:11px;line-height:11px;color:#000;font-family:'Liberation Sans',sans-serif;font-weight:normal;transform:scaleX(0.9771);transform-origin:0 0;">View Source</div>
<div style="left:2348px;top:603px;width:162px;height:22px;background:#fff;border:1px solid #a9a9a9;"></div>
<svg style="position:absolute;left:2351px;top:608px;" width="17" height="13" viewBox="0 0 17 13"><circle cx="5.5" cy="5.5" r="4" fill="none" stroke="#888" stroke-width="1.5"/><path d="M8.5 8.5L11.5 11.5" stroke="#888" stroke-width="2"/><path d="M12 5H16L14 7Z" fill="#888"/></svg>
<div style="left:1330px;top:625px;width:1183px;height:387px;background:#fff;border:1px solid #828790;"></div>
<div style="left:1331px;top:626px;width:1182px;height:24px;background:#f0f0f0;"></div>
<div style="left:1331px;top:626px;width:49px;height:24px;background:#eef3fb;border-right:1px solid #fff;"></div>
<div style="left:1381px;top:626px;width:24px;height:24px;background:#fbfbfb;border-right:1px solid #e5eaf0;border-bottom:1px solid #e5eaf0;"></div>
<div style="left:1405px;top:626px;width:231px;height:24px;background:#fbfbfb;border-right:1px solid #e5eaf0;border-bottom:1px solid #e5eaf0;"></div>
<div style="left:1636px;top:626px;width:157px;height:24px;background:#fbfbfb;border-right:1px solid #e5eaf0;border-bottom:1px solid #e5eaf0;"></div>
<div style="left:1793px;top:626px;width:206px;height:24px;background:#fbfbfb;border-right:1px solid #e5eaf0;border-bottom:1px solid #e5eaf0;"></div>
<div style="left:1999px;top:626px;width:207px;height:24px;background:#fbfbfb;border-right:1px solid #e5eaf0;border-bottom:1px solid #e5eaf0;"></div>
<div style="left:2206px;top:626px;width:181px;height:24px;background:#fbfbfb;border-right:1px solid #e5eaf0;border-bottom:1px solid #e5eaf0;"></div>
<div style="left:2387px;top:626px;width:107px;height:24px;background:#fbfbfb;border-right:1px solid #e5eaf0;border-bottom:1px solid #e5eaf0;"></div>
<div class="t" style="left:1410.5px;top:634.00px;font-size:11px;line-height:11px;color:#000;font-family:'Liberation Sans',sans-serif;font-weight:normal;transform:scaleX(0.9743);transform-origin:0 0;">Object Name/Source</div>
<div class="t" style="left:1641px;top:634.00px;font-size:11px;line-height:11px;color:#000;font-family:'Liberation Sans',sans-serif;font-weight:normal;transform:scaleX(0.9852);transform-origin:0 0;">Object Type</div>
<div class="t" style="left:1798px;top:634.00px;font-size:11px;line-height:11px;color:#000;font-family:'Liberation Sans',sans-serif;font-weight:normal;transform:scaleX(0.9751);transform-origin:0 0;">Parent</div>
<div class="t" style="left:2004px;top:634.00px;font-size:11px;line-height:11px;color:#000;font-family:'Liberation Sans',sans-serif;font-weight:normal;transform:scaleX(0.9770);transform-origin:0 0;">Related</div>
<div class="t" style="left:2211px;top:634.00px;font-size:11px;line-height:11px;color:#000;font-family:'Liberation Sans',sans-serif;font-weight:normal;transform:scaleX(0.9709);transform-origin:0 0;">Owner</div>
<div class="t" style="left:2392px;top:634.00px;font-size:11px;line-height:11px;color:#000;font-family:'Liberation Sans',sans-serif;font-weight:normal;transform:scaleX(0.9815);transform-origin:0 0;">Database</div>
<div style="left:1331px;top:650px;width:49px;height:361px;background:#f0f0f0;"></div>
<div style="left:1381px;top:650px;width:1113px;height:361px;background:#fff;"></div>
<div style="left:1331px;top:650px;width:1163px;height:361px;overflow:hidden;">
<div style="left:50px;top:15px;width:1113px;height:1px;background:#efefef;"></div>
<div class="t" style="left:16.75px;top:3.00px;font-size:11px;line-height:11px;color:#000;font-family:'Liberation Sans',sans-serif;font-weight:normal;">16</div>
<svg style="position:absolute;left:52px;top:2px" width="13" height="12" viewBox="0 0 13 12"><rect x="0.5" y="0.5" width="12" height="11" fill="#fff" stroke="#8a8a8a"/><rect x="0" y="0" width="13" height="3" fill="#4aa6e8"/><path d="M0 6.5H13M0 9.5H13M4.5 3V12M8.5 3V12" stroke="#a0a0a0"/></svg>
<div class="t" style="left:76px;top:3.00px;font-size:11px;line-height:11px;color:#000;font-family:'Liberation Sans',sans-serif;font-weight:normal;transform:scaleX(0.9578);transform-origin:0 0;">AQPlainfield</div>
<div class="t" style="left:306px;top:3.00px;font-size:11px;line-height:11px;color:#000;font-family:'Liberation Sans',sans-serif;font-weight:normal;transform:scaleX(0.8900);transform-origin:0 0;">TABLE</div>
<div class="t" style="left:876px;top:3.00px;font-size:11px;line-height:11px;color:#000;font-family:'Liberation Sans',sans-serif;font-weight:normal;transform:scaleX(0.8900);transform-origin:0 0;">ADMIN</div>
<div class="t" style="left:1057px;top:3.00px;font-size:11px;line-height:11px;color:#000;font-family:'Liberation Sans',sans-serif;font-weight:normal;transform:scaleX(0.8900);transform-origin:0 0;">SAMPLE</div>
<div style="left:50px;top:31px;width:1113px;height:1px;background:#efefef;"></div>
<div class="t" style="left:16.75px;top:19.00px;font-size:11px;line-height:11px;color:#000;font-family:'Liberation Sans',sans-serif;font-weight:normal;">17</div>
<svg style="position:absolute;left:52px;top:18px" width="13" height="12" viewBox="0 0 13 12"><rect x="0.5" y="0.5" width="12" height="11" fill="#fff" stroke="#8a8a8a"/><rect x="0" y="0" width="13" height="3" fill="#4aa6e8"/><path d="M0 6.5H13M0 9.5H13M4.5 3V12M8.5 3V12" stroke="#a0a0a0"/></svg>
<div class="t" style="left:76px;top:19.00px;font-size:11px;line-height:11px;color:#000;font-family:'Liberation Sans',sans-serif;font-weight:normal;transform:scaleX(0.9569);transform-origin:0 0;">AQProspect</div>
<div class="t" style="left:306px;top:19.00px;font-size:11px;line-height:11px;color:#000;font-family:'Liberation Sans',sans-serif;font-weight:normal;transform:scaleX(0.8900);transform-origin:0 0;">TABLE</div>
<div class="t" style="left:876px;top:19.00px;font-size:11px;line-height:11px;color:#000;font-family:'Liberation Sans',sans-serif;font-weight:normal;transform:scaleX(0.8900);transform-origin:0 0;">ADMIN</div>
<div class="t" style="left:1057px;top:19.00px;font-size:11px;line-height:11px;color:#000;font-family:'Liberation Sans',sans-serif;font-weight:normal;transform:scaleX(0.8900);transform-origin:0 0;">SAMPLE</div>
<div style="left:50px;top:47px;width:1113px;height:1px;background:#efefef;"></div>
<div class="t" style="left:16.75px;top:35.00px;font-size:11px;line-height:11px;color:#000;font-family:'Liberation Sans',sans-serif;font-weight:normal;">18</div>
<svg style="position:absolute;left:52px;top:34px" width="13" height="12" viewBox="0 0 13 12"><rect x="0.5" y="0.5" width="12" height="11" fill="#fff" stroke="#8a8a8a"/><rect x="0" y="0" width="13" height="3" fill="#4aa6e8"/><path d="M0 6.5H13M0 9.5H13M4.5 3V12M8.5 3V12" stroke="#a0a0a0"/></svg>
<div class="t" style="left:76px;top:35.00px;font-size:11px;line-height:11px;color:#000;font-family:'Liberation Sans',sans-serif;font-weight:normal;transform:scaleX(0.9596);transform-origin:0 0;">AQRidgefield</div>
<div class="t" style="left:306px;top:35.00px;font-size:11px;line-height:11px;color:#000;font-family:'Liberation Sans',sans-serif;font-weight:normal;transform:scaleX(0.8900);transform-origin:0 0;">TABLE</div>
<div class="t" style="left:876px;top:35.00px;font-size:11px;line-height:11px;color:#000;font-family:'Liberation Sans',sans-serif;font-weight:normal;transform:scaleX(0.8900);transform-origin:0 0;">ADMIN</div>
<div class="t" style="left:1057px;top:35.00px;font-size:11px;line-height:11px;color:#000;font-family:'Liberation Sans',sans-serif;font-weight:normal;transform:scaleX(0.8900);transform-origin:0 0;">SAMPLE</div>
<div style="left:50px;top:63px;width:1113px;height:1px;background:#efefef;"></div>
<div class="t" style="left:16.75px;top:51.00px;font-size:11px;line-height:11px;color:#000;font-family:'Liberation Sans',sans-serif;font-weight:normal;">19</div>
<svg style="position:absolute;left:52px;top:50px" width="13" height="12" viewBox="0 0 13 12"><rect x="0.5" y="0.5" width="12" height="11" fill="#fff" stroke="#8a8a8a"/><rect x="0" y="0" width="13" height="3" fill="#4aa6e8"/><path d="M0 6.5H13M0 9.5H13M4.5 3V12M8.5 3V12" stroke="#a0a0a0"/></svg>
<div class="t" style="left:76px;top:51.00px;font-size:11px;line-height:11px;color:#000;font-family:'Liberation Sans',sans-serif;font-weight:normal;transform:scaleX(0.9565);transform-origin:0 0;">AQScotland</div>
<div class="t" style="left:306px;top:51.00px;font-size:11px;line-height:11px;color:#000;font-family:'Liberation Sans',sans-serif;font-weight:normal;transform:scaleX(0.8900);transform-origin:0 0;">TABLE</div>
<div class="t" style="left:876px;top:51.00px;font-size:11px;line-height:11px;color:#000;font-family:'Liberation Sans',sans-serif;font-weight:normal;transform:scaleX(0.8900);transform-origin:0 0;">ADMIN</div>
<div class="t" style="left:1057px;top:51.00px;font-size:11px;line-height:11px;color:#000;font-family:'Liberation Sans',sans-serif;font-weight:normal;transform:scaleX(0.8900);transform-origin:0 0;">SAMPLE</div>
<div style="left:50px;top:79px;width:1113px;height:1px;background:#efefef;"></div>
<div class="t" style="left:16.75px;top:67.00px;font-size:11px;line-height:11px;color:#000;font-family:'Liberation Sans',sans-serif;font-weight:normal;">20</div>
<svg style="position:absolute;left:52px;top:66px" width="13" height="12" viewBox="0 0 13 12"><rect x="0.5" y="0.5" width="12" height="11" fill="#fff" stroke="#8a8a8a"/><rect x="0" y="0" width="13" height="3" fill="#4aa6e8"/><path d="M0 6.5H13M0 9.5H13M4.5 3V12M8.5 3V12" stroke="#a0a0a0"/></svg>
<div class="t" style="left:76px;top:67.00px;font-size:11px;line-height:11px;color:#000;font-family:'Liberation Sans',sans-serif;font-weight:normal;transform:scaleX(0.9573);transform-origin:0 0;">AQSeymour</div>
<div class="t" style="left:306px;top:67.00px;font-size:11px;line-height:11px;color:#000;font-family:'Liberation Sans',sans-serif;font-weight:normal;transform:scaleX(0.8900);transform-origin:0 0;">TABLE</div>
<div class="t" style="left:876px;top:67.00px;font-size:11px;line-height:11px;color:#000;font-family:'Liberation Sans',sans-serif;font-weight:normal;transform:scaleX(0.8900);transform-origin:0 0;">ADMIN</div>
<div class="t" style="left:1057px;top:67.00px;font-size:11px;line-height:11px;color:#000;font-family:'Liberation Sans',sans-serif;font-weight:normal;transform:scaleX(0.8900);transform-origin:0 0;">SAMPLE</div>
<div style="left:50px;top:95px;width:1113px;height:1px;background:#efefef;"></div>
<div class="t" style="left:16.75px;top:83.00px;font-size:11px;line-height:11px;color:#000;font-family:'Liberation Sans',sans-serif;font-weight:normal;">21</div>
<svg style="position:absolute;left:52px;top:82px" width="13" height="12" viewBox="0 0 13 12"><rect x="0.5" y="0.5" width="12" height="11" fill="#fff" stroke="#8a8a8a"/><rect x="0" y="0" width="13" height="3" fill="#4aa6e8"/><path d="M0 6.5H13M0 9.5H13M4.5 3V12M8.5 3V12" stroke="#a0a0a0"/></svg>
<div class="t" style="left:76px;top:83.00px;font-size:11px;line-height:11px;color:#000;font-family:'Liberation Sans',sans-serif;font-weight:normal;transform:scaleX(0.9627);transform-origin:0 0;">AQStonington</div>
<div class="t" style="left:306px;top:83.00px;font-size:11px;line-height:11px;color:#000;font-family:'Liberation Sans',sans-serif;font-weight:normal;transform:scaleX(0.8900);transform-origin:0 0;">TABLE</div>
<div class="t" style="left:876px;top:83.00px;font-size:11px;line-height:11px;color:#000;font-family:'Liberation Sans',sans-serif;font-weight:normal;transform:scaleX(0.8900);transform-origin:0 0;">ADMIN</div>
<div class="t" style="left:1057px;top:83.00px;font-size:11px;line-height:11px;color:#000;font-family:'Liberation Sans',sans-serif;font-weight:normal;transform:scaleX(0.8900);transform-origin:0 0;">SAMPLE</div>
<div style="left:50px;top:111px;width:1113px;height:1px;background:#efefef;"></div>
<div class="t" style="left:16.75px;top:99.00px;font-size:11px;line-height:11px;color:#000;font-family:'Liberation Sans',sans-serif;font-weight:normal;">22</div>
<svg style="position:absolute;left:52px;top:98px" width="13" height="12" viewBox="0 0 13 12"><rect x="0.5" y="0.5" width="12" height="11" fill="#fff" stroke="#8a8a8a"/><rect x="0" y="0" width="13" height="3" fill="#4aa6e8"/><path d="M0 6.5H13M0 9.5H13M4.5 3V12M8.5 3V12" stroke="#a0a0a0"/></svg>
<div class="t" style="left:76px;top:99.00px;font-size:11px;line-height:11px;color:#000;font-family:'Liberation Sans',sans-serif;font-weight:normal;transform:scaleX(0.9649);transform-origin:0 0;">AQThomaston</div>
<div class="t" style="left:306px;top:99.00px;font-size:11px;line-height:11px;color:#000;font-family:'Liberation Sans',sans-serif;font-weight:normal;transform:scaleX(0.8900);transform-origin:0 0;">TABLE</div>
<div class="t" style="left:876px;top:99.00px;font-size:11px;line-height:11px;color:#000;font-family:'Liberation Sans',sans-serif;font-weight:normal;transform:scaleX(0.8900);transform-origin:0 0;">ADMIN</div>
<div class="t" style="left:1057px;top:99.00px;font-size:11px;line-height:11px;color:#000;font-family:'Liberation Sans',sans-serif;font-weight:normal;transform:scaleX(0.8900);transform-origin:0 0;">SAMPLE</div>
<div style="left:50px;top:127px;width:1113px;height:1px;background:#efefef;"></div>
<div class="t" style="left:16.75px;top:115.00px;font-size:11px;line-height:11px;color:#000;font-family:'Liberation Sans',sans-serif;font-weight:normal;">23</div>
<svg style="position:absolute;left:52px;top:114px" width="13" height="12" viewBox="0 0 13 12"><rect x="0.5" y="0.5" width="12" height="11" fill="#fff" stroke="#8a8a8a"/><rect x="0" y="0" width="13" height="3" fill="#4aa6e8"/><path d="M0 6.5H13M0 9.5H13M4.5 3V12M8.5 3V12" stroke="#a0a0a0"/></svg>
<div class="t" style="left:76px;top:115.00px;font-size:11px;line-height:11px;color:#000;font-family:'Liberation Sans',sans-serif;font-weight:normal;transform:scaleX(0.9518);transform-origin:0 0;">AQWarren</div>
<div class="t" style="left:306px;top:115.00px;font-size:11px;line-height:11px;color:#000;font-family:'Liberation Sans',sans-serif;font-weight:normal;transform:scaleX(0.8900);transform-origin:0 0;">TABLE</div>
<div class="t" style="left:876px;top:115.00px;font-size:11px;line-height:11px;color:#000;font-family:'Liberation Sans',sans-serif;font-weight:normal;transform:scaleX(0.8900);transform-origin:0 0;">ADMIN</div>
<div class="t" style="left:1057px;top:115.00px;font-size:11px;line-height:11px;color:#000;font-family:'Liberation Sans',sans-serif;font-weight:normal;transform:scaleX(0.8900);transform-origin:0 0;">SAMPLE</div>
<div style="left:50px;top:143px;width:1113px;height:1px;background:#efefef;"></div>
<div class="t" style="left:16.75px;top:131.00px;font-size:11px;line-height:11px;color:#000;font-family:'Liberation Sans',sans-serif;font-weight:normal;">24</div>
<svg style="position:absolute;left:52px;top:130px" width="13" height="12" viewBox="0 0 13 12"><rect x="0.5" y="0.5" width="12" height="11" fill="#fff" stroke="#8a8a8a"/><rect x="0" y="0" width="13" height="3" fill="#4aa6e8"/><path d="M0 6.5H13M0 9.5H13M4.5 3V12M8.5 3V12" stroke="#a0a0a0"/></svg>
<div class="t" style="left:76px;top:131.00px;font-size:11px;line-height:11px;color:#000;font-family:'Liberation Sans',sans-serif;font-weight:normal;transform:scaleX(0.9493);transform-origin:0 0;">AQWeston</div>
<div class="t" style="left:306px;top:131.00px;font-size:11px;line-height:11px;color:#000;font-family:'Liberation Sans',sans-serif;font-weight:normal;transform:scaleX(0.8900);transform-origin:0 0;">TABLE</div>
<div class="t" style="left:876px;top:131.00px;font-size:11px;line-height:11px;color:#000;font-family:'Liberation Sans',sans-serif;font-weight:normal;transform:scaleX(0.8900);transform-origin:0 0;">ADMIN</div>
<div class="t" style="left:1057px;top:131.00px;font-size:11px;line-height:11px;color:#000;font-family:'Liberation Sans',sans-serif;font-weight:normal;transform:scaleX(0.8900);transform-origin:0 0;">SAMPLE</div>
<div style="left:50px;top:159px;width:1113px;height:1px;background:#efefef;"></div>
<div class="t" style="left:16.75px;top:147.00px;font-size:11px;line-height:11px;color:#000;font-family:'Liberation Sans',sans-serif;font-weight:normal;">25</div>
<svg style="position:absolute;left:52px;top:146px" width="13" height="12" viewBox="0 0 13 12"><rect x="0.5" y="0.5" width="12" height="11" fill="#fff" stroke="#8a8a8a"/><rect x="0" y="0" width="13" height="3" fill="#4aa6e8"/><path d="M0 6.5H13M0 9.5H13M4.5 3V12M8.5 3V12" stroke="#a0a0a0"/></svg>
<div class="t" style="left:76px;top:147.00px;font-size:11px;line-height:11px;color:#000;font-family:'Liberation Sans',sans-serif;font-weight:normal;transform:scaleX(0.9508);transform-origin:0 0;">AQEastHaven</div>
<div class="t" style="left:306px;top:147.00px;font-size:11px;line-height:11px;color:#000;font-family:'Liberation Sans',sans-serif;font-weight:normal;transform:scaleX(0.8977);transform-origin:0 0;">TABLE_COLUMN</div>
<div class="t" style="left:463px;top:147.00px;font-size:11px;line-height:11px;color:#000;font-family:'Liberation Sans',sans-serif;font-weight:normal;transform:scaleX(0.9560);transform-origin:0 0;">AQBranford</div>
<div class="t" style="left:876px;top:147.00px;font-size:11px;line-height:11px;color:#000;font-family:'Liberation Sans',sans-serif;font-weight:normal;transform:scaleX(0.8900);transform-origin:0 0;">ADMIN</div>
<div class="t" style="left:1057px;top:147.00px;font-size:11px;line-height:11px;color:#000;font-family:'Liberation Sans',sans-serif;font-weight:normal;transform:scaleX(0.8900);transform-origin:0 0;">SAMPLE</div>
<div style="left:50px;top:175px;width:1113px;height:1px;background:#efefef;"></div>
<div class="t" style="left:16.75px;top:163.00px;font-size:11px;line-height:11px;color:#000;font-family:'Liberation Sans',sans-serif;font-weight:normal;">26</div>
<svg style="position:absolute;left:52px;top:162px" width="13" height="12" viewBox="0 0 13 12"><rect x="0.5" y="0.5" width="12" height="11" fill="#fff" stroke="#8a8a8a"/><rect x="0" y="0" width="13" height="3" fill="#4aa6e8"/><path d="M0 6.5H13M0 9.5H13M4.5 3V12M8.5 3V12" stroke="#a0a0a0"/></svg>
<div class="t" style="left:76px;top:163.00px;font-size:11px;line-height:11px;color:#000;font-family:'Liberation Sans',sans-serif;font-weight:normal;transform:scaleX(0.9658);transform-origin:0 0;">AQSouthington</div>
<div class="t" style="left:306px;top:163.00px;font-size:11px;line-height:11px;color:#000;font-family:'Liberation Sans',sans-serif;font-weight:normal;transform:scaleX(0.8977);transform-origin:0 0;">TABLE_COLUMN</div>
<div class="t" style="left:463px;top:163.00px;font-size:11px;line-height:11px;color:#000;font-family:'Liberation Sans',sans-serif;font-weight:normal;transform:scaleX(0.9560);transform-origin:0 0;">AQBranford</div>
<div class="t" style="left:876px;top:163.00px;font-size:11px;line-height:11px;color:#000;font-family:'Liberation Sans',sans-serif;font-weight:normal;transform:scaleX(0.8900);transform-origin:0 0;">ADMIN</div>
<div class="t" style="left:1057px;top:163.00px;font-size:11px;line-height:11px;color:#000;font-family:'Liberation Sans',sans-serif;font-weight:normal;transform:scaleX(0.8900);transform-origin:0 0;">SAMPLE</div>
<div style="left:50px;top:191px;width:1113px;height:1px;background:#efefef;"></div>
<div class="t" style="left:16.75px;top:179.00px;font-size:11px;line-height:11px;color:#000;font-family:'Liberation Sans',sans-serif;font-weight:normal;">27</div>
<svg style="position:absolute;left:52px;top:178px" width="13" height="12" viewBox="0 0 13 12"><rect x="0.5" y="0.5" width="12" height="11" fill="#fff" stroke="#8a8a8a"/><rect x="0" y="0" width="13" height="3" fill="#4aa6e8"/><path d="M0 6.5H13M0 9.5H13M4.5 3V12M8.5 3V12" stroke="#a0a0a0"/></svg>
<div class="t" style="left:76px;top:179.00px;font-size:11px;line-height:11px;color:#000;font-family:'Liberation Sans',sans-serif;font-weight:normal;transform:scaleX(0.9537);transform-origin:0 0;">AQWindham</div>
<div class="t" style="left:306px;top:179.00px;font-size:11px;line-height:11px;color:#000;font-family:'Liberation Sans',sans-serif;font-weight:normal;transform:scaleX(0.8977);transform-origin:0 0;">TABLE_COLUMN</div>
<div class="t" style="left:463px;top:179.00px;font-size:11px;line-height:11px;color:#000;font-family:'Liberation Sans',sans-serif;font-weight:normal;transform:scaleX(0.9560);transform-origin:0 0;">AQBranford</div>
<div class="t" style="left:876px;top:179.00px;font-size:11px;line-height:11px;color:#000;font-family:'Liberation Sans',sans-serif;font-weight:normal;transform:scaleX(0.8900);transform-origin:0 0;">ADMIN</div>
<div class="t" style="left:1057px;top:179.00px;font-size:11px;line-height:11px;color:#000;font-family:'Liberation Sans',sans-serif;font-weight:normal;transform:scaleX(0.8900);transform-origin:0 0;">SAMPLE</div>
<div style="left:50px;top:207px;width:1113px;height:1px;background:#efefef;"></div>
<div class="t" style="left:16.75px;top:195.00px;font-size:11px;line-height:11px;color:#000;font-family:'Liberation Sans',sans-serif;font-weight:normal;">28</div>
<svg style="position:absolute;left:52px;top:194px" width="13" height="12" viewBox="0 0 13 12"><rect x="0.5" y="0.5" width="12" height="11" fill="#fff" stroke="#8a8a8a"/><rect x="0" y="0" width="13" height="3" fill="#4aa6e8"/><path d="M0 6.5H13M0 9.5H13M4.5 3V12M8.5 3V12" stroke="#a0a0a0"/></svg>
<div class="t" style="left:76px;top:195.00px;font-size:11px;line-height:11px;color:#000;font-family:'Liberation Sans',sans-serif;font-weight:normal;transform:scaleX(0.9627);transform-origin:0 0;">AQCanterbury</div>
<div class="t" style="left:306px;top:195.00px;font-size:11px;line-height:11px;color:#000;font-family:'Liberation Sans',sans-serif;font-weight:normal;transform:scaleX(0.8977);transform-origin:0 0;">TABLE_COLUMN</div>
<div class="t" style="left:463px;top:195.00px;font-size:11px;line-height:11px;color:#000;font-family:'Liberation Sans',sans-serif;font-weight:normal;transform:scaleX(0.9616);transform-origin:0 0;">AQBridgeport</div>
<div class="t" style="left:876px;top:195.00px;font-size:11px;line-height:11px;color:#000;font-family:'Liberation Sans',sans-serif;font-weight:normal;transform:scaleX(0.8900);transform-origin:0 0;">ADMIN</div>
<div class="t" style="left:1057px;top:195.00px;font-size:11px;line-height:11px;color:#000;font-family:'Liberation Sans',sans-serif;font-weight:normal;transform:scaleX(0.8900);transform-origin:0 0;">SAMPLE</div>
<div style="left:50px;top:223px;width:1113px;height:1px;background:#efefef;"></div>
<div class="t" style="left:16.75px;top:211.00px;font-size:11px;line-height:11px;color:#000;font-family:'Liberation Sans',sans-serif;font-weight:normal;">29</div>
<svg style="position:absolute;left:52px;top:210px" width="13" height="12" viewBox="0 0 13 12"><rect x="0.5" y="0.5" width="12" height="11" fill="#fff" stroke="#8a8a8a"/><rect x="0" y="0" width="13" height="3" fill="#4aa6e8"/><path d="M0 6.5H13M0 9.5H13M4.5 3V12M8.5 3V12" stroke="#a0a0a0"/></svg>
<div class="t" style="left:76px;top:211.00px;font-size:11px;line-height:11px;color:#000;font-family:'Liberation Sans',sans-serif;font-weight:normal;transform:scaleX(0.9562);transform-origin:0 0;">AQEastLyme</div>
<div class="t" style="left:306px;top:211.00px;font-size:11px;line-height:11px;color:#000;font-family:'Liberation Sans',sans-serif;font-weight:normal;transform:scaleX(0.8977);transform-origin:0 0;">TABLE_COLUMN</div>
<div class="t" style="left:463px;top:211.00px;font-size:11px;line-height:11px;color:#000;font-family:'Liberation Sans',sans-serif;font-weight:normal;transform:scaleX(0.9616);transform-origin:0 0;">AQBridgeport</div>
<div class="t" style="left:876px;top:211.00px;font-size:11px;line-height:11px;color:#000;font-family:'Liberation Sans',sans-serif;font-weight:normal;transform:scaleX(0.8900);transform-origin:0 0;">ADMIN</div>
<div class="t" style="left:1057px;top:211.00px;font-size:11px;line-height:11px;color:#000;font-family:'Liberation Sans',sans-serif;font-weight:normal;transform:scaleX(0.8900);transform-origin:0 0;">SAMPLE</div>
<div style="left:50px;top:239px;width:1113px;height:1px;background:#efefef;"></div>
<div class="t" style="left:16.75px;top:227.00px;font-size:11px;line-height:11px;color:#000;font-family:'Liberation Sans',sans-serif;font-weight:normal;">30</div>
<svg style="position:absolute;left:52px;top:226px" width="13" height="12" viewBox="0 0 13 12"><rect x="0.5" y="0.5" width="12" height="11" fill="#fff" stroke="#8a8a8a"/><rect x="0" y="0" width="13" height="3" fill="#4aa6e8"/><path d="M0 6.5H13M0 9.5H13M4.5 3V12M8.5 3V12" stroke="#a0a0a0"/></svg>
<div class="t" style="left:76px;top:227.00px;font-size:11px;line-height:11px;color:#000;font-family:'Liberation Sans',sans-serif;font-weight:normal;transform:scaleX(0.9484);transform-origin:0 0;">AQEnfield</div>
<div class="t" style="left:306px;top:227.00px;font-size:11px;line-height:11px;color:#000;font-family:'Liberation Sans',sans-serif;font-weight:normal;transform:scaleX(0.8977);transform-origin:0 0;">TABLE_COLUMN</div>
<div class="t" style="left:463px;top:227.00px;font-size:11px;line-height:11px;color:#000;font-family:'Liberation Sans',sans-serif;font-weight:normal;transform:scaleX(0.9616);transform-origin:0 0;">AQBridgeport</div>
<div class="t" style="left:876px;top:227.00px;font-size:11px;line-height:11px;color:#000;font-family:'Liberation Sans',sans-serif;font-weight:normal;transform:scaleX(0.8900);transform-origin:0 0;">ADMIN</div>
<div class="t" style="left:1057px;top:227.00px;font-size:11px;line-height:11px;color:#000;font-family:'Liberation Sans',sans-serif;font-weight:normal;transform:scaleX(0.8900);transform-origin:0 0;">SAMPLE</div>
<div style="left:50px;top:255px;width:1113px;height:1px;background:#efefef;"></div>
<div class="t" style="left:16.75px;top:243.00px;font-size:11px;line-height:11px;color:#000;font-family:'Liberation Sans',sans-serif;font-weight:normal;">31</div>
<svg style="position:absolute;left:52px;top:242px" width="13" height="12" viewBox="0 0 13 12"><rect x="0.5" y="0.5" width="12" height="11" fill="#fff" stroke="#8a8a8a"/><rect x="0" y="0" width="13" height="3" fill="#4aa6e8"/><path d="M0 6.5H13M0 9.5H13M4.5 3V12M8.5 3V12" stroke="#a0a0a0"/></svg>
<div class="t" style="left:76px;top:243.00px;font-size:11px;line-height:11px;color:#000;font-family:'Liberation Sans',sans-serif;font-weight:normal;transform:scaleX(0.9571);transform-origin:0 0;">AQNewtown</div>
<div class="t" style="left:306px;top:243.00px;font-size:11px;line-height:11px;color:#000;font-family:'Liberation Sans',sans-serif;font-weight:normal;transform:scaleX(0.8977);transform-origin:0 0;">TABLE_COLUMN</div>
<div class="t" style="left:463px;top:243.00px;font-size:11px;line-height:11px;color:#000;font-family:'Liberation Sans',sans-serif;font-weight:normal;transform:scaleX(0.9616);transform-origin:0 0;">AQBridgeport</div>
<div class="t" style="left:876px;top:243.00px;font-size:11px;line-height:11px;color:#000;font-family:'Liberation Sans',sans-serif;font-weight:normal;transform:scaleX(0.8900);transform-origin:0 0;">ADMIN</div>
<div class="t" style="left:1057px;top:243.00px;font-size:11px;line-height:11px;color:#000;font-family:'Liberation Sans',sans-serif;font-weight:normal;transform:scaleX(0.8900);transform-origin:0 0;">SAMPLE</div>
<div style="left:50px;top:271px;width:1113px;height:1px;background:#efefef;"></div>
<div class="t" style="left:16.75px;top:259.00px;font-size:11px;line-height:11px;color:#000;font-family:'Liberation Sans',sans-serif;font-weight:normal;">32</div>
<svg style="position:absolute;left:52px;top:258px" width="13" height="12" viewBox="0 0 13 12"><rect x="0.5" y="0.5" width="12" height="11" fill="#fff" stroke="#8a8a8a"/><rect x="0" y="0" width="13" height="3" fill="#4aa6e8"/><path d="M0 6.5H13M0 9.5H13M4.5 3V12M8.5 3V12" stroke="#a0a0a0"/></svg>
<div class="t" style="left:76px;top:259.00px;font-size:11px;line-height:11px;color:#000;font-family:'Liberation Sans',sans-serif;font-weight:normal;transform:scaleX(0.9528);transform-origin:0 0;">AQNorwich</div>
<div class="t" style="left:306px;top:259.00px;font-size:11px;line-height:11px;color:#000;font-family:'Liberation Sans',sans-serif;font-weight:normal;transform:scaleX(0.8977);transform-origin:0 0;">TABLE_COLUMN</div>
<div class="t" style="left:463px;top:259.00px;font-size:11px;line-height:11px;color:#000;font-family:'Liberation Sans',sans-serif;font-weight:normal;transform:scaleX(0.9616);transform-origin:0 0;">AQBridgeport</div>
<div class="t" style="left:876px;top:259.00px;font-size:11px;line-height:11px;color:#000;font-family:'Liberation Sans',sans-serif;font-weight:normal;transform:scaleX(0.8900);transform-origin:0 0;">ADMIN</div>
<div class="t" style="left:1057px;top:259.00px;font-size:11px;line-height:11px;color:#000;font-family:'Liberation Sans',sans-serif;font-weight:normal;transform:scaleX(0.8900);transform-origin:0 0;">SAMPLE</div>
<div style="left:50px;top:287px;width:1113px;height:1px;background:#efefef;"></div>
<div class="t" style="left:16.75px;top:275.00px;font-size:11px;line-height:11px;color:#000;font-family:'Liberation Sans',sans-serif;font-weight:normal;">33</div>
<svg style="position:absolute;left:52px;top:274px" width="13" height="12" viewBox="0 0 13 12"><rect x="0.5" y="0.5" width="12" height="11" fill="#fff" stroke="#8a8a8a"/><rect x="0" y="0" width="13" height="3" fill="#4aa6e8"/><path d="M0 6.5H13M0 9.5H13M4.5 3V12M8.5 3V12" stroke="#a0a0a0"/></svg>
<div class="t" style="left:76px;top:275.00px;font-size:11px;line-height:11px;color:#000;font-family:'Liberation Sans',sans-serif;font-weight:normal;transform:scaleX(0.9539);transform-origin:0 0;">AQRedding</div>
<div class="t" style="left:306px;top:275.00px;font-size:11px;line-height:11px;color:#000;font-family:'Liberation Sans',sans-serif;font-weight:normal;transform:scaleX(0.8977);transform-origin:0 0;">TABLE_COLUMN</div>
<div class="t" style="left:463px;top:275.00px;font-size:11px;line-height:11px;color:#000;font-family:'Liberation Sans',sans-serif;font-weight:normal;transform:scaleX(0.9616);transform-origin:0 0;">AQBridgeport</div>
<div class="t" style="left:876px;top:275.00px;font-size:11px;line-height:11px;color:#000;font-family:'Liberation Sans',sans-serif;font-weight:normal;transform:scaleX(0.8900);transform-origin:0 0;">ADMIN</div>
<div class="t" style="left:1057px;top:275.00px;font-size:11px;line-height:11px;color:#000;font-family:'Liberation Sans',sans-serif;font-weight:normal;transform:scaleX(0.8900);transform-origin:0 0;">SAMPLE</div>
<div style="left:50px;top:303px;width:1113px;height:1px;background:#efefef;"></div>
<div class="t" style="left:16.75px;top:291.00px;font-size:11px;line-height:11px;color:#000;font-family:'Liberation Sans',sans-serif;font-weight:normal;">34</div>
<svg style="position:absolute;left:52px;top:290px" width="13" height="12" viewBox="0 0 13 12"><rect x="0.5" y="0.5" width="12" height="11" fill="#fff" stroke="#8a8a8a"/><rect x="0" y="0" width="13" height="3" fill="#4aa6e8"/><path d="M0 6.5H13M0 9.5H13M4.5 3V12M8.5 3V12" stroke="#a0a0a0"/></svg>
<div class="t" style="left:76px;top:291.00px;font-size:11px;line-height:11px;color:#000;font-family:'Liberation Sans',sans-serif;font-weight:normal;transform:scaleX(0.9457);transform-origin:0 0;">AQSalem</div>
<div class="t" style="left:306px;top:291.00px;font-size:11px;line-height:11px;color:#000;font-family:'Liberation Sans',sans-serif;font-weight:normal;transform:scaleX(0.8977);transform-origin:0 0;">TABLE_COLUMN</div>
<div class="t" style="left:463px;top:291.00px;font-size:11px;line-height:11px;color:#000;font-family:'Liberation Sans',sans-serif;font-weight:normal;transform:scaleX(0.9616);transform-origin:0 0;">AQBridgeport</div>
<div class="t" style="left:876px;top:291.00px;font-size:11px;line-height:11px;color:#000;font-family:'Liberation Sans',sans-serif;font-weight:normal;transform:scaleX(0.8900);transform-origin:0 0;">ADMIN</div>
<div class="t" style="left:1057px;top:291.00px;font-size:11px;line-height:11px;color:#000;font-family:'Liberation Sans',sans-serif;font-weight:normal;transform:scaleX(0.8900);transform-origin:0 0;">SAMPLE</div>
<div style="left:50px;top:319px;width:1113px;height:1px;background:#efefef;"></div>
<div class="t" style="left:16.75px;top:307.00px;font-size:11px;line-height:11px;color:#000;font-family:'Liberation Sans',sans-serif;font-weight:normal;">35</div>
<svg style="position:absolute;left:52px;top:306px" width="13" height="12" viewBox="0 0 13 12"><rect x="0.5" y="0.5" width="12" height="11" fill="#fff" stroke="#8a8a8a"/><rect x="0" y="0" width="13" height="3" fill="#4aa6e8"/><path d="M0 6.5H13M0 9.5H13M4.5 3V12M8.5 3V12" stroke="#a0a0a0"/></svg>
<div class="t" style="left:76px;top:307.00px;font-size:11px;line-height:11px;color:#000;font-family:'Liberation Sans',sans-serif;font-weight:normal;transform:scaleX(0.9502);transform-origin:0 0;">AQSharon</div>
<div class="t" style="left:306px;top:307.00px;font-size:11px;line-height:11px;color:#000;font-family:'Liberation Sans',sans-serif;font-weight:normal;transform:scaleX(0.8977);transform-origin:0 0;">TABLE_COLUMN</div>
<div class="t" style="left:463px;top:307.00px;font-size:11px;line-height:11px;color:#000;font-family:'Liberation Sans',sans-serif;font-weight:normal;transform:scaleX(0.9616);transform-origin:0 0;">AQBridgeport</div>
<div class="t" style="left:876px;top:307.00px;font-size:11px;line-height:11px;color:#000;font-family:'Liberation Sans',sans-serif;font-weight:normal;transform:scaleX(0.8900);transform-origin:0 0;">ADMIN</div>
<div class="t" style="left:1057px;top:307.00px;font-size:11px;line-height:11px;color:#000;font-family:'Liberation Sans',sans-serif;font-weight:normal;transform:scaleX(0.8900);transform-origin:0 0;">SAMPLE</div>
<div style="left:50px;top:335px;width:1113px;height:1px;background:#efefef;"></div>
<div class="t" style="left:16.75px;top:323.00px;font-size:11px;line-height:11px;color:#000;font-family:'Liberation Sans',sans-serif;font-weight:normal;">36</div>
<svg style="position:absolute;left:52px;top:322px" width="13" height="12" viewBox="0 0 13 12"><rect x="0.5" y="0.5" width="12" height="11" fill="#fff" stroke="#8a8a8a"/><rect x="0" y="0" width="13" height="3" fill="#4aa6e8"/><path d="M0 6.5H13M0 9.5H13M4.5 3V12M8.5 3V12" stroke="#a0a0a0"/></svg>
<div class="t" style="left:76px;top:323.00px;font-size:11px;line-height:11px;color:#000;font-family:'Liberation Sans',sans-serif;font-weight:normal;transform:scaleX(0.9750);transform-origin:0 0;">AQTolland</div>
<div class="t" style="left:306px;top:323.00px;font-size:11px;line-height:11px;color:#000;font-family:'Liberation Sans',sans-serif;font-weight:normal;transform:scaleX(0.8977);transform-origin:0 0;">TABLE_COLUMN</div>
<div class="t" style="left:463px;top:323.00px;font-size:11px;line-height:11px;color:#000;font-family:'Liberation Sans',sans-serif;font-weight:normal;transform:scaleX(0.9616);transform-origin:0 0;">AQBridgeport</div>
<div class="t" style="left:876px;top:323.00px;font-size:11px;line-height:11px;color:#000;font-family:'Liberation Sans',sans-serif;font-weight:normal;transform:scaleX(0.8900);transform-origin:0 0;">ADMIN</div>
<div class="t" style="left:1057px;top:323.00px;font-size:11px;line-height:11px;color:#000;font-family:'Liberation Sans',sans-serif;font-weight:normal;transform:scaleX(0.8900);transform-origin:0 0;">SAMPLE</div>
<div style="left:50px;top:351px;width:1113px;height:1px;background:#efefef;"></div>
<div class="t" style="left:16.75px;top:339.00px;font-size:11px;line-height:11px;color:#000;font-family:'Liberation Sans',sans-serif;font-weight:normal;">37</div>
<svg style="position:absolute;left:52px;top:338px" width="13" height="12" viewBox="0 0 13 12"><rect x="0.5" y="0.5" width="12" height="11" fill="#fff" stroke="#8a8a8a"/><rect x="0" y="0" width="13" height="3" fill="#4aa6e8"/><path d="M0 6.5H13M0 9.5H13M4.5 3V12M8.5 3V12" stroke="#a0a0a0"/></svg>
<div class="t" style="left:76px;top:339.00px;font-size:11px;line-height:11px;color:#000;font-family:'Liberation Sans',sans-serif;font-weight:normal;transform:scaleX(0.9592);transform-origin:0 0;">AQWinchester</div>
<div class="t" style="left:306px;top:339.00px;font-size:11px;line-height:11px;color:#000;font-family:'Liberation Sans',sans-serif;font-weight:normal;transform:scaleX(0.8977);transform-origin:0 0;">TABLE_COLUMN</div>
<div class="t" style="left:463px;top:339.00px;font-size:11px;line-height:11px;color:#000;font-family:'Liberation Sans',sans-serif;font-weight:normal;transform:scaleX(0.9616);transform-origin:0 0;">AQBridgeport</div>
<div class="t" style="left:876px;top:339.00px;font-size:11px;line-height:11px;color:#000;font-family:'Liberation Sans',sans-serif;font-weight:normal;transform:scaleX(0.8900);transform-origin:0 0;">ADMIN</div>
<div class="t" style="left:1057px;top:339.00px;font-size:11px;line-height:11px;color:#000;font-family:'Liberation Sans',sans-serif;font-weight:normal;transform:scaleX(0.8900);transform-origin:0 0;">SAMPLE</div>
<div style="left:50px;top:367px;width:1113px;height:1px;background:#efefef;"></div>
<div class="t" style="left:16.75px;top:355.00px;font-size:11px;line-height:11px;color:#000;font-family:'Liberation Sans',sans-serif;font-weight:normal;">38</div>
<svg style="position:absolute;left:52px;top:354px" width="13" height="12" viewBox="0 0 13 12"><rect x="0.5" y="0.5" width="12" height="11" fill="#fff" stroke="#8a8a8a"/><rect x="0" y="0" width="13" height="3" fill="#4aa6e8"/><path d="M0 6.5H13M0 9.5H13M4.5 3V12M8.5 3V12" stroke="#a0a0a0"/></svg>
<div class="t" style="left:76px;top:355.00px;font-size:11px;line-height:11px;color:#000;font-family:'Liberation Sans',sans-serif;font-weight:normal;transform:scaleX(0.9645);transform-origin:0 0;">AQMarlborough</div>
<div class="t" style="left:306px;top:355.00px;font-size:11px;line-height:11px;color:#000;font-family:'Liberation Sans',sans-serif;font-weight:normal;transform:scaleX(0.8977);transform-origin:0 0;">TABLE_COLUMN</div>
<div class="t" style="left:463px;top:355.00px;font-size:11px;line-height:11px;color:#000;font-family:'Liberation Sans',sans-serif;font-weight:normal;transform:scaleX(0.9562);transform-origin:0 0;">AQCoventry</div>
<div class="t" style="left:876px;top:355.00px;font-size:11px;line-height:11px;color:#000;font-family:'Liberation Sans',sans-serif;font-weight:normal;transform:scaleX(0.8900);transform-origin:0 0;">ADMIN</div>
<div class="t" style="left:1057px;top:355.00px;font-size:11px;line-height:11px;color:#000;font-family:'Liberation Sans',sans-serif;font-weight:normal;transform:scaleX(0.8900);transform-origin:0 0;">SAMPLE</div>
<div style="left:74px;top:0;width:1px;height:361px;background:#efefef;"></div>
<div style="left:305px;top:0;width:1px;height:361px;background:#efefef;"></div>
<div style="left:462px;top:0;width:1px;height:361px;background:#efefef;"></div>
<div style="left:668px;top:0;width:1px;height:361px;background:#efefef;"></div>
<div style="left:875px;top:0;width:1px;height:361px;background:#efefef;"></div>
<div style="left:1056px;top:0;width:1px;height:361px;background:#efefef;"></div>
<div style="left:1163px;top:0;width:1px;height:361px;background:#efefef;"></div>
</div>
<div style="left:2494px;top:650px;width:18px;height:361px;background:#f0f0f0;"></div>
<svg style="position:absolute;left:2499px;top:657px;" width="9" height="6" viewBox="0 0 9 6"><path d="M0.5 5L4.5 1L8.5 5" stroke="#555" stroke-width="1.4" fill="none"/></svg>
<div style="left:2496px;top:707px;width:15px;height:59px;background:#cdcdcd;"></div>
<svg style="position:absolute;left:2499px;top:999px;" width="9" height="6" viewBox="0 0 9 6"><path d="M0.5 1L4.5 5L8.5 1" stroke="#555" stroke-width="1.4" fill="none"/></svg>
<div class="t" style="left:1338.6px;top:1024.00px;font-size:11px;line-height:11px;color:#000;font-family:'Liberation Sans',sans-serif;font-weight:normal;">124 object(s) found</div>
</body></html>
